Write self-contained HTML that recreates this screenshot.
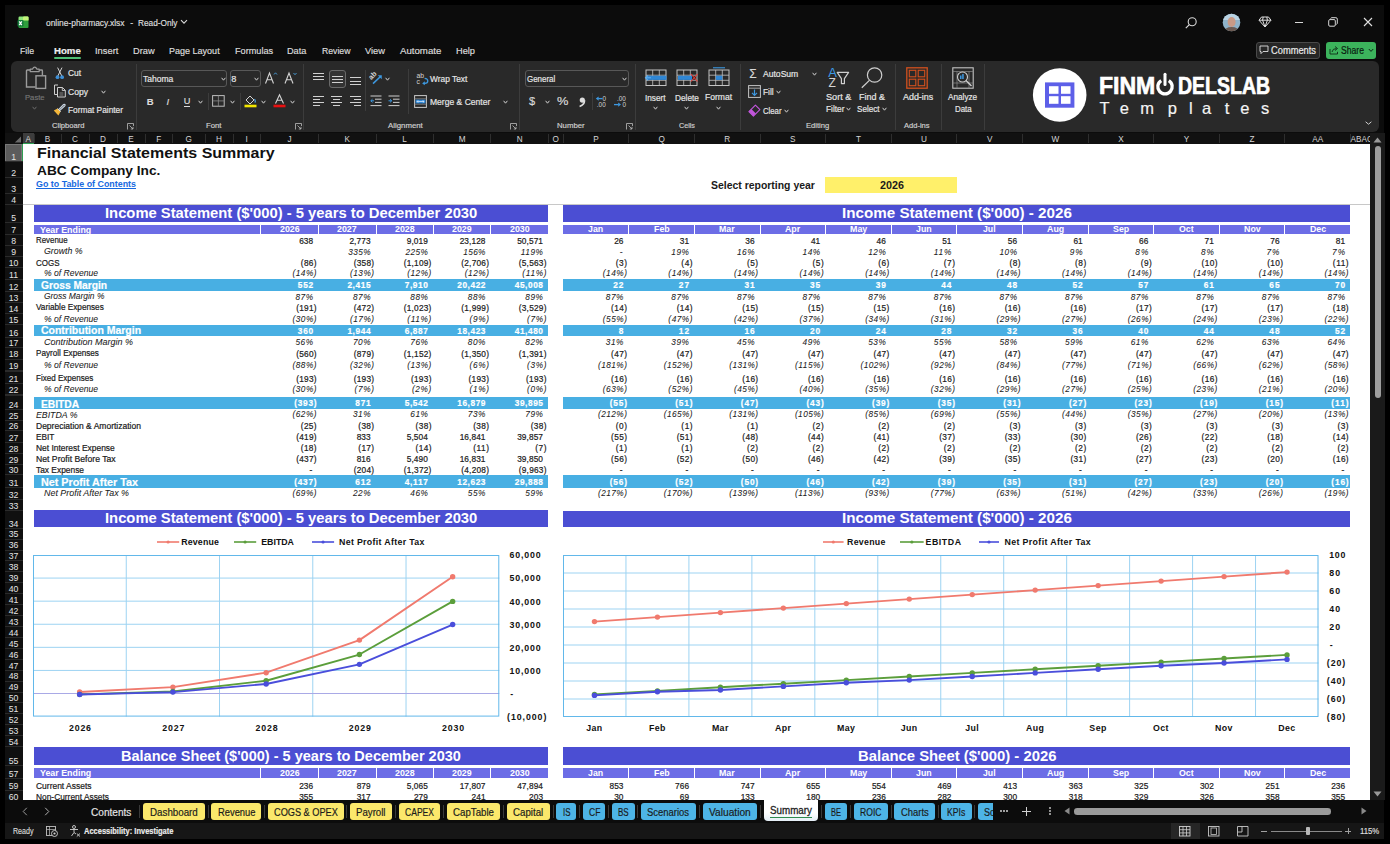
<!DOCTYPE html><html><head><meta charset="utf-8"><style>
html,body{margin:0;padding:0;}
body{width:1390px;height:844px;overflow:hidden;position:relative;background:#000;font-family:"Liberation Sans",sans-serif;}
.t{position:absolute;white-space:pre;}
div{box-sizing:border-box;}
svg{position:absolute;overflow:visible;}
.u{-webkit-text-stroke:0.18px currentColor;}
</style></head><body>
<div style="position:absolute;left:5.00px;top:5.00px;width:1379.00px;height:834.00px;background:#0c0c0c;"></div>
<svg style="left:17px;top:16px" width="12" height="13" viewBox="0 0 12 13">
<rect x="1.5" y="0.5" width="10" height="4.5" rx="1.2" fill="#8ee87a"/>
<rect x="6" y="0.5" width="5.5" height="4.5" rx="1" fill="#c4f47a"/>
<rect x="1.5" y="4.5" width="10" height="7.5" rx="1" fill="#2f9e3c"/>
<rect x="0.5" y="4" width="6" height="6.5" rx="1" fill="#137a3a"/>
<path d="M2.2 5.4 L4.8 9.1 M4.8 5.4 L2.2 9.1" stroke="#fff" stroke-width="1.3"/>
</svg>
<div class="t u" style="left:45.80px;top:18.92px;font-size:8.60px;line-height:8.60px;color:#dcdcdc;transform:scaleX(0.9806);transform-origin:0 0;">online-pharmacy.xlsx</div>
<div class="t u" style="left:130.20px;top:18.92px;font-size:8.60px;line-height:8.60px;color:#dcdcdc;">-</div>
<div class="t u" style="left:137.50px;top:18.92px;font-size:8.60px;line-height:8.60px;color:#dcdcdc;transform:scaleX(0.9609);transform-origin:0 0;">Read-Only</div>
<svg style="left:180px;top:19px" width="8" height="6" viewBox="0 0 8 6"><path d="M1 1.2 L4 4.2 L7 1.2" stroke="#d8d8d8" stroke-width="1.1" fill="none"/></svg>
<svg style="left:1184px;top:16px" width="14" height="14" viewBox="0 0 14 14"><circle cx="8.2" cy="5.8" r="4" stroke="#d8d8d8" stroke-width="1.1" fill="none"/><path d="M5.3 8.7 L1.8 12.2" stroke="#d8d8d8" stroke-width="1.2"/></svg>
<svg style="left:1222px;top:13px" width="19" height="19" viewBox="0 0 19 19">
<defs><clipPath id="av"><circle cx="9.5" cy="9.5" r="8.8"/></clipPath></defs>
<g clip-path="url(#av)"><rect width="19" height="19" fill="#8fb3c9"/><rect y="0" width="19" height="7" fill="#b9d3e3"/>
<ellipse cx="9.6" cy="9" rx="4" ry="5" fill="#c99a86"/><ellipse cx="9.6" cy="19" rx="8" ry="5" fill="#6b5a52"/></g></svg>
<svg style="left:1258px;top:16px" width="14" height="12" viewBox="0 0 14 12"><path d="M3.5 1 H10.5 L13 4.2 L7 11 L1 4.2 Z M1 4.2 H13 M5.2 1 L4.6 4.2 L7 11 L9.4 4.2 L8.8 1" stroke="#e0e0e0" stroke-width="1" fill="none" stroke-linejoin="round"/></svg>
<div style="position:absolute;left:1295.00px;top:21.50px;width:8.00px;height:1.10px;background:#d8d8d8;"></div>
<svg style="left:1328px;top:17px" width="10" height="10" viewBox="0 0 10 10"><rect x="0.7" y="2.6" width="6.6" height="6.6" rx="1.2" stroke="#d8d8d8" stroke-width="1" fill="none"/><path d="M2.6 1.6 Q2.9 0.7 3.8 0.7 H7.9 Q9.3 0.7 9.3 2.1 V6.2 Q9.3 7.1 8.4 7.4" stroke="#d8d8d8" stroke-width="1" fill="none"/></svg>
<svg style="left:1363px;top:17px" width="10" height="10" viewBox="0 0 10 10"><path d="M1 1 L9 9 M9 1 L1 9" stroke="#e0e0e0" stroke-width="1.1"/></svg>
<div class="t u" style="left:20.40px;top:47.01px;font-size:9.20px;line-height:9.20px;color:#dcdcdc;transform:scaleX(0.9519);transform-origin:0 0;">File</div>
<div class="t u" style="left:53.50px;top:46.93px;font-size:9.30px;line-height:9.30px;color:#f0f0f0;font-weight:bold;transform:scaleX(1.0366);transform-origin:0 0;">Home</div>
<div class="t u" style="left:94.60px;top:47.01px;font-size:9.20px;line-height:9.20px;color:#dcdcdc;transform:scaleX(1.0174);transform-origin:0 0;">Insert</div>
<div class="t u" style="left:132.60px;top:47.01px;font-size:9.20px;line-height:9.20px;color:#dcdcdc;transform:scaleX(1.0055);transform-origin:0 0;">Draw</div>
<div class="t u" style="left:169.00px;top:47.01px;font-size:9.20px;line-height:9.20px;color:#dcdcdc;transform:scaleX(0.9815);transform-origin:0 0;">Page Layout</div>
<div class="t u" style="left:235.20px;top:47.01px;font-size:9.20px;line-height:9.20px;color:#dcdcdc;transform:scaleX(0.9957);transform-origin:0 0;">Formulas</div>
<div class="t u" style="left:287.40px;top:47.01px;font-size:9.20px;line-height:9.20px;color:#dcdcdc;transform:scaleX(0.9970);transform-origin:0 0;">Data</div>
<div class="t u" style="left:321.50px;top:47.01px;font-size:9.20px;line-height:9.20px;color:#dcdcdc;transform:scaleX(0.9445);transform-origin:0 0;">Review</div>
<div class="t u" style="left:365.00px;top:47.01px;font-size:9.20px;line-height:9.20px;color:#dcdcdc;transform:scaleX(1.0111);transform-origin:0 0;">View</div>
<div class="t u" style="left:399.70px;top:47.01px;font-size:9.20px;line-height:9.20px;color:#dcdcdc;transform:scaleX(1.0514);transform-origin:0 0;">Automate</div>
<div class="t u" style="left:455.80px;top:47.01px;font-size:9.20px;line-height:9.20px;color:#dcdcdc;transform:scaleX(1.0050);transform-origin:0 0;">Help</div>
<div style="position:absolute;left:53.50px;top:57.00px;width:27.50px;height:2.00px;background:#4fbf75;border-radius:1px;"></div>
<div style="position:absolute;left:1255.7px;top:41.7px;width:64px;height:17px;background:#262626;border:1px solid #4a4a4a;border-radius:3px;"></div>
<svg style="left:1259px;top:45px" width="10" height="10" viewBox="0 0 10 10"><path d="M1 1 H9 V6.5 H4 L2 8.6 V6.5 H1 Z" stroke="#e0e0e0" stroke-width="0.9" fill="none" stroke-linejoin="round"/></svg>
<div class="t u" style="left:1270.60px;top:45.73px;font-size:10.00px;line-height:10.00px;color:#ececec;transform:scaleX(0.9307);transform-origin:0 0;">Comments</div>
<div style="position:absolute;left:1326px;top:41.7px;width:50px;height:17px;background:#3cb35c;border-radius:3px;"></div>
<svg style="left:1328.5px;top:45px" width="10" height="10" viewBox="0 0 10 10"><path d="M1 4 V9 H8.5 V6.8" stroke="#0d2a16" stroke-width="0.9" fill="none"/><path d="M3 7 Q3.5 3.5 7.5 3.5 M6 1.5 L8.5 3.5 L6 5.5" stroke="#0d2a16" stroke-width="0.9" fill="none"/></svg>
<div class="t u" style="left:1341.00px;top:45.73px;font-size:10.00px;line-height:10.00px;color:#0a2010;transform:scaleX(0.8614);transform-origin:0 0;-webkit-text-stroke:0.2px #0a2010;">Share</div>
<svg style="left:1368px;top:48px" width="6" height="5" viewBox="0 0 6 5"><path d="M0.8 1 L3 3.4 L5.2 1" stroke="#0d2a16" stroke-width="1" fill="none"/></svg>
<div style="position:absolute;left:11.00px;top:61.30px;width:1368.00px;height:71.20px;background:#292929;border-radius:6px;"></div>
<div style="position:absolute;left:135.50px;top:64.00px;width:1.00px;height:65.50px;background:#3c3c3c;"></div>
<div style="position:absolute;left:303.30px;top:64.00px;width:1.00px;height:65.50px;background:#3c3c3c;"></div>
<div style="position:absolute;left:518.60px;top:64.00px;width:1.00px;height:65.50px;background:#3c3c3c;"></div>
<div style="position:absolute;left:634.70px;top:64.00px;width:1.00px;height:65.50px;background:#3c3c3c;"></div>
<div style="position:absolute;left:739.70px;top:64.00px;width:1.00px;height:65.50px;background:#3c3c3c;"></div>
<div style="position:absolute;left:894.70px;top:64.00px;width:1.00px;height:65.50px;background:#3c3c3c;"></div>
<div style="position:absolute;left:940.70px;top:64.00px;width:1.00px;height:65.50px;background:#3c3c3c;"></div>
<div style="position:absolute;left:984.40px;top:64.00px;width:1.00px;height:65.50px;background:#3c3c3c;"></div>
<svg style="left:25px;top:66px" width="22" height="24" viewBox="0 0 22 24">
<path d="M5.2 4 H2.2 Q1.5 4 1.5 4.7 V21 H10.5" stroke="#9c9c9c" stroke-width="1.4" fill="none"/>
<path d="M5.2 5.6 V3.2 H7.4 Q8.4 1.2 9.7 1.2 Q11 1.2 12 3.2 H14.2 V5.6 Z" stroke="#9c9c9c" stroke-width="1.2" fill="none" stroke-linejoin="round"/>
<path d="M14.2 4 H16.7 Q17.4 4 17.4 4.7 V9.5" stroke="#9c9c9c" stroke-width="1.4" fill="none"/>
<rect x="11" y="9.8" width="9.6" height="12.6" stroke="#9c9c9c" stroke-width="1.4" fill="none"/>
</svg>
<div class="t u" style="left:24.70px;top:94.20px;font-size:7.80px;line-height:7.80px;color:#767676;transform:scaleX(0.9835);transform-origin:0 0;">Paste</div>
<svg style="left:32.0px;top:106.0px" width="5" height="4" viewBox="0 0 5 4"><path d="M0.6 0.8 L2.5 3.2 L4.4 0.8" stroke="#6a6a6a" stroke-width="1" fill="none"/></svg>
<svg style="left:55px;top:67px" width="10" height="13" viewBox="0 0 10 13">
<path d="M2.6 0.6 L6.8 9 M7 0.6 L2.8 9" stroke="#d4d4d4" stroke-width="1" fill="none"/>
<circle cx="2.5" cy="10.2" r="1.9" fill="#3d8fd6"/><circle cx="7.1" cy="10.2" r="1.9" fill="#3d8fd6"/></svg>
<div class="t u" style="left:68.00px;top:69.12px;font-size:8.60px;line-height:8.60px;color:#e6e6e6;transform:scaleX(0.9721);transform-origin:0 0;">Cut</div>
<svg style="left:53px;top:84px" width="14" height="14" viewBox="0 0 14 14">
<path d="M5 1 H1.5 V10.5 H4" stroke="#cfcfcf" stroke-width="1" fill="none"/>
<path d="M4.5 3.5 H9.5 L12.3 6.3 V13 H4.5 Z" stroke="#cfcfcf" stroke-width="1" fill="none" stroke-linejoin="round"/>
<path d="M9.3 3.5 V6.5 H12.3" stroke="#cfcfcf" stroke-width="0.9" fill="none"/>
<path d="M6.5 9 H10.3 M6.5 11 H10.3" stroke="#9a9a9a" stroke-width="0.8"/></svg>
<div class="t u" style="left:68.00px;top:87.62px;font-size:8.60px;line-height:8.60px;color:#e6e6e6;transform:scaleX(0.9960);transform-origin:0 0;">Copy</div>
<svg style="left:100.7px;top:90.3px" width="5" height="4" viewBox="0 0 5 4"><path d="M0.6 0.8 L2.5 3.2 L4.4 0.8" stroke="#d0d0d0" stroke-width="1" fill="none"/></svg>
<svg style="left:53px;top:103px" width="13" height="13" viewBox="0 0 13 13">
<path d="M0.8 7.6 L4.6 5.6 L7.6 8.6 L5.4 12.4 Z" fill="#f3b63a"/>
<path d="M4.6 5.6 L7.6 8.6" stroke="#e8e8e8" stroke-width="1"/>
<path d="M5.6 6.6 L10.6 1.6 Q11.6 1 12 1.6 Q12.4 2.2 11.6 3 L6.6 7.6" stroke="#c8d4e0" stroke-width="1.2" fill="none"/></svg>
<div class="t u" style="left:68.00px;top:106.22px;font-size:8.60px;line-height:8.60px;color:#e6e6e6;transform:scaleX(0.9668);transform-origin:0 0;">Format Painter</div>
<div class="t u" style="left:52.40px;top:121.68px;font-size:7.70px;line-height:7.70px;color:#cfcfcf;transform:scaleX(0.9892);transform-origin:0 0;">Clipboard</div>
<svg style="left:127px;top:122.5px" width="7" height="7" viewBox="0 0 7 7"><path d="M0.5 6.5 V0.5 H6.5 V3" stroke="#bdbdbd" stroke-width="0.8" fill="none"/><path d="M2.5 2.5 L6 6 M6 3.8 V6 H3.8" stroke="#bdbdbd" stroke-width="0.8" fill="none"/></svg>
<div style="position:absolute;left:141.4px;top:70px;width:86px;height:17.3px;border:1px solid #585858;border-radius:3px;"></div>
<div class="t u" style="left:143.20px;top:74.81px;font-size:9.20px;line-height:9.20px;color:#e8e8e8;transform:scaleX(0.9282);transform-origin:0 0;">Tahoma</div>
<svg style="left:221.0px;top:77.2px" width="5" height="4" viewBox="0 0 5 4"><path d="M0.6 0.8 L2.5 3.2 L4.4 0.8" stroke="#d0d0d0" stroke-width="1" fill="none"/></svg>
<div style="position:absolute;left:229.5px;top:70px;width:31px;height:17.3px;border:1px solid #585858;border-radius:3px;"></div>
<div class="t u" style="left:231.20px;top:74.81px;font-size:9.20px;line-height:9.20px;color:#e8e8e8;">8</div>
<svg style="left:253.8px;top:77.2px" width="5" height="4" viewBox="0 0 5 4"><path d="M0.6 0.8 L2.5 3.2 L4.4 0.8" stroke="#d0d0d0" stroke-width="1" fill="none"/></svg>
<svg style="left:264px;top:71px" width="34" height="14" viewBox="0 0 34 14">
<path d="M1.5 12.5 L5.5 2 L9.5 12.5 M3 8.7 H8" stroke="#d4d4d4" stroke-width="1.1" fill="none"/>
<path d="M10 3.5 L11.5 1.8 L13 3.5" stroke="#4aa3e0" stroke-width="0.9" fill="none"/>
<path d="M21 12.5 L25 2 L29 12.5 M22.5 8.7 H27.5" stroke="#d4d4d4" stroke-width="1.1" fill="none"/>
<path d="M29.5 2 L31 3.7 L32.5 2" stroke="#4aa3e0" stroke-width="0.9" fill="none"/></svg>
<div class="t u" style="left:146.80px;top:96.96px;font-size:9.50px;line-height:9.50px;color:#dcdcdc;font-weight:bold;">B</div>
<div class="t u" style="left:166.50px;top:96.96px;font-size:9.50px;line-height:9.50px;color:#dcdcdc;font-style:italic;">I</div>
<div class="t u" style="left:183.70px;top:96.61px;font-size:9.20px;line-height:9.20px;color:#dcdcdc;">U</div>
<div style="position:absolute;left:183.70px;top:106.00px;width:6.50px;height:0.90px;background:#dcdcdc;"></div>
<svg style="left:198.1px;top:99.5px" width="5" height="4" viewBox="0 0 5 4"><path d="M0.6 0.8 L2.5 3.2 L4.4 0.8" stroke="#d0d0d0" stroke-width="1" fill="none"/></svg>
<div style="position:absolute;left:208.40px;top:93.00px;width:1.00px;height:17.00px;background:#3c3c3c;"></div>
<svg style="left:211.5px;top:95px" width="13" height="12" viewBox="0 0 13 12">
<rect x="0.6" y="0.6" width="11.6" height="10.6" stroke="#bdbdbd" stroke-width="1" fill="none"/>
<path d="M6.4 0.6 V11.2 M0.6 5.9 H12.2" stroke="#8a8a8a" stroke-width="0.8"/></svg>
<svg style="left:229.8px;top:99.5px" width="5" height="4" viewBox="0 0 5 4"><path d="M0.6 0.8 L2.5 3.2 L4.4 0.8" stroke="#d0d0d0" stroke-width="1" fill="none"/></svg>
<div style="position:absolute;left:239.80px;top:93.00px;width:1.00px;height:17.00px;background:#3c3c3c;"></div>
<svg style="left:243.5px;top:94px" width="13" height="14" viewBox="0 0 13 14">
<path d="M2 6 L6 2 L10 6 L6 10 Z" stroke="#d4d4d4" stroke-width="1" fill="none"/>
<path d="M10.5 5 Q12 7.5 10.7 8.5" stroke="#4aa3e0" stroke-width="1.2" fill="none"/>
<rect x="0.5" y="10.7" width="12" height="2.6" fill="#f2e600"/></svg>
<svg style="left:260.5px;top:99.5px" width="5" height="4" viewBox="0 0 5 4"><path d="M0.6 0.8 L2.5 3.2 L4.4 0.8" stroke="#d0d0d0" stroke-width="1" fill="none"/></svg>
<svg style="left:272.5px;top:94px" width="13" height="14" viewBox="0 0 13 14">
<path d="M2.5 9.5 L6.5 0.8 L10.5 9.5 M4 6.3 H9" stroke="#d4d4d4" stroke-width="1.1" fill="none"/>
<rect x="0.5" y="10.7" width="12" height="2.6" fill="#e81010"/></svg>
<svg style="left:290.1px;top:99.5px" width="5" height="4" viewBox="0 0 5 4"><path d="M0.6 0.8 L2.5 3.2 L4.4 0.8" stroke="#d0d0d0" stroke-width="1" fill="none"/></svg>
<div class="t u" style="left:205.80px;top:121.68px;font-size:7.70px;line-height:7.70px;color:#cfcfcf;transform:scaleX(1.0065);transform-origin:0 0;">Font</div>
<svg style="left:295px;top:122.5px" width="7" height="7" viewBox="0 0 7 7"><path d="M0.5 6.5 V0.5 H6.5 V3" stroke="#bdbdbd" stroke-width="0.8" fill="none"/><path d="M2.5 2.5 L6 6 M6 3.8 V6 H3.8" stroke="#bdbdbd" stroke-width="0.8" fill="none"/></svg>
<div style="position:absolute;left:312.70px;top:72.50px;width:11.00px;height:1.00px;background:#d0d0d0;"></div>
<div style="position:absolute;left:312.70px;top:75.80px;width:11.00px;height:1.00px;background:#d0d0d0;"></div>
<div style="position:absolute;left:312.70px;top:79.10px;width:11.00px;height:1.00px;background:#d0d0d0;"></div>
<div style="position:absolute;left:328.5px;top:70.3px;width:17.4px;height:17.4px;border:1px solid #6a6a6a;border-radius:3px;background:#333;"></div>
<div style="position:absolute;left:331.50px;top:75.50px;width:11.00px;height:1.00px;background:#d0d0d0;"></div>
<div style="position:absolute;left:331.50px;top:78.50px;width:11.00px;height:1.00px;background:#d0d0d0;"></div>
<div style="position:absolute;left:331.50px;top:81.50px;width:11.00px;height:1.00px;background:#d0d0d0;"></div>
<div style="position:absolute;left:349.80px;top:77.40px;width:11.00px;height:1.00px;background:#d0d0d0;"></div>
<div style="position:absolute;left:349.80px;top:80.80px;width:11.00px;height:1.00px;background:#d0d0d0;"></div>
<div style="position:absolute;left:349.80px;top:84.20px;width:11.00px;height:1.00px;background:#d0d0d0;"></div>
<div style="position:absolute;left:365.30px;top:70.00px;width:1.00px;height:40.60px;background:#3c3c3c;"></div>
<svg style="left:369px;top:71px" width="15" height="15" viewBox="0 0 15 15">
<text x="0" y="0" font-size="7.2" font-weight="bold" fill="#d8d8d8" font-family="Liberation Sans" transform="translate(2.2 9.2) rotate(-45)">ab</text>
<path d="M4 12.6 L11.8 5.2" stroke="#3d98e0" stroke-width="1.5"/><path d="M8.8 4.3 L12.8 4.2 L12.7 8.2 Z" fill="#3d98e0"/></svg>
<svg style="left:385.3px;top:77.3px" width="5" height="4" viewBox="0 0 5 4"><path d="M0.6 0.8 L2.5 3.2 L4.4 0.8" stroke="#d0d0d0" stroke-width="1" fill="none"/></svg>
<div style="position:absolute;left:312.70px;top:96.00px;width:11.00px;height:1.00px;background:#d0d0d0;"></div>
<div style="position:absolute;left:312.70px;top:99.00px;width:7.00px;height:1.00px;background:#d0d0d0;"></div>
<div style="position:absolute;left:312.70px;top:102.00px;width:11.00px;height:1.00px;background:#d0d0d0;"></div>
<div style="position:absolute;left:312.70px;top:105.00px;width:7.00px;height:1.00px;background:#d0d0d0;"></div>
<div style="position:absolute;left:331.00px;top:96.00px;width:11.00px;height:1.00px;background:#d0d0d0;"></div>
<div style="position:absolute;left:333.00px;top:99.00px;width:7.00px;height:1.00px;background:#d0d0d0;"></div>
<div style="position:absolute;left:331.00px;top:102.00px;width:11.00px;height:1.00px;background:#d0d0d0;"></div>
<div style="position:absolute;left:333.00px;top:105.00px;width:7.00px;height:1.00px;background:#d0d0d0;"></div>
<div style="position:absolute;left:349.80px;top:96.00px;width:11.00px;height:1.00px;background:#d0d0d0;"></div>
<div style="position:absolute;left:353.80px;top:99.00px;width:7.00px;height:1.00px;background:#d0d0d0;"></div>
<div style="position:absolute;left:349.80px;top:102.00px;width:11.00px;height:1.00px;background:#d0d0d0;"></div>
<div style="position:absolute;left:353.80px;top:105.00px;width:7.00px;height:1.00px;background:#d0d0d0;"></div>
<svg style="left:370px;top:95px" width="31" height="12" viewBox="0 0 31 12">
<path d="M0.5 1 H11.5 M5 4.2 H11.5 M5 7.4 H11.5 M0.5 10.6 H11.5" stroke="#cfcfcf" stroke-width="1"/>
<path d="M4 5.8 H0.8 M2.5 4.2 L0.8 5.8 L2.5 7.4" stroke="#3d98e0" stroke-width="1" fill="none"/>
<path d="M18.5 1 H29.5 M23 4.2 H29.5 M23 7.4 H29.5 M18.5 10.6 H29.5" stroke="#cfcfcf" stroke-width="1"/>
<path d="M18.5 5.8 H21.7 M20 4.2 L21.7 5.8 L20 7.4" stroke="#3d98e0" stroke-width="1" fill="none"/></svg>
<div style="position:absolute;left:407.60px;top:69.00px;width:1.00px;height:45.00px;background:#3c3c3c;"></div>
<svg style="left:415.5px;top:72px" width="13" height="13" viewBox="0 0 13 13">
<text x="0.6" y="6.4" font-size="6.8" fill="#d4d4d4" font-family="Liberation Sans">ab</text>
<text x="0.6" y="12.2" font-size="6.8" fill="#d4d4d4" font-family="Liberation Sans">c</text>
<path d="M8.6 6.4 Q11.8 6.6 11.8 9 Q11.8 11.4 8.8 11.4 H7.5" stroke="#3d98e0" stroke-width="1.3" fill="none"/>
<path d="M8.8 9.3 L6.2 11.4 L8.8 13.2 Z" fill="#3d98e0"/></svg>
<div class="t u" style="left:429.70px;top:74.92px;font-size:8.60px;line-height:8.60px;color:#e6e6e6;transform:scaleX(0.9714);transform-origin:0 0;">Wrap Text</div>
<svg style="left:414px;top:94.5px" width="13" height="13" viewBox="0 0 13 13">
<rect x="0.6" y="0.6" width="11.8" height="11.8" stroke="#c8c8c8" stroke-width="1" fill="none"/>
<path d="M0.6 3.8 H12.4 M0.6 9.2 H12.4" stroke="#8a8a8a" stroke-width="0.8"/>
<rect x="1.5" y="4.6" width="10" height="3.8" fill="#2f86d4"/>
<path d="M3 6.5 H10 M4.2 5.3 L3 6.5 L4.2 7.7 M8.8 5.3 L10 6.5 L8.8 7.7" stroke="#e8f2ff" stroke-width="0.7" fill="none"/></svg>
<div class="t u" style="left:429.70px;top:97.52px;font-size:8.60px;line-height:8.60px;color:#e6e6e6;transform:scaleX(0.9931);transform-origin:0 0;">Merge &amp; Center</div>
<svg style="left:502.5px;top:99.5px" width="5" height="4" viewBox="0 0 5 4"><path d="M0.6 0.8 L2.5 3.2 L4.4 0.8" stroke="#d0d0d0" stroke-width="1" fill="none"/></svg>
<div class="t u" style="left:387.80px;top:121.68px;font-size:7.70px;line-height:7.70px;color:#cfcfcf;transform:scaleX(1.0168);transform-origin:0 0;">Alignment</div>
<svg style="left:510px;top:122.5px" width="7" height="7" viewBox="0 0 7 7"><path d="M0.5 6.5 V0.5 H6.5 V3" stroke="#bdbdbd" stroke-width="0.8" fill="none"/><path d="M2.5 2.5 L6 6 M6 3.8 V6 H3.8" stroke="#bdbdbd" stroke-width="0.8" fill="none"/></svg>
<div style="position:absolute;left:525.2px;top:70.4px;width:104px;height:17px;border:1px solid #585858;border-radius:3px;"></div>
<div class="t u" style="left:527.00px;top:74.98px;font-size:9.00px;line-height:9.00px;color:#e8e8e8;transform:scaleX(0.8833);transform-origin:0 0;">General</div>
<svg style="left:622.4px;top:77.2px" width="5" height="4" viewBox="0 0 5 4"><path d="M0.6 0.8 L2.5 3.2 L4.4 0.8" stroke="#d0d0d0" stroke-width="1" fill="none"/></svg>
<div class="t u" style="left:529.00px;top:96.19px;font-size:11.00px;line-height:11.00px;color:#d8d8d8;">$</div>
<svg style="left:544.5px;top:99.5px" width="5" height="4" viewBox="0 0 5 4"><path d="M0.6 0.8 L2.5 3.2 L4.4 0.8" stroke="#d0d0d0" stroke-width="1" fill="none"/></svg>
<div class="t u" style="left:556.60px;top:95.77px;font-size:11.50px;line-height:11.50px;color:#d8d8d8;transform:scaleX(1.1138);transform-origin:0 0;">%</div>
<svg style="left:577.5px;top:96.5px" width="8" height="10" viewBox="0 0 8 10"><circle cx="4.3" cy="3.1" r="2.6" fill="#dcdcdc"/><path d="M6.6 3.3 Q6.6 7.6 1.6 9.6" stroke="#dcdcdc" stroke-width="1.6" fill="none"/></svg>
<div style="position:absolute;left:591.50px;top:93.00px;width:1.00px;height:17.00px;background:#3c3c3c;"></div>
<svg style="left:595px;top:95px" width="33" height="13" viewBox="0 0 33 13">
<text x="7.6" y="5.8" font-size="6.4" fill="#d4d4d4" font-family="Liberation Sans">0</text>
<text x="1.8" y="11.8" font-size="6.4" fill="#d4d4d4" font-family="Liberation Sans">.00</text>
<path d="M7.6 3.6 H3.2" stroke="#3d98e0" stroke-width="1.3"/><path d="M3.6 1.4 L0.8 3.6 L3.6 5.8 Z" fill="#3d98e0"/>
<text x="22" y="5.8" font-size="6.4" fill="#d4d4d4" font-family="Liberation Sans">.00</text>
<text x="27.5" y="11.8" font-size="6.4" fill="#d4d4d4" font-family="Liberation Sans">0</text>
<path d="M19 9.6 H23.6" stroke="#3d98e0" stroke-width="1.3"/><path d="M23.2 7.4 L26 9.6 L23.2 11.8 Z" fill="#3d98e0"/></svg>
<div class="t u" style="left:556.60px;top:121.68px;font-size:7.70px;line-height:7.70px;color:#cfcfcf;transform:scaleX(1.0119);transform-origin:0 0;">Number</div>
<svg style="left:626px;top:122.5px" width="7" height="7" viewBox="0 0 7 7"><path d="M0.5 6.5 V0.5 H6.5 V3" stroke="#bdbdbd" stroke-width="0.8" fill="none"/><path d="M2.5 2.5 L6 6 M6 3.8 V6 H3.8" stroke="#bdbdbd" stroke-width="0.8" fill="none"/></svg>
<svg style="left:644.5px;top:66.5px" width="24" height="20" viewBox="0 0 24 20"><rect x="1" y="3" width="20" height="15.5" stroke="#c4c4c4" stroke-width="1" fill="none"/><path d="M7.7 3 V18.5 M14.3 3 V18.5 M1 8.2 H21 M1 13.3 H21" stroke="#c4c4c4" stroke-width="0.8"/><rect x="2" y="8.7" width="19.5" height="4.2" fill="#2f86d4"/><path d="M6 10.8 H0.5 M3 8.3 L0.5 10.8 L3 13.3" stroke="#5fb0f0" stroke-width="1.1" fill="none"/></svg>
<svg style="left:676px;top:66.5px" width="24" height="20" viewBox="0 0 24 20"><rect x="1" y="3" width="20" height="15.5" stroke="#c4c4c4" stroke-width="1" fill="none"/><path d="M7.7 3 V18.5 M14.3 3 V18.5 M1 8.2 H21 M1 13.3 H21" stroke="#c4c4c4" stroke-width="0.8"/><rect x="2" y="8.7" width="14" height="4.2" fill="#2f86d4"/><path d="M15 7 L21.5 14.5 M21.5 7 L15 14.5" stroke="#e53935" stroke-width="1.1"/></svg>
<svg style="left:707.5px;top:66.5px" width="24" height="20" viewBox="0 0 24 20"><rect x="1" y="3" width="20" height="15.5" stroke="#c4c4c4" stroke-width="1" fill="none"/><path d="M7.7 3 V18.5 M14.3 3 V18.5 M1 8.2 H21 M1 13.3 H21" stroke="#c4c4c4" stroke-width="0.8"/><rect x="7.8" y="8.7" width="6.5" height="4.2" fill="#2f86d4"/><path d="M5 0.8 H17" stroke="#3d98e0" stroke-width="1.1"/></svg>
<div class="t u" style="left:645.40px;top:93.52px;font-size:8.60px;line-height:8.60px;color:#e6e6e6;transform:scaleX(0.9581);transform-origin:0 0;">Insert</div>
<div class="t u" style="left:675.00px;top:93.52px;font-size:8.60px;line-height:8.60px;color:#e6e6e6;transform:scaleX(0.9656);transform-origin:0 0;">Delete</div>
<div class="t u" style="left:705.30px;top:93.02px;font-size:8.60px;line-height:8.60px;color:#e6e6e6;transform:scaleX(0.9956);transform-origin:0 0;">Format</div>
<svg style="left:653.0px;top:106.3px" width="5" height="4" viewBox="0 0 5 4"><path d="M0.6 0.8 L2.5 3.2 L4.4 0.8" stroke="#d0d0d0" stroke-width="1" fill="none"/></svg>
<svg style="left:683.5px;top:106.3px" width="5" height="4" viewBox="0 0 5 4"><path d="M0.6 0.8 L2.5 3.2 L4.4 0.8" stroke="#d0d0d0" stroke-width="1" fill="none"/></svg>
<svg style="left:715.5px;top:106.0px" width="5" height="4" viewBox="0 0 5 4"><path d="M0.6 0.8 L2.5 3.2 L4.4 0.8" stroke="#d0d0d0" stroke-width="1" fill="none"/></svg>
<div class="t u" style="left:679.00px;top:121.68px;font-size:7.70px;line-height:7.70px;color:#cfcfcf;transform:scaleX(0.9339);transform-origin:0 0;">Cells</div>
<div class="t u" style="left:749.20px;top:68.34px;font-size:12.00px;line-height:12.00px;color:#d8d8d8;">Σ</div>
<div class="t u" style="left:763.00px;top:70.22px;font-size:8.60px;line-height:8.60px;color:#e6e6e6;transform:scaleX(0.9975);transform-origin:0 0;">AutoSum</div>
<svg style="left:811.5px;top:72.0px" width="5" height="4" viewBox="0 0 5 4"><path d="M0.6 0.8 L2.5 3.2 L4.4 0.8" stroke="#d0d0d0" stroke-width="1" fill="none"/></svg>
<svg style="left:748px;top:84.5px" width="13" height="13" viewBox="0 0 13 13">
<rect x="0.6" y="0.6" width="11.8" height="11.8" stroke="#c4c4c4" stroke-width="1" fill="none"/>
<path d="M0.6 3.2 H12.4" stroke="#c4c4c4" stroke-width="0.8"/>
<path d="M6.5 4.5 V10 M4 7.8 L6.5 10.3 L9 7.8" stroke="#3d98e0" stroke-width="1.2" fill="none"/></svg>
<div class="t u" style="left:763.00px;top:88.22px;font-size:8.60px;line-height:8.60px;color:#e6e6e6;transform:scaleX(0.9758);transform-origin:0 0;">Fill</div>
<svg style="left:775.5px;top:89.5px" width="5" height="4" viewBox="0 0 5 4"><path d="M0.6 0.8 L2.5 3.2 L4.4 0.8" stroke="#d0d0d0" stroke-width="1" fill="none"/></svg>
<svg style="left:748px;top:103.5px" width="13" height="13" viewBox="0 0 13 13">
<path d="M0.9 7.6 L7.4 1.1 L11.9 5.6 L5.4 12.1 Z" stroke="#c256dc" stroke-width="1.1" fill="none" stroke-linejoin="round"/>
<path d="M0.9 7.6 L3.4 5.1 L7.9 9.6 L5.4 12.1 Z" fill="#c256dc"/></svg>
<div class="t u" style="left:763.00px;top:106.92px;font-size:8.60px;line-height:8.60px;color:#e6e6e6;transform:scaleX(0.9001);transform-origin:0 0;">Clear</div>
<svg style="left:784.2px;top:108.5px" width="5" height="4" viewBox="0 0 5 4"><path d="M0.6 0.8 L2.5 3.2 L4.4 0.8" stroke="#d0d0d0" stroke-width="1" fill="none"/></svg>
<svg style="left:826px;top:66px" width="25" height="23" viewBox="0 0 25 23">
<text x="2.2" y="11.2" font-size="13" fill="#3d9be6" font-family="Liberation Sans">A</text>
<text x="2.6" y="21" font-size="12" fill="#d4d4d4" font-family="Liberation Sans">Z</text>
<path d="M11.2 6.4 H22.6 L18.4 12.6 V17.6 H15.4 V12.6 Z" stroke="#cfcfcf" stroke-width="1.2" fill="none" stroke-linejoin="round"/></svg>
<div class="t u" style="left:826.00px;top:93.02px;font-size:8.60px;line-height:8.60px;color:#e6e6e6;transform:scaleX(1.0624);transform-origin:0 0;">Sort &amp;</div>
<div class="t u" style="left:826.00px;top:104.52px;font-size:8.60px;line-height:8.60px;color:#e6e6e6;transform:scaleX(0.9690);transform-origin:0 0;">Filter</div>
<svg style="left:845.5px;top:106.5px" width="5" height="4" viewBox="0 0 5 4"><path d="M0.6 0.8 L2.5 3.2 L4.4 0.8" stroke="#d0d0d0" stroke-width="1" fill="none"/></svg>
<svg style="left:860px;top:67px" width="25" height="22" viewBox="0 0 25 22">
<circle cx="14.6" cy="8" r="7.2" stroke="#cfcfcf" stroke-width="1.2" fill="none"/>
<path d="M9.4 13.4 L1.8 20.8" stroke="#cfcfcf" stroke-width="1.3"/></svg>
<div class="t u" style="left:859.00px;top:93.02px;font-size:8.60px;line-height:8.60px;color:#e6e6e6;transform:scaleX(1.0461);transform-origin:0 0;">Find &amp;</div>
<div class="t u" style="left:857.00px;top:104.52px;font-size:8.60px;line-height:8.60px;color:#e6e6e6;transform:scaleX(0.9411);transform-origin:0 0;">Select</div>
<svg style="left:881.5px;top:106.5px" width="5" height="4" viewBox="0 0 5 4"><path d="M0.6 0.8 L2.5 3.2 L4.4 0.8" stroke="#d0d0d0" stroke-width="1" fill="none"/></svg>
<div class="t u" style="left:805.70px;top:121.68px;font-size:7.70px;line-height:7.70px;color:#cfcfcf;transform:scaleX(0.9889);transform-origin:0 0;">Editing</div>
<svg style="left:906px;top:66.5px" width="22" height="22" viewBox="0 0 22 22">
<rect x="0.8" y="0.8" width="20.4" height="20.4" stroke="#d2501e" stroke-width="1.3" fill="none"/>
<rect x="3.3" y="3.3" width="6.5" height="6.5" stroke="#d2501e" stroke-width="1.1" fill="none"/>
<rect x="12.2" y="3.3" width="6.5" height="6.5" stroke="#d2501e" stroke-width="1.1" fill="none"/>
<rect x="3.3" y="12.2" width="6.5" height="6.5" stroke="#d2501e" stroke-width="1.1" fill="none"/>
<rect x="12.2" y="12.2" width="6.5" height="6.5" stroke="#d2501e" stroke-width="1.1" fill="none"/></svg>
<div class="t u" style="left:902.80px;top:93.02px;font-size:8.60px;line-height:8.60px;color:#e6e6e6;transform:scaleX(1.0359);transform-origin:0 0;">Add-ins</div>
<div class="t u" style="left:904.40px;top:121.68px;font-size:7.70px;line-height:7.70px;color:#cfcfcf;transform:scaleX(0.9807);transform-origin:0 0;">Add-ins</div>
<svg style="left:951.5px;top:66.5px" width="22" height="22" viewBox="0 0 22 22">
<rect x="0.8" y="0.8" width="20.4" height="20.4" stroke="#c4c4c4" stroke-width="1.1" fill="none"/>
<path d="M0.8 4.5 H21.2 M0.8 16 H21.2 M5 4.5 V21 M17 4.5 V21" stroke="#8a8a8a" stroke-width="0.7"/>
<circle cx="10.5" cy="10" r="5" stroke="#cfcfcf" stroke-width="1.1" fill="#292929"/>
<rect x="8" y="8.5" width="1.5" height="3.5" fill="#3d98e0"/><rect x="10.2" y="7" width="1.5" height="5" fill="#3d98e0"/>
<path d="M14 13.5 L19.5 19" stroke="#cfcfcf" stroke-width="1.4"/></svg>
<div class="t u" style="left:948.40px;top:93.02px;font-size:8.60px;line-height:8.60px;color:#e6e6e6;transform:scaleX(0.9537);transform-origin:0 0;">Analyze</div>
<div class="t u" style="left:955.00px;top:104.52px;font-size:8.60px;line-height:8.60px;color:#e6e6e6;transform:scaleX(0.9181);transform-origin:0 0;">Data</div>
<svg style="left:1032px;top:68px" width="56" height="55" viewBox="0 0 56 55">
<circle cx="27.7" cy="27" r="26.8" fill="#ffffff"/>
<rect x="13" y="14.4" width="29.4" height="25.3" fill="#5d5fe8"/>
<rect x="17" y="18.2" width="9.5" height="7.6" fill="#fff"/><rect x="29" y="18.2" width="9.5" height="7.6" fill="#fff"/>
<rect x="17" y="28.2" width="9.5" height="7.6" fill="#fff"/><rect x="29" y="28.2" width="9.5" height="7.6" fill="#fff"/>
</svg>
<div class="t u" style="left:1099.3px;top:74.28px;font-size:24px;line-height:24px;font-weight:bold;color:#fff;-webkit-text-stroke:0.7px #fff;transform:scaleX(0.9599);transform-origin:0 0;">FINM</div>
<div class="t u" style="left:1177.5px;top:74.28px;font-size:24px;line-height:24px;font-weight:bold;color:#fff;-webkit-text-stroke:0.7px #fff;transform:scaleX(0.8135);transform-origin:0 0;">DELSLAB</div>
<svg style="left:1155px;top:72px" width="20" height="24" viewBox="0 0 20 24"><path d="M6.2 8.6 A7.2 7.2 0 1 0 13.8 8.6" stroke="#fff" stroke-width="3.3" fill="none"/><path d="M10 2.2 V12.5" stroke="#fff" stroke-width="3" stroke-linecap="round"/></svg>
<div class="t u" style="left:1099.60px;top:99.73px;font-size:16.50px;line-height:16.50px;color:#f4f4f4;">T</div>
<div class="t u" style="left:1119.80px;top:99.73px;font-size:16.50px;line-height:16.50px;color:#f4f4f4;">e</div>
<div class="t u" style="left:1140.30px;top:99.73px;font-size:16.50px;line-height:16.50px;color:#f4f4f4;">m</div>
<div class="t u" style="left:1167.80px;top:99.73px;font-size:16.50px;line-height:16.50px;color:#f4f4f4;">p</div>
<div class="t u" style="left:1189.00px;top:99.73px;font-size:16.50px;line-height:16.50px;color:#f4f4f4;">l</div>
<div class="t u" style="left:1202.00px;top:99.73px;font-size:16.50px;line-height:16.50px;color:#f4f4f4;">a</div>
<div class="t u" style="left:1224.80px;top:99.73px;font-size:16.50px;line-height:16.50px;color:#f4f4f4;">t</div>
<div class="t u" style="left:1240.30px;top:99.73px;font-size:16.50px;line-height:16.50px;color:#f4f4f4;">e</div>
<div class="t u" style="left:1261.00px;top:99.73px;font-size:16.50px;line-height:16.50px;color:#f4f4f4;">s</div>
<svg style="left:1364.5px;top:121.0px" width="7" height="4" viewBox="0 0 7 4"><path d="M0.6 0.8 L3.5 3.2 L6.4 0.8" stroke="#d0d0d0" stroke-width="1" fill="none"/></svg>
<div style="position:absolute;left:5.00px;top:133.00px;width:1365.00px;height:10.60px;background:#111111;"></div>
<div style="position:absolute;left:22.50px;top:133.00px;width:11.50px;height:10.60px;background:#3d3d3d;"></div>
<div style="position:absolute;left:33.50px;top:134.00px;width:1.00px;height:9.00px;background:#2e2e2e;"></div>
<div style="position:absolute;left:60.50px;top:134.00px;width:1.00px;height:9.00px;background:#2e2e2e;"></div>
<div style="position:absolute;left:88.50px;top:134.00px;width:1.00px;height:9.00px;background:#2e2e2e;"></div>
<div style="position:absolute;left:116.50px;top:134.00px;width:1.00px;height:9.00px;background:#2e2e2e;"></div>
<div style="position:absolute;left:144.50px;top:134.00px;width:1.00px;height:9.00px;background:#2e2e2e;"></div>
<div style="position:absolute;left:172.00px;top:134.00px;width:1.00px;height:9.00px;background:#2e2e2e;"></div>
<div style="position:absolute;left:204.50px;top:134.00px;width:1.00px;height:9.00px;background:#2e2e2e;"></div>
<div style="position:absolute;left:232.50px;top:134.00px;width:1.00px;height:9.00px;background:#2e2e2e;"></div>
<div style="position:absolute;left:260.00px;top:134.00px;width:1.00px;height:9.00px;background:#2e2e2e;"></div>
<div style="position:absolute;left:318.00px;top:134.00px;width:1.00px;height:9.00px;background:#2e2e2e;"></div>
<div style="position:absolute;left:375.50px;top:134.00px;width:1.00px;height:9.00px;background:#2e2e2e;"></div>
<div style="position:absolute;left:432.80px;top:134.00px;width:1.00px;height:9.00px;background:#2e2e2e;"></div>
<div style="position:absolute;left:490.40px;top:134.00px;width:1.00px;height:9.00px;background:#2e2e2e;"></div>
<div style="position:absolute;left:547.90px;top:134.00px;width:1.00px;height:9.00px;background:#2e2e2e;"></div>
<div style="position:absolute;left:562.70px;top:134.00px;width:1.00px;height:9.00px;background:#2e2e2e;"></div>
<div style="position:absolute;left:628.31px;top:134.00px;width:1.00px;height:9.00px;background:#2e2e2e;"></div>
<div style="position:absolute;left:693.92px;top:134.00px;width:1.00px;height:9.00px;background:#2e2e2e;"></div>
<div style="position:absolute;left:759.53px;top:134.00px;width:1.00px;height:9.00px;background:#2e2e2e;"></div>
<div style="position:absolute;left:825.14px;top:134.00px;width:1.00px;height:9.00px;background:#2e2e2e;"></div>
<div style="position:absolute;left:890.75px;top:134.00px;width:1.00px;height:9.00px;background:#2e2e2e;"></div>
<div style="position:absolute;left:956.36px;top:134.00px;width:1.00px;height:9.00px;background:#2e2e2e;"></div>
<div style="position:absolute;left:1021.97px;top:134.00px;width:1.00px;height:9.00px;background:#2e2e2e;"></div>
<div style="position:absolute;left:1087.58px;top:134.00px;width:1.00px;height:9.00px;background:#2e2e2e;"></div>
<div style="position:absolute;left:1153.19px;top:134.00px;width:1.00px;height:9.00px;background:#2e2e2e;"></div>
<div style="position:absolute;left:1218.80px;top:134.00px;width:1.00px;height:9.00px;background:#2e2e2e;"></div>
<div style="position:absolute;left:1284.41px;top:134.00px;width:1.00px;height:9.00px;background:#2e2e2e;"></div>
<div style="position:absolute;left:1350.02px;top:134.00px;width:1.00px;height:9.00px;background:#2e2e2e;"></div>
<div style="position:absolute;left:22.5px;top:133px;width:1347.5px;height:11px;overflow:hidden;">
<div class="t" style="left:3.02px;top:3.06px;font-size:8.2px;line-height:8.2px;color:#d6d6d6;">A</div>
<div class="t" style="left:22.27px;top:3.06px;font-size:8.2px;line-height:8.2px;color:#d6d6d6;">B</div>
<div class="t" style="left:49.54px;top:3.06px;font-size:8.2px;line-height:8.2px;color:#d6d6d6;">C</div>
<div class="t" style="left:77.54px;top:3.06px;font-size:8.2px;line-height:8.2px;color:#d6d6d6;">D</div>
<div class="t" style="left:105.77px;top:3.06px;font-size:8.2px;line-height:8.2px;color:#d6d6d6;">E</div>
<div class="t" style="left:133.75px;top:3.06px;font-size:8.2px;line-height:8.2px;color:#d6d6d6;">F</div>
<div class="t" style="left:163.06px;top:3.06px;font-size:8.2px;line-height:8.2px;color:#d6d6d6;">G</div>
<div class="t" style="left:193.54px;top:3.06px;font-size:8.2px;line-height:8.2px;color:#d6d6d6;">H</div>
<div class="t" style="left:223.11px;top:3.06px;font-size:8.2px;line-height:8.2px;color:#d6d6d6;">I</div>
<div class="t" style="left:264.95px;top:3.06px;font-size:8.2px;line-height:8.2px;color:#d6d6d6;">J</div>
<div class="t" style="left:322.02px;top:3.06px;font-size:8.2px;line-height:8.2px;color:#d6d6d6;">K</div>
<div class="t" style="left:379.87px;top:3.06px;font-size:8.2px;line-height:8.2px;color:#d6d6d6;">L</div>
<div class="t" style="left:436.18px;top:3.06px;font-size:8.2px;line-height:8.2px;color:#d6d6d6;">M</div>
<div class="t" style="left:494.19px;top:3.06px;font-size:8.2px;line-height:8.2px;color:#d6d6d6;">N</div>
<div class="t" style="left:530.11px;top:3.06px;font-size:8.2px;line-height:8.2px;color:#d6d6d6;">O</div>
<div class="t" style="left:570.77px;top:3.06px;font-size:8.2px;line-height:8.2px;color:#d6d6d6;">P</div>
<div class="t" style="left:635.93px;top:3.06px;font-size:8.2px;line-height:8.2px;color:#d6d6d6;">Q</div>
<div class="t" style="left:701.76px;top:3.06px;font-size:8.2px;line-height:8.2px;color:#d6d6d6;">R</div>
<div class="t" style="left:767.60px;top:3.06px;font-size:8.2px;line-height:8.2px;color:#d6d6d6;">S</div>
<div class="t" style="left:833.44px;top:3.06px;font-size:8.2px;line-height:8.2px;color:#d6d6d6;">T</div>
<div class="t" style="left:898.59px;top:3.06px;font-size:8.2px;line-height:8.2px;color:#d6d6d6;">U</div>
<div class="t" style="left:964.43px;top:3.06px;font-size:8.2px;line-height:8.2px;color:#d6d6d6;">V</div>
<div class="t" style="left:1028.91px;top:3.06px;font-size:8.2px;line-height:8.2px;color:#d6d6d6;">W</div>
<div class="t" style="left:1095.65px;top:3.06px;font-size:8.2px;line-height:8.2px;color:#d6d6d6;">X</div>
<div class="t" style="left:1161.26px;top:3.06px;font-size:8.2px;line-height:8.2px;color:#d6d6d6;">Y</div>
<div class="t" style="left:1227.10px;top:3.06px;font-size:8.2px;line-height:8.2px;color:#d6d6d6;">Z</div>
<div class="t" style="left:1289.75px;top:3.06px;font-size:8.2px;line-height:8.2px;color:#d6d6d6;">AA</div>
<div class="t" style="left:1328.10px;top:3.06px;font-size:8.2px;line-height:8.2px;color:#d6d6d6;">ABAC</div>
</div>
<div style="position:absolute;left:22.50px;top:142.80px;width:11.50px;height:1.00px;background:#2e9e52;"></div>
<svg style="left:14px;top:135.5px" width="8" height="7" viewBox="0 0 8 7"><path d="M7 0.5 V6.5 H0.8 Z" fill="#6a6a6a"/></svg>
<div style="position:absolute;left:5.00px;top:143.60px;width:17.50px;height:656.40px;background:#101010;"></div>
<div style="position:absolute;left:5.00px;top:143.90px;width:17.20px;height:17.80px;background:#5c5c5c;border:1px solid #777;"></div>
<div style="position:absolute;left:22.20px;top:143.60px;width:0.90px;height:18.40px;background:#2e9e52;"></div>
<div style="position:absolute;left:5px;top:143.6px;width:17.5px;height:656.4px;overflow:hidden;">
<div style="position:absolute;left:0;top:17.90px;width:17.5px;height:1px;background:#2a2a2a;"></div>
<div class="t" style="left:6.18px;top:9.74px;font-size:8.7px;line-height:8.7px;color:#e4e4e4;">1</div>
<div style="position:absolute;left:0;top:33.60px;width:17.5px;height:1px;background:#2a2a2a;"></div>
<div class="t" style="left:6.18px;top:25.44px;font-size:8.7px;line-height:8.7px;color:#e4e4e4;">2</div>
<div style="position:absolute;left:0;top:49.60px;width:17.5px;height:1px;background:#2a2a2a;"></div>
<div class="t" style="left:6.18px;top:41.44px;font-size:8.7px;line-height:8.7px;color:#e4e4e4;">3</div>
<div style="position:absolute;left:0;top:60.40px;width:17.5px;height:1px;background:#2a2a2a;"></div>
<div class="t" style="left:6.18px;top:52.24px;font-size:8.7px;line-height:8.7px;color:#e4e4e4;">4</div>
<div style="position:absolute;left:0;top:78.20px;width:17.5px;height:1px;background:#2a2a2a;"></div>
<div class="t" style="left:6.18px;top:70.04px;font-size:8.7px;line-height:8.7px;color:#e4e4e4;">5</div>
<div style="position:absolute;left:0;top:90.70px;width:17.5px;height:1px;background:#2a2a2a;"></div>
<div class="t" style="left:6.18px;top:82.54px;font-size:8.7px;line-height:8.7px;color:#e4e4e4;">7</div>
<div style="position:absolute;left:0;top:101.30px;width:17.5px;height:1px;background:#2a2a2a;"></div>
<div class="t" style="left:6.18px;top:93.14px;font-size:8.7px;line-height:8.7px;color:#e4e4e4;">8</div>
<div style="position:absolute;left:0;top:112.60px;width:17.5px;height:1px;background:#2a2a2a;"></div>
<div class="t" style="left:6.18px;top:104.44px;font-size:8.7px;line-height:8.7px;color:#e4e4e4;">9</div>
<div style="position:absolute;left:0;top:123.80px;width:17.5px;height:1px;background:#2a2a2a;"></div>
<div class="t" style="left:3.76px;top:115.64px;font-size:8.7px;line-height:8.7px;color:#e4e4e4;">10</div>
<div style="position:absolute;left:0;top:135.10px;width:17.5px;height:1px;background:#2a2a2a;"></div>
<div class="t" style="left:4.08px;top:126.94px;font-size:8.7px;line-height:8.7px;color:#e4e4e4;">11</div>
<div style="position:absolute;left:0;top:147.50px;width:17.5px;height:1px;background:#2a2a2a;"></div>
<div class="t" style="left:3.76px;top:139.34px;font-size:8.7px;line-height:8.7px;color:#e4e4e4;">12</div>
<div style="position:absolute;left:0;top:158.20px;width:17.5px;height:1px;background:#2a2a2a;"></div>
<div class="t" style="left:3.76px;top:150.04px;font-size:8.7px;line-height:8.7px;color:#e4e4e4;">13</div>
<div style="position:absolute;left:0;top:169.40px;width:17.5px;height:1px;background:#2a2a2a;"></div>
<div class="t" style="left:3.76px;top:161.24px;font-size:8.7px;line-height:8.7px;color:#e4e4e4;">14</div>
<div style="position:absolute;left:0;top:180.50px;width:17.5px;height:1px;background:#2a2a2a;"></div>
<div class="t" style="left:3.76px;top:172.34px;font-size:8.7px;line-height:8.7px;color:#e4e4e4;">15</div>
<div style="position:absolute;left:0;top:193.10px;width:17.5px;height:1px;background:#2a2a2a;"></div>
<div class="t" style="left:3.76px;top:184.94px;font-size:8.7px;line-height:8.7px;color:#e4e4e4;">16</div>
<div style="position:absolute;left:0;top:203.70px;width:17.5px;height:1px;background:#2a2a2a;"></div>
<div class="t" style="left:3.76px;top:195.54px;font-size:8.7px;line-height:8.7px;color:#e4e4e4;">17</div>
<div style="position:absolute;left:0;top:215.00px;width:17.5px;height:1px;background:#2a2a2a;"></div>
<div class="t" style="left:3.76px;top:206.84px;font-size:8.7px;line-height:8.7px;color:#e4e4e4;">18</div>
<div style="position:absolute;left:0;top:226.30px;width:17.5px;height:1px;background:#2a2a2a;"></div>
<div class="t" style="left:3.76px;top:218.14px;font-size:8.7px;line-height:8.7px;color:#e4e4e4;">19</div>
<div style="position:absolute;left:0;top:239.30px;width:17.5px;height:1px;background:#2a2a2a;"></div>
<div class="t" style="left:3.76px;top:231.14px;font-size:8.7px;line-height:8.7px;color:#e4e4e4;">21</div>
<div style="position:absolute;left:0;top:250.50px;width:17.5px;height:1px;background:#2a2a2a;"></div>
<div class="t" style="left:3.76px;top:242.34px;font-size:8.7px;line-height:8.7px;color:#e4e4e4;">22</div>
<div style="position:absolute;left:0;top:265.40px;width:17.5px;height:1px;background:#2a2a2a;"></div>
<div class="t" style="left:3.76px;top:257.24px;font-size:8.7px;line-height:8.7px;color:#e4e4e4;">24</div>
<div style="position:absolute;left:0;top:276.30px;width:17.5px;height:1px;background:#2a2a2a;"></div>
<div class="t" style="left:3.76px;top:268.14px;font-size:8.7px;line-height:8.7px;color:#e4e4e4;">25</div>
<div style="position:absolute;left:0;top:286.90px;width:17.5px;height:1px;background:#2a2a2a;"></div>
<div class="t" style="left:3.76px;top:278.74px;font-size:8.7px;line-height:8.7px;color:#e4e4e4;">26</div>
<div style="position:absolute;left:0;top:298.20px;width:17.5px;height:1px;background:#2a2a2a;"></div>
<div class="t" style="left:3.76px;top:290.04px;font-size:8.7px;line-height:8.7px;color:#e4e4e4;">27</div>
<div style="position:absolute;left:0;top:309.50px;width:17.5px;height:1px;background:#2a2a2a;"></div>
<div class="t" style="left:3.76px;top:301.34px;font-size:8.7px;line-height:8.7px;color:#e4e4e4;">28</div>
<div style="position:absolute;left:0;top:320.10px;width:17.5px;height:1px;background:#2a2a2a;"></div>
<div class="t" style="left:3.76px;top:311.94px;font-size:8.7px;line-height:8.7px;color:#e4e4e4;">29</div>
<div style="position:absolute;left:0;top:330.80px;width:17.5px;height:1px;background:#2a2a2a;"></div>
<div class="t" style="left:3.76px;top:322.64px;font-size:8.7px;line-height:8.7px;color:#e4e4e4;">30</div>
<div style="position:absolute;left:0;top:343.90px;width:17.5px;height:1px;background:#2a2a2a;"></div>
<div class="t" style="left:3.76px;top:335.74px;font-size:8.7px;line-height:8.7px;color:#e4e4e4;">31</div>
<div style="position:absolute;left:0;top:355.20px;width:17.5px;height:1px;background:#2a2a2a;"></div>
<div class="t" style="left:3.76px;top:347.04px;font-size:8.7px;line-height:8.7px;color:#e4e4e4;">32</div>
<div style="position:absolute;left:0;top:366.30px;width:17.5px;height:1px;background:#2a2a2a;"></div>
<div class="t" style="left:3.76px;top:358.14px;font-size:8.7px;line-height:8.7px;color:#e4e4e4;">33</div>
<div style="position:absolute;left:0;top:384.10px;width:17.5px;height:1px;background:#2a2a2a;"></div>
<div class="t" style="left:3.76px;top:375.94px;font-size:8.7px;line-height:8.7px;color:#e4e4e4;">34</div>
<div style="position:absolute;left:0;top:395.02px;width:17.5px;height:1px;background:#2a2a2a;"></div>
<div class="t" style="left:3.76px;top:386.86px;font-size:8.7px;line-height:8.7px;color:#e4e4e4;">35</div>
<div style="position:absolute;left:0;top:405.95px;width:17.5px;height:1px;background:#2a2a2a;"></div>
<div class="t" style="left:3.76px;top:397.79px;font-size:8.7px;line-height:8.7px;color:#e4e4e4;">36</div>
<div style="position:absolute;left:0;top:416.87px;width:17.5px;height:1px;background:#2a2a2a;"></div>
<div class="t" style="left:3.76px;top:408.71px;font-size:8.7px;line-height:8.7px;color:#e4e4e4;">37</div>
<div style="position:absolute;left:0;top:427.80px;width:17.5px;height:1px;background:#2a2a2a;"></div>
<div class="t" style="left:3.76px;top:419.64px;font-size:8.7px;line-height:8.7px;color:#e4e4e4;">38</div>
<div style="position:absolute;left:0;top:438.72px;width:17.5px;height:1px;background:#2a2a2a;"></div>
<div class="t" style="left:3.76px;top:430.56px;font-size:8.7px;line-height:8.7px;color:#e4e4e4;">39</div>
<div style="position:absolute;left:0;top:449.65px;width:17.5px;height:1px;background:#2a2a2a;"></div>
<div class="t" style="left:3.76px;top:441.49px;font-size:8.7px;line-height:8.7px;color:#e4e4e4;">40</div>
<div style="position:absolute;left:0;top:460.57px;width:17.5px;height:1px;background:#2a2a2a;"></div>
<div class="t" style="left:3.76px;top:452.41px;font-size:8.7px;line-height:8.7px;color:#e4e4e4;">41</div>
<div style="position:absolute;left:0;top:471.50px;width:17.5px;height:1px;background:#2a2a2a;"></div>
<div class="t" style="left:3.76px;top:463.34px;font-size:8.7px;line-height:8.7px;color:#e4e4e4;">42</div>
<div style="position:absolute;left:0;top:482.42px;width:17.5px;height:1px;background:#2a2a2a;"></div>
<div class="t" style="left:3.76px;top:474.26px;font-size:8.7px;line-height:8.7px;color:#e4e4e4;">43</div>
<div style="position:absolute;left:0;top:493.35px;width:17.5px;height:1px;background:#2a2a2a;"></div>
<div class="t" style="left:3.76px;top:485.19px;font-size:8.7px;line-height:8.7px;color:#e4e4e4;">44</div>
<div style="position:absolute;left:0;top:504.27px;width:17.5px;height:1px;background:#2a2a2a;"></div>
<div class="t" style="left:3.76px;top:496.11px;font-size:8.7px;line-height:8.7px;color:#e4e4e4;">45</div>
<div style="position:absolute;left:0;top:515.20px;width:17.5px;height:1px;background:#2a2a2a;"></div>
<div class="t" style="left:3.76px;top:507.04px;font-size:8.7px;line-height:8.7px;color:#e4e4e4;">46</div>
<div style="position:absolute;left:0;top:526.12px;width:17.5px;height:1px;background:#2a2a2a;"></div>
<div class="t" style="left:3.76px;top:517.96px;font-size:8.7px;line-height:8.7px;color:#e4e4e4;">47</div>
<div style="position:absolute;left:0;top:537.05px;width:17.5px;height:1px;background:#2a2a2a;"></div>
<div class="t" style="left:3.76px;top:528.89px;font-size:8.7px;line-height:8.7px;color:#e4e4e4;">48</div>
<div style="position:absolute;left:0;top:547.97px;width:17.5px;height:1px;background:#2a2a2a;"></div>
<div class="t" style="left:3.76px;top:539.81px;font-size:8.7px;line-height:8.7px;color:#e4e4e4;">49</div>
<div style="position:absolute;left:0;top:558.90px;width:17.5px;height:1px;background:#2a2a2a;"></div>
<div class="t" style="left:3.76px;top:550.74px;font-size:8.7px;line-height:8.7px;color:#e4e4e4;">50</div>
<div style="position:absolute;left:0;top:569.82px;width:17.5px;height:1px;background:#2a2a2a;"></div>
<div class="t" style="left:3.76px;top:561.66px;font-size:8.7px;line-height:8.7px;color:#e4e4e4;">51</div>
<div style="position:absolute;left:0;top:580.75px;width:17.5px;height:1px;background:#2a2a2a;"></div>
<div class="t" style="left:3.76px;top:572.59px;font-size:8.7px;line-height:8.7px;color:#e4e4e4;">52</div>
<div style="position:absolute;left:0;top:591.67px;width:17.5px;height:1px;background:#2a2a2a;"></div>
<div class="t" style="left:3.76px;top:583.51px;font-size:8.7px;line-height:8.7px;color:#e4e4e4;">53</div>
<div style="position:absolute;left:0;top:602.60px;width:17.5px;height:1px;background:#2a2a2a;"></div>
<div class="t" style="left:3.76px;top:594.44px;font-size:8.7px;line-height:8.7px;color:#e4e4e4;">54</div>
<div style="position:absolute;left:0;top:621.70px;width:17.5px;height:1px;background:#2a2a2a;"></div>
<div class="t" style="left:3.76px;top:613.54px;font-size:8.7px;line-height:8.7px;color:#e4e4e4;">55</div>
<div style="position:absolute;left:0;top:634.30px;width:17.5px;height:1px;background:#2a2a2a;"></div>
<div class="t" style="left:3.76px;top:626.14px;font-size:8.7px;line-height:8.7px;color:#e4e4e4;">57</div>
<div style="position:absolute;left:0;top:646.90px;width:17.5px;height:1px;background:#2a2a2a;"></div>
<div class="t" style="left:3.76px;top:638.74px;font-size:8.7px;line-height:8.7px;color:#e4e4e4;">59</div>
<div style="position:absolute;left:0;top:657.50px;width:17.5px;height:1px;background:#2a2a2a;"></div>
<div class="t" style="left:3.76px;top:649.34px;font-size:8.7px;line-height:8.7px;color:#e4e4e4;">60</div>
</div>
<div style="position:absolute;left:5.00px;top:370.60px;width:17.50px;height:0.80px;background:#2a2a2a;"></div>
<div style="position:absolute;left:5.00px;top:394.80px;width:17.50px;height:0.80px;background:#2a2a2a;"></div>
<div style="position:absolute;left:23.00px;top:143.60px;width:1347.00px;height:656.20px;background:#ffffff;"></div>
<div style="position:absolute;left:23.00px;top:204.00px;width:1347.00px;height:1.00px;background:#c8c8c8;"></div>
<div style="position:absolute;left:1370.00px;top:133.00px;width:14.50px;height:667.00px;background:#1a1a1a;"></div>
<svg style="left:1373px;top:136.5px" width="9" height="6" viewBox="0 0 9 6"><path d="M4.5 0.5 L8.5 5.5 H0.5 Z" fill="#9a9a9a"/></svg>
<svg style="left:1373px;top:791px" width="9" height="6" viewBox="0 0 9 6"><path d="M4.5 5.5 L8.5 0.5 H0.5 Z" fill="#9a9a9a"/></svg>
<div style="position:absolute;left:1374.50px;top:145.80px;width:6.00px;height:252.50px;background:#9e9e9e;border-radius:3px;"></div>
<div class="t" style="left:37.10px;top:146.07px;font-size:14.80px;line-height:14.80px;color:#111;font-weight:bold;transform:scaleX(1.0823);transform-origin:0 0;">Financial Statements Summary</div>
<div class="t" style="left:37.10px;top:163.53px;font-size:13.20px;line-height:13.20px;color:#111;font-weight:bold;transform:scaleX(1.0396);transform-origin:0 0;">ABC Company Inc.</div>
<div class="t" style="left:35.70px;top:179.27px;font-size:9.60px;line-height:9.60px;color:#1769e0;font-weight:bold;transform:scaleX(0.9260);transform-origin:0 0;">Go to Table of Contents</div>
<div style="position:absolute;left:35.70px;top:188.30px;width:100.10px;height:0.90px;background:#1769e0;"></div>
<div class="t" style="left:710.70px;top:180.09px;font-size:11.00px;line-height:11.00px;color:#1a1a1a;font-weight:bold;transform:scaleX(0.9493);transform-origin:0 0;">Select reporting year</div>
<div style="position:absolute;left:825.40px;top:177.30px;width:131.80px;height:15.90px;background:#fff06a;"></div>
<div class="t" style="left:879.60px;top:180.09px;font-size:11.00px;line-height:11.00px;color:#1a1a1a;font-weight:bold;transform:scaleX(0.9765);transform-origin:0 0;">2026</div>
<div style="position:absolute;left:33.70px;top:204.90px;width:514.70px;height:16.70px;background:#4b4ed3;"></div>
<div style="position:absolute;left:563.20px;top:204.90px;width:787.30px;height:16.70px;background:#4b4ed3;"></div>
<div class="t" style="left:104.80px;top:206.52px;font-size:13.80px;line-height:13.80px;color:#fff;font-weight:bold;transform:scaleX(1.0711);transform-origin:0 0;">Income Statement ($&#x27;000) - 5 years to December 2030</div>
<div class="t" style="left:842.00px;top:206.52px;font-size:13.80px;line-height:13.80px;color:#fff;font-weight:bold;transform:scaleX(1.1012);transform-origin:0 0;">Income Statement ($&#x27;000) - 2026</div>
<div style="position:absolute;left:33.70px;top:224.60px;width:514.70px;height:9.70px;background:#6c6de6;"></div>
<div style="position:absolute;left:563.20px;top:224.60px;width:787.30px;height:9.70px;background:#6c6de6;"></div>
<div class="t" style="left:39.70px;top:224.87px;font-size:9.60px;line-height:9.60px;color:#fff;font-weight:bold;transform:scaleX(0.9245);transform-origin:0 0;">Year Ending</div>
<div style="position:absolute;left:260.00px;top:224.60px;width:1.00px;height:9.70px;background:#ffffff;"></div>
<div class="t" style="left:279.63px;top:225.47px;font-size:8.90px;line-height:8.90px;color:#fff;font-weight:bold;transform:scaleX(0.9972);transform-origin:0 0;">2026</div>
<div style="position:absolute;left:318.00px;top:224.60px;width:1.00px;height:9.70px;background:#ffffff;"></div>
<div class="t" style="left:337.38px;top:225.47px;font-size:8.90px;line-height:8.90px;color:#fff;font-weight:bold;transform:scaleX(0.9972);transform-origin:0 0;">2027</div>
<div style="position:absolute;left:375.50px;top:224.60px;width:1.00px;height:9.70px;background:#ffffff;"></div>
<div class="t" style="left:394.78px;top:225.47px;font-size:8.90px;line-height:8.90px;color:#fff;font-weight:bold;transform:scaleX(0.9972);transform-origin:0 0;">2028</div>
<div style="position:absolute;left:432.80px;top:224.60px;width:1.00px;height:9.70px;background:#ffffff;"></div>
<div class="t" style="left:452.23px;top:225.47px;font-size:8.90px;line-height:8.90px;color:#fff;font-weight:bold;transform:scaleX(0.9972);transform-origin:0 0;">2029</div>
<div style="position:absolute;left:490.40px;top:224.60px;width:1.00px;height:9.70px;background:#ffffff;"></div>
<div class="t" style="left:509.78px;top:225.47px;font-size:8.90px;line-height:8.90px;color:#fff;font-weight:bold;transform:scaleX(0.9972);transform-origin:0 0;">2030</div>
<div class="t" style="left:588.40px;top:225.47px;font-size:8.90px;line-height:8.90px;color:#fff;font-weight:bold;transform:scaleX(0.9904);transform-origin:0 0;">Jan</div>
<div style="position:absolute;left:628.31px;top:224.60px;width:1.00px;height:9.70px;background:#ffffff;"></div>
<div class="t" style="left:653.76px;top:225.47px;font-size:8.90px;line-height:8.90px;color:#fff;font-weight:bold;transform:scaleX(0.9919);transform-origin:0 0;">Feb</div>
<div style="position:absolute;left:693.92px;top:224.60px;width:1.00px;height:9.70px;background:#ffffff;"></div>
<div class="t" style="left:719.37px;top:225.47px;font-size:8.90px;line-height:8.90px;color:#fff;font-weight:bold;transform:scaleX(0.9921);transform-origin:0 0;">Mar</div>
<div style="position:absolute;left:759.53px;top:224.60px;width:1.00px;height:9.70px;background:#ffffff;"></div>
<div class="t" style="left:785.24px;top:225.47px;font-size:8.90px;line-height:8.90px;color:#fff;font-weight:bold;transform:scaleX(0.9927);transform-origin:0 0;">Apr</div>
<div style="position:absolute;left:825.14px;top:224.60px;width:1.00px;height:9.70px;background:#ffffff;"></div>
<div class="t" style="left:849.81px;top:225.47px;font-size:8.90px;line-height:8.90px;color:#fff;font-weight:bold;transform:scaleX(0.9976);transform-origin:0 0;">May</div>
<div style="position:absolute;left:890.75px;top:224.60px;width:1.00px;height:9.70px;background:#ffffff;"></div>
<div class="t" style="left:916.20px;top:225.47px;font-size:8.90px;line-height:8.90px;color:#fff;font-weight:bold;transform:scaleX(0.9919);transform-origin:0 0;">Jun</div>
<div style="position:absolute;left:956.36px;top:224.60px;width:1.00px;height:9.70px;background:#ffffff;"></div>
<div class="t" style="left:983.36px;top:225.47px;font-size:8.90px;line-height:8.90px;color:#fff;font-weight:bold;transform:scaleX(0.9813);transform-origin:0 0;">Jul</div>
<div style="position:absolute;left:1021.97px;top:224.60px;width:1.00px;height:9.70px;background:#ffffff;"></div>
<div class="t" style="left:1046.65px;top:225.47px;font-size:8.90px;line-height:8.90px;color:#fff;font-weight:bold;transform:scaleX(0.9968);transform-origin:0 0;">Aug</div>
<div style="position:absolute;left:1087.58px;top:224.60px;width:1.00px;height:9.70px;background:#ffffff;"></div>
<div class="t" style="left:1112.77px;top:225.47px;font-size:8.90px;line-height:8.90px;color:#fff;font-weight:bold;transform:scaleX(0.9941);transform-origin:0 0;">Sep</div>
<div style="position:absolute;left:1153.19px;top:224.60px;width:1.00px;height:9.70px;background:#ffffff;"></div>
<div class="t" style="left:1179.15px;top:225.47px;font-size:8.90px;line-height:8.90px;color:#fff;font-weight:bold;transform:scaleX(0.9909);transform-origin:0 0;">Oct</div>
<div style="position:absolute;left:1218.80px;top:224.60px;width:1.00px;height:9.70px;background:#ffffff;"></div>
<div class="t" style="left:1243.73px;top:225.47px;font-size:8.90px;line-height:8.90px;color:#fff;font-weight:bold;transform:scaleX(0.9956);transform-origin:0 0;">Nov</div>
<div style="position:absolute;left:1284.41px;top:224.60px;width:1.00px;height:9.70px;background:#ffffff;"></div>
<div class="t" style="left:1309.60px;top:225.47px;font-size:8.90px;line-height:8.90px;color:#fff;font-weight:bold;transform:scaleX(0.9943);transform-origin:0 0;">Dec</div>
<div class="t" style="left:35.60px;top:236.47px;font-size:8.30px;line-height:8.30px;color:#1a1a1a;transform:scaleX(0.9506);transform-origin:0 0;-webkit-text-stroke:0.2px currentColor;">Revenue</div>
<div class="t" style="left:299.18px;top:236.97px;font-size:8.30px;line-height:8.30px;color:#1a1a1a;letter-spacing:0.037px;-webkit-text-stroke:0.2px currentColor;">638</div>
<div class="t" style="left:349.38px;top:236.97px;font-size:8.30px;line-height:8.30px;color:#1a1a1a;letter-spacing:0.113px;-webkit-text-stroke:0.2px currentColor;">2,773</div>
<div class="t" style="left:406.68px;top:236.97px;font-size:8.30px;line-height:8.30px;color:#1a1a1a;letter-spacing:0.113px;-webkit-text-stroke:0.2px currentColor;">9,019</div>
<div class="t" style="left:459.63px;top:236.97px;font-size:8.30px;line-height:8.30px;color:#1a1a1a;letter-spacing:0.096px;-webkit-text-stroke:0.2px currentColor;">23,128</div>
<div class="t" style="left:517.13px;top:236.97px;font-size:8.30px;line-height:8.30px;color:#1a1a1a;letter-spacing:0.096px;-webkit-text-stroke:0.2px currentColor;">50,571</div>
<div class="t" style="left:614.13px;top:236.97px;font-size:8.30px;line-height:8.30px;color:#1a1a1a;letter-spacing:0.050px;-webkit-text-stroke:0.2px currentColor;">26</div>
<div class="t" style="left:679.74px;top:236.97px;font-size:8.30px;line-height:8.30px;color:#1a1a1a;letter-spacing:0.050px;-webkit-text-stroke:0.2px currentColor;">31</div>
<div class="t" style="left:745.35px;top:236.97px;font-size:8.30px;line-height:8.30px;color:#1a1a1a;letter-spacing:0.050px;-webkit-text-stroke:0.2px currentColor;">36</div>
<div class="t" style="left:810.96px;top:236.97px;font-size:8.30px;line-height:8.30px;color:#1a1a1a;letter-spacing:0.050px;-webkit-text-stroke:0.2px currentColor;">41</div>
<div class="t" style="left:876.57px;top:236.97px;font-size:8.30px;line-height:8.30px;color:#1a1a1a;letter-spacing:0.050px;-webkit-text-stroke:0.2px currentColor;">46</div>
<div class="t" style="left:942.18px;top:236.97px;font-size:8.30px;line-height:8.30px;color:#1a1a1a;letter-spacing:0.050px;-webkit-text-stroke:0.2px currentColor;">51</div>
<div class="t" style="left:1007.79px;top:236.97px;font-size:8.30px;line-height:8.30px;color:#1a1a1a;letter-spacing:0.050px;-webkit-text-stroke:0.2px currentColor;">56</div>
<div class="t" style="left:1073.40px;top:236.97px;font-size:8.30px;line-height:8.30px;color:#1a1a1a;letter-spacing:0.050px;-webkit-text-stroke:0.2px currentColor;">61</div>
<div class="t" style="left:1139.01px;top:236.97px;font-size:8.30px;line-height:8.30px;color:#1a1a1a;letter-spacing:0.050px;-webkit-text-stroke:0.2px currentColor;">66</div>
<div class="t" style="left:1204.62px;top:236.97px;font-size:8.30px;line-height:8.30px;color:#1a1a1a;letter-spacing:0.050px;-webkit-text-stroke:0.2px currentColor;">71</div>
<div class="t" style="left:1270.23px;top:236.97px;font-size:8.30px;line-height:8.30px;color:#1a1a1a;letter-spacing:0.050px;-webkit-text-stroke:0.2px currentColor;">76</div>
<div class="t" style="left:1335.84px;top:236.97px;font-size:8.30px;line-height:8.30px;color:#1a1a1a;letter-spacing:0.050px;-webkit-text-stroke:0.2px currentColor;">81</div>
<div class="t" style="left:44.30px;top:247.40px;font-size:8.50px;line-height:8.50px;color:#1a1a1a;font-style:italic;transform:scaleX(1.0371);transform-origin:0 0;-webkit-text-stroke:0.05px currentColor;">Growth %</div>
<div class="t" style="left:348.31px;top:247.77px;font-size:8.30px;line-height:8.30px;color:#1a1a1a;font-style:italic;letter-spacing:0.353px;-webkit-text-stroke:0.05px currentColor;">335%</div>
<div class="t" style="left:405.61px;top:247.77px;font-size:8.30px;line-height:8.30px;color:#1a1a1a;font-style:italic;letter-spacing:0.353px;-webkit-text-stroke:0.05px currentColor;">225%</div>
<div class="t" style="left:463.21px;top:247.77px;font-size:8.30px;line-height:8.30px;color:#1a1a1a;font-style:italic;letter-spacing:0.353px;-webkit-text-stroke:0.05px currentColor;">156%</div>
<div class="t" style="left:520.71px;top:247.77px;font-size:8.30px;line-height:8.30px;color:#1a1a1a;font-style:italic;letter-spacing:0.558px;-webkit-text-stroke:0.05px currentColor;">119%</div>
<div class="t" style="left:619.85px;top:247.77px;font-size:8.30px;line-height:8.30px;color:#1a1a1a;font-style:italic;-webkit-text-stroke:0.05px currentColor;">-</div>
<div class="t" style="left:671.37px;top:247.77px;font-size:8.30px;line-height:8.30px;color:#1a1a1a;font-style:italic;letter-spacing:0.517px;-webkit-text-stroke:0.05px currentColor;">19%</div>
<div class="t" style="left:736.98px;top:247.77px;font-size:8.30px;line-height:8.30px;color:#1a1a1a;font-style:italic;letter-spacing:0.517px;-webkit-text-stroke:0.05px currentColor;">16%</div>
<div class="t" style="left:802.59px;top:247.77px;font-size:8.30px;line-height:8.30px;color:#1a1a1a;font-style:italic;letter-spacing:0.517px;-webkit-text-stroke:0.05px currentColor;">14%</div>
<div class="t" style="left:868.20px;top:247.77px;font-size:8.30px;line-height:8.30px;color:#1a1a1a;font-style:italic;letter-spacing:0.517px;-webkit-text-stroke:0.05px currentColor;">12%</div>
<div class="t" style="left:933.81px;top:247.77px;font-size:8.30px;line-height:8.30px;color:#1a1a1a;font-style:italic;letter-spacing:0.825px;-webkit-text-stroke:0.05px currentColor;">11%</div>
<div class="t" style="left:999.42px;top:247.77px;font-size:8.30px;line-height:8.30px;color:#1a1a1a;font-style:italic;letter-spacing:0.517px;-webkit-text-stroke:0.05px currentColor;">10%</div>
<div class="t" style="left:1069.67px;top:247.77px;font-size:8.30px;line-height:8.30px;color:#1a1a1a;font-style:italic;letter-spacing:1.009px;-webkit-text-stroke:0.05px currentColor;">9%</div>
<div class="t" style="left:1135.28px;top:247.77px;font-size:8.30px;line-height:8.30px;color:#1a1a1a;font-style:italic;letter-spacing:1.009px;-webkit-text-stroke:0.05px currentColor;">8%</div>
<div class="t" style="left:1200.89px;top:247.77px;font-size:8.30px;line-height:8.30px;color:#1a1a1a;font-style:italic;letter-spacing:1.009px;-webkit-text-stroke:0.05px currentColor;">8%</div>
<div class="t" style="left:1266.50px;top:247.77px;font-size:8.30px;line-height:8.30px;color:#1a1a1a;font-style:italic;letter-spacing:1.009px;-webkit-text-stroke:0.05px currentColor;">7%</div>
<div class="t" style="left:1332.11px;top:247.77px;font-size:8.30px;line-height:8.30px;color:#1a1a1a;font-style:italic;letter-spacing:1.009px;-webkit-text-stroke:0.05px currentColor;">7%</div>
<div class="t" style="left:35.60px;top:258.57px;font-size:8.30px;line-height:8.30px;color:#1a1a1a;transform:scaleX(0.9614);transform-origin:0 0;-webkit-text-stroke:0.2px currentColor;">COGS</div>
<div class="t" style="left:300.81px;top:259.07px;font-size:8.30px;line-height:8.30px;color:#1a1a1a;letter-spacing:0.344px;-webkit-text-stroke:0.2px currentColor;">(86)</div>
<div class="t" style="left:353.67px;top:259.07px;font-size:8.30px;line-height:8.30px;color:#1a1a1a;letter-spacing:0.264px;-webkit-text-stroke:0.2px currentColor;">(358)</div>
<div class="t" style="left:403.66px;top:259.07px;font-size:8.30px;line-height:8.30px;color:#1a1a1a;letter-spacing:0.239px;-webkit-text-stroke:0.2px currentColor;">(1,109)</div>
<div class="t" style="left:461.26px;top:259.07px;font-size:8.30px;line-height:8.30px;color:#1a1a1a;letter-spacing:0.239px;-webkit-text-stroke:0.2px currentColor;">(2,706)</div>
<div class="t" style="left:518.76px;top:259.07px;font-size:8.30px;line-height:8.30px;color:#1a1a1a;letter-spacing:0.239px;-webkit-text-stroke:0.2px currentColor;">(5,563)</div>
<div class="t" style="left:615.76px;top:259.07px;font-size:8.30px;line-height:8.30px;color:#1a1a1a;letter-spacing:0.504px;-webkit-text-stroke:0.2px currentColor;">(3)</div>
<div class="t" style="left:681.37px;top:259.07px;font-size:8.30px;line-height:8.30px;color:#1a1a1a;letter-spacing:0.504px;-webkit-text-stroke:0.2px currentColor;">(4)</div>
<div class="t" style="left:746.98px;top:259.07px;font-size:8.30px;line-height:8.30px;color:#1a1a1a;letter-spacing:0.504px;-webkit-text-stroke:0.2px currentColor;">(5)</div>
<div class="t" style="left:812.59px;top:259.07px;font-size:8.30px;line-height:8.30px;color:#1a1a1a;letter-spacing:0.504px;-webkit-text-stroke:0.2px currentColor;">(5)</div>
<div class="t" style="left:878.20px;top:259.07px;font-size:8.30px;line-height:8.30px;color:#1a1a1a;letter-spacing:0.504px;-webkit-text-stroke:0.2px currentColor;">(6)</div>
<div class="t" style="left:943.81px;top:259.07px;font-size:8.30px;line-height:8.30px;color:#1a1a1a;letter-spacing:0.504px;-webkit-text-stroke:0.2px currentColor;">(7)</div>
<div class="t" style="left:1009.42px;top:259.07px;font-size:8.30px;line-height:8.30px;color:#1a1a1a;letter-spacing:0.504px;-webkit-text-stroke:0.2px currentColor;">(8)</div>
<div class="t" style="left:1075.03px;top:259.07px;font-size:8.30px;line-height:8.30px;color:#1a1a1a;letter-spacing:0.504px;-webkit-text-stroke:0.2px currentColor;">(8)</div>
<div class="t" style="left:1140.64px;top:259.07px;font-size:8.30px;line-height:8.30px;color:#1a1a1a;letter-spacing:0.504px;-webkit-text-stroke:0.2px currentColor;">(9)</div>
<div class="t" style="left:1201.61px;top:259.07px;font-size:8.30px;line-height:8.30px;color:#1a1a1a;letter-spacing:0.344px;-webkit-text-stroke:0.2px currentColor;">(10)</div>
<div class="t" style="left:1267.22px;top:259.07px;font-size:8.30px;line-height:8.30px;color:#1a1a1a;letter-spacing:0.344px;-webkit-text-stroke:0.2px currentColor;">(10)</div>
<div class="t" style="left:1332.83px;top:259.07px;font-size:8.30px;line-height:8.30px;color:#1a1a1a;letter-spacing:0.549px;-webkit-text-stroke:0.2px currentColor;">(11)</div>
<div class="t" style="left:44.30px;top:269.10px;font-size:8.50px;line-height:8.50px;color:#1a1a1a;font-style:italic;transform:scaleX(1.0116);transform-origin:0 0;-webkit-text-stroke:0.05px currentColor;">% of Revenue</div>
<div class="t" style="left:292.44px;top:269.47px;font-size:8.30px;line-height:8.30px;color:#1a1a1a;font-style:italic;letter-spacing:0.504px;-webkit-text-stroke:0.05px currentColor;">(14%)</div>
<div class="t" style="left:349.94px;top:269.47px;font-size:8.30px;line-height:8.30px;color:#1a1a1a;font-style:italic;letter-spacing:0.504px;-webkit-text-stroke:0.05px currentColor;">(13%)</div>
<div class="t" style="left:407.24px;top:269.47px;font-size:8.30px;line-height:8.30px;color:#1a1a1a;font-style:italic;letter-spacing:0.504px;-webkit-text-stroke:0.05px currentColor;">(12%)</div>
<div class="t" style="left:464.84px;top:269.47px;font-size:8.30px;line-height:8.30px;color:#1a1a1a;font-style:italic;letter-spacing:0.504px;-webkit-text-stroke:0.05px currentColor;">(12%)</div>
<div class="t" style="left:522.34px;top:269.47px;font-size:8.30px;line-height:8.30px;color:#1a1a1a;font-style:italic;letter-spacing:0.658px;-webkit-text-stroke:0.05px currentColor;">(11%)</div>
<div class="t" style="left:602.75px;top:269.47px;font-size:8.30px;line-height:8.30px;color:#1a1a1a;font-style:italic;letter-spacing:0.504px;-webkit-text-stroke:0.05px currentColor;">(14%)</div>
<div class="t" style="left:668.36px;top:269.47px;font-size:8.30px;line-height:8.30px;color:#1a1a1a;font-style:italic;letter-spacing:0.504px;-webkit-text-stroke:0.05px currentColor;">(14%)</div>
<div class="t" style="left:733.97px;top:269.47px;font-size:8.30px;line-height:8.30px;color:#1a1a1a;font-style:italic;letter-spacing:0.504px;-webkit-text-stroke:0.05px currentColor;">(14%)</div>
<div class="t" style="left:799.58px;top:269.47px;font-size:8.30px;line-height:8.30px;color:#1a1a1a;font-style:italic;letter-spacing:0.504px;-webkit-text-stroke:0.05px currentColor;">(14%)</div>
<div class="t" style="left:865.19px;top:269.47px;font-size:8.30px;line-height:8.30px;color:#1a1a1a;font-style:italic;letter-spacing:0.504px;-webkit-text-stroke:0.05px currentColor;">(14%)</div>
<div class="t" style="left:930.80px;top:269.47px;font-size:8.30px;line-height:8.30px;color:#1a1a1a;font-style:italic;letter-spacing:0.504px;-webkit-text-stroke:0.05px currentColor;">(14%)</div>
<div class="t" style="left:996.41px;top:269.47px;font-size:8.30px;line-height:8.30px;color:#1a1a1a;font-style:italic;letter-spacing:0.504px;-webkit-text-stroke:0.05px currentColor;">(14%)</div>
<div class="t" style="left:1062.02px;top:269.47px;font-size:8.30px;line-height:8.30px;color:#1a1a1a;font-style:italic;letter-spacing:0.504px;-webkit-text-stroke:0.05px currentColor;">(14%)</div>
<div class="t" style="left:1127.63px;top:269.47px;font-size:8.30px;line-height:8.30px;color:#1a1a1a;font-style:italic;letter-spacing:0.504px;-webkit-text-stroke:0.05px currentColor;">(14%)</div>
<div class="t" style="left:1193.24px;top:269.47px;font-size:8.30px;line-height:8.30px;color:#1a1a1a;font-style:italic;letter-spacing:0.504px;-webkit-text-stroke:0.05px currentColor;">(14%)</div>
<div class="t" style="left:1258.85px;top:269.47px;font-size:8.30px;line-height:8.30px;color:#1a1a1a;font-style:italic;letter-spacing:0.504px;-webkit-text-stroke:0.05px currentColor;">(14%)</div>
<div class="t" style="left:1324.46px;top:269.47px;font-size:8.30px;line-height:8.30px;color:#1a1a1a;font-style:italic;letter-spacing:0.504px;-webkit-text-stroke:0.05px currentColor;">(14%)</div>
<div style="position:absolute;left:33.70px;top:278.90px;width:514.70px;height:12.10px;background:#48afe3;"></div>
<div style="position:absolute;left:563.20px;top:278.90px;width:787.30px;height:12.10px;background:#48afe3;"></div>
<div class="t" style="left:40.80px;top:280.67px;font-size:10.20px;line-height:10.20px;color:#fff;font-weight:bold;transform:scaleX(1.0070);transform-origin:0 0;-webkit-text-stroke:0.2px currentColor;">Gross Margin</div>
<div class="t" style="left:297.87px;top:281.37px;font-size:8.30px;line-height:8.30px;color:#fff;font-weight:bold;letter-spacing:0.692px;-webkit-text-stroke:0.2px currentColor;">552</div>
<div class="t" style="left:347.38px;top:281.37px;font-size:8.30px;line-height:8.30px;color:#fff;font-weight:bold;letter-spacing:0.612px;-webkit-text-stroke:0.2px currentColor;">2,415</div>
<div class="t" style="left:404.68px;top:281.37px;font-size:8.30px;line-height:8.30px;color:#fff;font-weight:bold;letter-spacing:0.612px;-webkit-text-stroke:0.2px currentColor;">7,910</div>
<div class="t" style="left:457.20px;top:281.37px;font-size:8.30px;line-height:8.30px;color:#fff;font-weight:bold;letter-spacing:0.582px;-webkit-text-stroke:0.2px currentColor;">20,422</div>
<div class="t" style="left:514.70px;top:281.37px;font-size:8.30px;line-height:8.30px;color:#fff;font-weight:bold;letter-spacing:0.582px;-webkit-text-stroke:0.2px currentColor;">45,008</div>
<div class="t" style="left:613.26px;top:281.37px;font-size:8.30px;line-height:8.30px;color:#fff;font-weight:bold;letter-spacing:0.922px;-webkit-text-stroke:0.2px currentColor;">22</div>
<div class="t" style="left:678.87px;top:281.37px;font-size:8.30px;line-height:8.30px;color:#fff;font-weight:bold;letter-spacing:0.922px;-webkit-text-stroke:0.2px currentColor;">27</div>
<div class="t" style="left:744.48px;top:281.37px;font-size:8.30px;line-height:8.30px;color:#fff;font-weight:bold;letter-spacing:0.922px;-webkit-text-stroke:0.2px currentColor;">31</div>
<div class="t" style="left:810.09px;top:281.37px;font-size:8.30px;line-height:8.30px;color:#fff;font-weight:bold;letter-spacing:0.922px;-webkit-text-stroke:0.2px currentColor;">35</div>
<div class="t" style="left:875.70px;top:281.37px;font-size:8.30px;line-height:8.30px;color:#fff;font-weight:bold;letter-spacing:0.922px;-webkit-text-stroke:0.2px currentColor;">39</div>
<div class="t" style="left:941.31px;top:281.37px;font-size:8.30px;line-height:8.30px;color:#fff;font-weight:bold;letter-spacing:0.922px;-webkit-text-stroke:0.2px currentColor;">44</div>
<div class="t" style="left:1006.92px;top:281.37px;font-size:8.30px;line-height:8.30px;color:#fff;font-weight:bold;letter-spacing:0.922px;-webkit-text-stroke:0.2px currentColor;">48</div>
<div class="t" style="left:1072.53px;top:281.37px;font-size:8.30px;line-height:8.30px;color:#fff;font-weight:bold;letter-spacing:0.922px;-webkit-text-stroke:0.2px currentColor;">52</div>
<div class="t" style="left:1138.14px;top:281.37px;font-size:8.30px;line-height:8.30px;color:#fff;font-weight:bold;letter-spacing:0.922px;-webkit-text-stroke:0.2px currentColor;">57</div>
<div class="t" style="left:1203.75px;top:281.37px;font-size:8.30px;line-height:8.30px;color:#fff;font-weight:bold;letter-spacing:0.922px;-webkit-text-stroke:0.2px currentColor;">61</div>
<div class="t" style="left:1269.36px;top:281.37px;font-size:8.30px;line-height:8.30px;color:#fff;font-weight:bold;letter-spacing:0.922px;-webkit-text-stroke:0.2px currentColor;">65</div>
<div class="t" style="left:1334.97px;top:281.37px;font-size:8.30px;line-height:8.30px;color:#fff;font-weight:bold;letter-spacing:0.922px;-webkit-text-stroke:0.2px currentColor;">70</div>
<div class="t" style="left:44.30px;top:292.40px;font-size:8.50px;line-height:8.50px;color:#1a1a1a;font-style:italic;transform:scaleX(0.9911);transform-origin:0 0;-webkit-text-stroke:0.05px currentColor;">Gross Margin %</div>
<div class="t" style="left:295.45px;top:292.77px;font-size:8.30px;line-height:8.30px;color:#1a1a1a;font-style:italic;letter-spacing:0.517px;-webkit-text-stroke:0.05px currentColor;">87%</div>
<div class="t" style="left:352.95px;top:292.77px;font-size:8.30px;line-height:8.30px;color:#1a1a1a;font-style:italic;letter-spacing:0.517px;-webkit-text-stroke:0.05px currentColor;">87%</div>
<div class="t" style="left:410.25px;top:292.77px;font-size:8.30px;line-height:8.30px;color:#1a1a1a;font-style:italic;letter-spacing:0.517px;-webkit-text-stroke:0.05px currentColor;">88%</div>
<div class="t" style="left:467.85px;top:292.77px;font-size:8.30px;line-height:8.30px;color:#1a1a1a;font-style:italic;letter-spacing:0.517px;-webkit-text-stroke:0.05px currentColor;">88%</div>
<div class="t" style="left:525.35px;top:292.77px;font-size:8.30px;line-height:8.30px;color:#1a1a1a;font-style:italic;letter-spacing:0.517px;-webkit-text-stroke:0.05px currentColor;">89%</div>
<div class="t" style="left:605.76px;top:292.77px;font-size:8.30px;line-height:8.30px;color:#1a1a1a;font-style:italic;letter-spacing:0.517px;-webkit-text-stroke:0.05px currentColor;">87%</div>
<div class="t" style="left:671.37px;top:292.77px;font-size:8.30px;line-height:8.30px;color:#1a1a1a;font-style:italic;letter-spacing:0.517px;-webkit-text-stroke:0.05px currentColor;">87%</div>
<div class="t" style="left:736.98px;top:292.77px;font-size:8.30px;line-height:8.30px;color:#1a1a1a;font-style:italic;letter-spacing:0.517px;-webkit-text-stroke:0.05px currentColor;">87%</div>
<div class="t" style="left:802.59px;top:292.77px;font-size:8.30px;line-height:8.30px;color:#1a1a1a;font-style:italic;letter-spacing:0.517px;-webkit-text-stroke:0.05px currentColor;">87%</div>
<div class="t" style="left:868.20px;top:292.77px;font-size:8.30px;line-height:8.30px;color:#1a1a1a;font-style:italic;letter-spacing:0.517px;-webkit-text-stroke:0.05px currentColor;">87%</div>
<div class="t" style="left:933.81px;top:292.77px;font-size:8.30px;line-height:8.30px;color:#1a1a1a;font-style:italic;letter-spacing:0.517px;-webkit-text-stroke:0.05px currentColor;">87%</div>
<div class="t" style="left:999.42px;top:292.77px;font-size:8.30px;line-height:8.30px;color:#1a1a1a;font-style:italic;letter-spacing:0.517px;-webkit-text-stroke:0.05px currentColor;">87%</div>
<div class="t" style="left:1065.03px;top:292.77px;font-size:8.30px;line-height:8.30px;color:#1a1a1a;font-style:italic;letter-spacing:0.517px;-webkit-text-stroke:0.05px currentColor;">87%</div>
<div class="t" style="left:1130.64px;top:292.77px;font-size:8.30px;line-height:8.30px;color:#1a1a1a;font-style:italic;letter-spacing:0.517px;-webkit-text-stroke:0.05px currentColor;">87%</div>
<div class="t" style="left:1196.25px;top:292.77px;font-size:8.30px;line-height:8.30px;color:#1a1a1a;font-style:italic;letter-spacing:0.517px;-webkit-text-stroke:0.05px currentColor;">87%</div>
<div class="t" style="left:1261.86px;top:292.77px;font-size:8.30px;line-height:8.30px;color:#1a1a1a;font-style:italic;letter-spacing:0.517px;-webkit-text-stroke:0.05px currentColor;">87%</div>
<div class="t" style="left:1327.47px;top:292.77px;font-size:8.30px;line-height:8.30px;color:#1a1a1a;font-style:italic;letter-spacing:0.517px;-webkit-text-stroke:0.05px currentColor;">87%</div>
<div class="t" style="left:35.60px;top:303.37px;font-size:8.30px;line-height:8.30px;color:#1a1a1a;transform:scaleX(0.9883);transform-origin:0 0;-webkit-text-stroke:0.2px currentColor;">Variable Expenses</div>
<div class="t" style="left:296.17px;top:303.87px;font-size:8.30px;line-height:8.30px;color:#1a1a1a;letter-spacing:0.264px;-webkit-text-stroke:0.2px currentColor;">(191)</div>
<div class="t" style="left:353.67px;top:303.87px;font-size:8.30px;line-height:8.30px;color:#1a1a1a;letter-spacing:0.264px;-webkit-text-stroke:0.2px currentColor;">(472)</div>
<div class="t" style="left:403.66px;top:303.87px;font-size:8.30px;line-height:8.30px;color:#1a1a1a;letter-spacing:0.239px;-webkit-text-stroke:0.2px currentColor;">(1,023)</div>
<div class="t" style="left:461.26px;top:303.87px;font-size:8.30px;line-height:8.30px;color:#1a1a1a;letter-spacing:0.239px;-webkit-text-stroke:0.2px currentColor;">(1,999)</div>
<div class="t" style="left:518.76px;top:303.87px;font-size:8.30px;line-height:8.30px;color:#1a1a1a;letter-spacing:0.239px;-webkit-text-stroke:0.2px currentColor;">(3,529)</div>
<div class="t" style="left:611.12px;top:303.87px;font-size:8.30px;line-height:8.30px;color:#1a1a1a;letter-spacing:0.344px;-webkit-text-stroke:0.2px currentColor;">(14)</div>
<div class="t" style="left:676.73px;top:303.87px;font-size:8.30px;line-height:8.30px;color:#1a1a1a;letter-spacing:0.344px;-webkit-text-stroke:0.2px currentColor;">(14)</div>
<div class="t" style="left:742.34px;top:303.87px;font-size:8.30px;line-height:8.30px;color:#1a1a1a;letter-spacing:0.344px;-webkit-text-stroke:0.2px currentColor;">(15)</div>
<div class="t" style="left:807.95px;top:303.87px;font-size:8.30px;line-height:8.30px;color:#1a1a1a;letter-spacing:0.344px;-webkit-text-stroke:0.2px currentColor;">(15)</div>
<div class="t" style="left:873.56px;top:303.87px;font-size:8.30px;line-height:8.30px;color:#1a1a1a;letter-spacing:0.344px;-webkit-text-stroke:0.2px currentColor;">(15)</div>
<div class="t" style="left:939.17px;top:303.87px;font-size:8.30px;line-height:8.30px;color:#1a1a1a;letter-spacing:0.344px;-webkit-text-stroke:0.2px currentColor;">(16)</div>
<div class="t" style="left:1004.78px;top:303.87px;font-size:8.30px;line-height:8.30px;color:#1a1a1a;letter-spacing:0.344px;-webkit-text-stroke:0.2px currentColor;">(16)</div>
<div class="t" style="left:1070.39px;top:303.87px;font-size:8.30px;line-height:8.30px;color:#1a1a1a;letter-spacing:0.344px;-webkit-text-stroke:0.2px currentColor;">(16)</div>
<div class="t" style="left:1136.00px;top:303.87px;font-size:8.30px;line-height:8.30px;color:#1a1a1a;letter-spacing:0.344px;-webkit-text-stroke:0.2px currentColor;">(17)</div>
<div class="t" style="left:1201.61px;top:303.87px;font-size:8.30px;line-height:8.30px;color:#1a1a1a;letter-spacing:0.344px;-webkit-text-stroke:0.2px currentColor;">(17)</div>
<div class="t" style="left:1267.22px;top:303.87px;font-size:8.30px;line-height:8.30px;color:#1a1a1a;letter-spacing:0.344px;-webkit-text-stroke:0.2px currentColor;">(17)</div>
<div class="t" style="left:1332.83px;top:303.87px;font-size:8.30px;line-height:8.30px;color:#1a1a1a;letter-spacing:0.344px;-webkit-text-stroke:0.2px currentColor;">(18)</div>
<div class="t" style="left:44.30px;top:314.70px;font-size:8.50px;line-height:8.50px;color:#1a1a1a;font-style:italic;transform:scaleX(1.0116);transform-origin:0 0;-webkit-text-stroke:0.05px currentColor;">% of Revenue</div>
<div class="t" style="left:292.44px;top:315.07px;font-size:8.30px;line-height:8.30px;color:#1a1a1a;font-style:italic;letter-spacing:0.504px;-webkit-text-stroke:0.05px currentColor;">(30%)</div>
<div class="t" style="left:349.94px;top:315.07px;font-size:8.30px;line-height:8.30px;color:#1a1a1a;font-style:italic;letter-spacing:0.504px;-webkit-text-stroke:0.05px currentColor;">(17%)</div>
<div class="t" style="left:407.24px;top:315.07px;font-size:8.30px;line-height:8.30px;color:#1a1a1a;font-style:italic;letter-spacing:0.658px;-webkit-text-stroke:0.05px currentColor;">(11%)</div>
<div class="t" style="left:469.48px;top:315.07px;font-size:8.30px;line-height:8.30px;color:#1a1a1a;font-style:italic;letter-spacing:0.664px;-webkit-text-stroke:0.05px currentColor;">(9%)</div>
<div class="t" style="left:526.98px;top:315.07px;font-size:8.30px;line-height:8.30px;color:#1a1a1a;font-style:italic;letter-spacing:0.664px;-webkit-text-stroke:0.05px currentColor;">(7%)</div>
<div class="t" style="left:602.75px;top:315.07px;font-size:8.30px;line-height:8.30px;color:#1a1a1a;font-style:italic;letter-spacing:0.504px;-webkit-text-stroke:0.05px currentColor;">(55%)</div>
<div class="t" style="left:668.36px;top:315.07px;font-size:8.30px;line-height:8.30px;color:#1a1a1a;font-style:italic;letter-spacing:0.504px;-webkit-text-stroke:0.05px currentColor;">(47%)</div>
<div class="t" style="left:733.97px;top:315.07px;font-size:8.30px;line-height:8.30px;color:#1a1a1a;font-style:italic;letter-spacing:0.504px;-webkit-text-stroke:0.05px currentColor;">(42%)</div>
<div class="t" style="left:799.58px;top:315.07px;font-size:8.30px;line-height:8.30px;color:#1a1a1a;font-style:italic;letter-spacing:0.504px;-webkit-text-stroke:0.05px currentColor;">(37%)</div>
<div class="t" style="left:865.19px;top:315.07px;font-size:8.30px;line-height:8.30px;color:#1a1a1a;font-style:italic;letter-spacing:0.504px;-webkit-text-stroke:0.05px currentColor;">(34%)</div>
<div class="t" style="left:930.80px;top:315.07px;font-size:8.30px;line-height:8.30px;color:#1a1a1a;font-style:italic;letter-spacing:0.504px;-webkit-text-stroke:0.05px currentColor;">(31%)</div>
<div class="t" style="left:996.41px;top:315.07px;font-size:8.30px;line-height:8.30px;color:#1a1a1a;font-style:italic;letter-spacing:0.504px;-webkit-text-stroke:0.05px currentColor;">(29%)</div>
<div class="t" style="left:1062.02px;top:315.07px;font-size:8.30px;line-height:8.30px;color:#1a1a1a;font-style:italic;letter-spacing:0.504px;-webkit-text-stroke:0.05px currentColor;">(27%)</div>
<div class="t" style="left:1127.63px;top:315.07px;font-size:8.30px;line-height:8.30px;color:#1a1a1a;font-style:italic;letter-spacing:0.504px;-webkit-text-stroke:0.05px currentColor;">(26%)</div>
<div class="t" style="left:1193.24px;top:315.07px;font-size:8.30px;line-height:8.30px;color:#1a1a1a;font-style:italic;letter-spacing:0.504px;-webkit-text-stroke:0.05px currentColor;">(24%)</div>
<div class="t" style="left:1258.85px;top:315.07px;font-size:8.30px;line-height:8.30px;color:#1a1a1a;font-style:italic;letter-spacing:0.504px;-webkit-text-stroke:0.05px currentColor;">(23%)</div>
<div class="t" style="left:1324.46px;top:315.07px;font-size:8.30px;line-height:8.30px;color:#1a1a1a;font-style:italic;letter-spacing:0.504px;-webkit-text-stroke:0.05px currentColor;">(22%)</div>
<div style="position:absolute;left:33.70px;top:324.50px;width:514.70px;height:11.90px;background:#48afe3;"></div>
<div style="position:absolute;left:563.20px;top:324.50px;width:787.30px;height:11.90px;background:#48afe3;"></div>
<div class="t" style="left:40.80px;top:326.27px;font-size:10.20px;line-height:10.20px;color:#fff;font-weight:bold;transform:scaleX(1.0281);transform-origin:0 0;-webkit-text-stroke:0.2px currentColor;">Contribution Margin</div>
<div class="t" style="left:297.87px;top:326.97px;font-size:8.30px;line-height:8.30px;color:#fff;font-weight:bold;letter-spacing:0.692px;-webkit-text-stroke:0.2px currentColor;">360</div>
<div class="t" style="left:347.38px;top:326.97px;font-size:8.30px;line-height:8.30px;color:#fff;font-weight:bold;letter-spacing:0.612px;-webkit-text-stroke:0.2px currentColor;">1,944</div>
<div class="t" style="left:404.68px;top:326.97px;font-size:8.30px;line-height:8.30px;color:#fff;font-weight:bold;letter-spacing:0.612px;-webkit-text-stroke:0.2px currentColor;">6,887</div>
<div class="t" style="left:457.20px;top:326.97px;font-size:8.30px;line-height:8.30px;color:#fff;font-weight:bold;letter-spacing:0.582px;-webkit-text-stroke:0.2px currentColor;">18,423</div>
<div class="t" style="left:514.70px;top:326.97px;font-size:8.30px;line-height:8.30px;color:#fff;font-weight:bold;letter-spacing:0.582px;-webkit-text-stroke:0.2px currentColor;">41,480</div>
<div class="t" style="left:618.79px;top:326.97px;font-size:8.30px;line-height:8.30px;color:#fff;font-weight:bold;-webkit-text-stroke:0.2px currentColor;">8</div>
<div class="t" style="left:678.87px;top:326.97px;font-size:8.30px;line-height:8.30px;color:#fff;font-weight:bold;letter-spacing:0.922px;-webkit-text-stroke:0.2px currentColor;">12</div>
<div class="t" style="left:744.48px;top:326.97px;font-size:8.30px;line-height:8.30px;color:#fff;font-weight:bold;letter-spacing:0.922px;-webkit-text-stroke:0.2px currentColor;">16</div>
<div class="t" style="left:810.09px;top:326.97px;font-size:8.30px;line-height:8.30px;color:#fff;font-weight:bold;letter-spacing:0.922px;-webkit-text-stroke:0.2px currentColor;">20</div>
<div class="t" style="left:875.70px;top:326.97px;font-size:8.30px;line-height:8.30px;color:#fff;font-weight:bold;letter-spacing:0.922px;-webkit-text-stroke:0.2px currentColor;">24</div>
<div class="t" style="left:941.31px;top:326.97px;font-size:8.30px;line-height:8.30px;color:#fff;font-weight:bold;letter-spacing:0.922px;-webkit-text-stroke:0.2px currentColor;">28</div>
<div class="t" style="left:1006.92px;top:326.97px;font-size:8.30px;line-height:8.30px;color:#fff;font-weight:bold;letter-spacing:0.922px;-webkit-text-stroke:0.2px currentColor;">32</div>
<div class="t" style="left:1072.53px;top:326.97px;font-size:8.30px;line-height:8.30px;color:#fff;font-weight:bold;letter-spacing:0.922px;-webkit-text-stroke:0.2px currentColor;">36</div>
<div class="t" style="left:1138.14px;top:326.97px;font-size:8.30px;line-height:8.30px;color:#fff;font-weight:bold;letter-spacing:0.922px;-webkit-text-stroke:0.2px currentColor;">40</div>
<div class="t" style="left:1203.75px;top:326.97px;font-size:8.30px;line-height:8.30px;color:#fff;font-weight:bold;letter-spacing:0.922px;-webkit-text-stroke:0.2px currentColor;">44</div>
<div class="t" style="left:1269.36px;top:326.97px;font-size:8.30px;line-height:8.30px;color:#fff;font-weight:bold;letter-spacing:0.922px;-webkit-text-stroke:0.2px currentColor;">48</div>
<div class="t" style="left:1334.97px;top:326.97px;font-size:8.30px;line-height:8.30px;color:#fff;font-weight:bold;letter-spacing:0.922px;-webkit-text-stroke:0.2px currentColor;">52</div>
<div class="t" style="left:44.30px;top:338.10px;font-size:8.50px;line-height:8.50px;color:#1a1a1a;font-style:italic;transform:scaleX(1.0582);transform-origin:0 0;-webkit-text-stroke:0.05px currentColor;">Contribution Margin %</div>
<div class="t" style="left:295.45px;top:338.47px;font-size:8.30px;line-height:8.30px;color:#1a1a1a;font-style:italic;letter-spacing:0.517px;-webkit-text-stroke:0.05px currentColor;">56%</div>
<div class="t" style="left:352.95px;top:338.47px;font-size:8.30px;line-height:8.30px;color:#1a1a1a;font-style:italic;letter-spacing:0.517px;-webkit-text-stroke:0.05px currentColor;">70%</div>
<div class="t" style="left:410.25px;top:338.47px;font-size:8.30px;line-height:8.30px;color:#1a1a1a;font-style:italic;letter-spacing:0.517px;-webkit-text-stroke:0.05px currentColor;">76%</div>
<div class="t" style="left:467.85px;top:338.47px;font-size:8.30px;line-height:8.30px;color:#1a1a1a;font-style:italic;letter-spacing:0.517px;-webkit-text-stroke:0.05px currentColor;">80%</div>
<div class="t" style="left:525.35px;top:338.47px;font-size:8.30px;line-height:8.30px;color:#1a1a1a;font-style:italic;letter-spacing:0.517px;-webkit-text-stroke:0.05px currentColor;">82%</div>
<div class="t" style="left:605.76px;top:338.47px;font-size:8.30px;line-height:8.30px;color:#1a1a1a;font-style:italic;letter-spacing:0.517px;-webkit-text-stroke:0.05px currentColor;">31%</div>
<div class="t" style="left:671.37px;top:338.47px;font-size:8.30px;line-height:8.30px;color:#1a1a1a;font-style:italic;letter-spacing:0.517px;-webkit-text-stroke:0.05px currentColor;">39%</div>
<div class="t" style="left:736.98px;top:338.47px;font-size:8.30px;line-height:8.30px;color:#1a1a1a;font-style:italic;letter-spacing:0.517px;-webkit-text-stroke:0.05px currentColor;">45%</div>
<div class="t" style="left:802.59px;top:338.47px;font-size:8.30px;line-height:8.30px;color:#1a1a1a;font-style:italic;letter-spacing:0.517px;-webkit-text-stroke:0.05px currentColor;">49%</div>
<div class="t" style="left:868.20px;top:338.47px;font-size:8.30px;line-height:8.30px;color:#1a1a1a;font-style:italic;letter-spacing:0.517px;-webkit-text-stroke:0.05px currentColor;">53%</div>
<div class="t" style="left:933.81px;top:338.47px;font-size:8.30px;line-height:8.30px;color:#1a1a1a;font-style:italic;letter-spacing:0.517px;-webkit-text-stroke:0.05px currentColor;">55%</div>
<div class="t" style="left:999.42px;top:338.47px;font-size:8.30px;line-height:8.30px;color:#1a1a1a;font-style:italic;letter-spacing:0.517px;-webkit-text-stroke:0.05px currentColor;">58%</div>
<div class="t" style="left:1065.03px;top:338.47px;font-size:8.30px;line-height:8.30px;color:#1a1a1a;font-style:italic;letter-spacing:0.517px;-webkit-text-stroke:0.05px currentColor;">59%</div>
<div class="t" style="left:1130.64px;top:338.47px;font-size:8.30px;line-height:8.30px;color:#1a1a1a;font-style:italic;letter-spacing:0.517px;-webkit-text-stroke:0.05px currentColor;">61%</div>
<div class="t" style="left:1196.25px;top:338.47px;font-size:8.30px;line-height:8.30px;color:#1a1a1a;font-style:italic;letter-spacing:0.517px;-webkit-text-stroke:0.05px currentColor;">62%</div>
<div class="t" style="left:1261.86px;top:338.47px;font-size:8.30px;line-height:8.30px;color:#1a1a1a;font-style:italic;letter-spacing:0.517px;-webkit-text-stroke:0.05px currentColor;">63%</div>
<div class="t" style="left:1327.47px;top:338.47px;font-size:8.30px;line-height:8.30px;color:#1a1a1a;font-style:italic;letter-spacing:0.517px;-webkit-text-stroke:0.05px currentColor;">64%</div>
<div class="t" style="left:35.60px;top:349.27px;font-size:8.30px;line-height:8.30px;color:#1a1a1a;transform:scaleX(0.9810);transform-origin:0 0;-webkit-text-stroke:0.2px currentColor;">Payroll Expenses</div>
<div class="t" style="left:296.17px;top:349.77px;font-size:8.30px;line-height:8.30px;color:#1a1a1a;letter-spacing:0.264px;-webkit-text-stroke:0.2px currentColor;">(560)</div>
<div class="t" style="left:353.67px;top:349.77px;font-size:8.30px;line-height:8.30px;color:#1a1a1a;letter-spacing:0.264px;-webkit-text-stroke:0.2px currentColor;">(879)</div>
<div class="t" style="left:403.66px;top:349.77px;font-size:8.30px;line-height:8.30px;color:#1a1a1a;letter-spacing:0.239px;-webkit-text-stroke:0.2px currentColor;">(1,152)</div>
<div class="t" style="left:461.26px;top:349.77px;font-size:8.30px;line-height:8.30px;color:#1a1a1a;letter-spacing:0.239px;-webkit-text-stroke:0.2px currentColor;">(1,350)</div>
<div class="t" style="left:518.76px;top:349.77px;font-size:8.30px;line-height:8.30px;color:#1a1a1a;letter-spacing:0.239px;-webkit-text-stroke:0.2px currentColor;">(1,391)</div>
<div class="t" style="left:611.12px;top:349.77px;font-size:8.30px;line-height:8.30px;color:#1a1a1a;letter-spacing:0.344px;-webkit-text-stroke:0.2px currentColor;">(47)</div>
<div class="t" style="left:676.73px;top:349.77px;font-size:8.30px;line-height:8.30px;color:#1a1a1a;letter-spacing:0.344px;-webkit-text-stroke:0.2px currentColor;">(47)</div>
<div class="t" style="left:742.34px;top:349.77px;font-size:8.30px;line-height:8.30px;color:#1a1a1a;letter-spacing:0.344px;-webkit-text-stroke:0.2px currentColor;">(47)</div>
<div class="t" style="left:807.95px;top:349.77px;font-size:8.30px;line-height:8.30px;color:#1a1a1a;letter-spacing:0.344px;-webkit-text-stroke:0.2px currentColor;">(47)</div>
<div class="t" style="left:873.56px;top:349.77px;font-size:8.30px;line-height:8.30px;color:#1a1a1a;letter-spacing:0.344px;-webkit-text-stroke:0.2px currentColor;">(47)</div>
<div class="t" style="left:939.17px;top:349.77px;font-size:8.30px;line-height:8.30px;color:#1a1a1a;letter-spacing:0.344px;-webkit-text-stroke:0.2px currentColor;">(47)</div>
<div class="t" style="left:1004.78px;top:349.77px;font-size:8.30px;line-height:8.30px;color:#1a1a1a;letter-spacing:0.344px;-webkit-text-stroke:0.2px currentColor;">(47)</div>
<div class="t" style="left:1070.39px;top:349.77px;font-size:8.30px;line-height:8.30px;color:#1a1a1a;letter-spacing:0.344px;-webkit-text-stroke:0.2px currentColor;">(47)</div>
<div class="t" style="left:1136.00px;top:349.77px;font-size:8.30px;line-height:8.30px;color:#1a1a1a;letter-spacing:0.344px;-webkit-text-stroke:0.2px currentColor;">(47)</div>
<div class="t" style="left:1201.61px;top:349.77px;font-size:8.30px;line-height:8.30px;color:#1a1a1a;letter-spacing:0.344px;-webkit-text-stroke:0.2px currentColor;">(47)</div>
<div class="t" style="left:1267.22px;top:349.77px;font-size:8.30px;line-height:8.30px;color:#1a1a1a;letter-spacing:0.344px;-webkit-text-stroke:0.2px currentColor;">(47)</div>
<div class="t" style="left:1332.83px;top:349.77px;font-size:8.30px;line-height:8.30px;color:#1a1a1a;letter-spacing:0.344px;-webkit-text-stroke:0.2px currentColor;">(47)</div>
<div class="t" style="left:44.30px;top:360.60px;font-size:8.50px;line-height:8.50px;color:#1a1a1a;font-style:italic;transform:scaleX(1.0116);transform-origin:0 0;-webkit-text-stroke:0.05px currentColor;">% of Revenue</div>
<div class="t" style="left:292.44px;top:360.97px;font-size:8.30px;line-height:8.30px;color:#1a1a1a;font-style:italic;letter-spacing:0.504px;-webkit-text-stroke:0.05px currentColor;">(88%)</div>
<div class="t" style="left:349.94px;top:360.97px;font-size:8.30px;line-height:8.30px;color:#1a1a1a;font-style:italic;letter-spacing:0.504px;-webkit-text-stroke:0.05px currentColor;">(32%)</div>
<div class="t" style="left:407.24px;top:360.97px;font-size:8.30px;line-height:8.30px;color:#1a1a1a;font-style:italic;letter-spacing:0.504px;-webkit-text-stroke:0.05px currentColor;">(13%)</div>
<div class="t" style="left:469.48px;top:360.97px;font-size:8.30px;line-height:8.30px;color:#1a1a1a;font-style:italic;letter-spacing:0.664px;-webkit-text-stroke:0.05px currentColor;">(6%)</div>
<div class="t" style="left:526.98px;top:360.97px;font-size:8.30px;line-height:8.30px;color:#1a1a1a;font-style:italic;letter-spacing:0.664px;-webkit-text-stroke:0.05px currentColor;">(3%)</div>
<div class="t" style="left:598.11px;top:360.97px;font-size:8.30px;line-height:8.30px;color:#1a1a1a;font-style:italic;letter-spacing:0.408px;-webkit-text-stroke:0.05px currentColor;">(181%)</div>
<div class="t" style="left:663.72px;top:360.97px;font-size:8.30px;line-height:8.30px;color:#1a1a1a;font-style:italic;letter-spacing:0.408px;-webkit-text-stroke:0.05px currentColor;">(152%)</div>
<div class="t" style="left:729.33px;top:360.97px;font-size:8.30px;line-height:8.30px;color:#1a1a1a;font-style:italic;letter-spacing:0.408px;-webkit-text-stroke:0.05px currentColor;">(131%)</div>
<div class="t" style="left:794.94px;top:360.97px;font-size:8.30px;line-height:8.30px;color:#1a1a1a;font-style:italic;letter-spacing:0.531px;-webkit-text-stroke:0.05px currentColor;">(115%)</div>
<div class="t" style="left:860.55px;top:360.97px;font-size:8.30px;line-height:8.30px;color:#1a1a1a;font-style:italic;letter-spacing:0.408px;-webkit-text-stroke:0.05px currentColor;">(102%)</div>
<div class="t" style="left:930.80px;top:360.97px;font-size:8.30px;line-height:8.30px;color:#1a1a1a;font-style:italic;letter-spacing:0.504px;-webkit-text-stroke:0.05px currentColor;">(92%)</div>
<div class="t" style="left:996.41px;top:360.97px;font-size:8.30px;line-height:8.30px;color:#1a1a1a;font-style:italic;letter-spacing:0.504px;-webkit-text-stroke:0.05px currentColor;">(84%)</div>
<div class="t" style="left:1062.02px;top:360.97px;font-size:8.30px;line-height:8.30px;color:#1a1a1a;font-style:italic;letter-spacing:0.504px;-webkit-text-stroke:0.05px currentColor;">(77%)</div>
<div class="t" style="left:1127.63px;top:360.97px;font-size:8.30px;line-height:8.30px;color:#1a1a1a;font-style:italic;letter-spacing:0.504px;-webkit-text-stroke:0.05px currentColor;">(71%)</div>
<div class="t" style="left:1193.24px;top:360.97px;font-size:8.30px;line-height:8.30px;color:#1a1a1a;font-style:italic;letter-spacing:0.504px;-webkit-text-stroke:0.05px currentColor;">(66%)</div>
<div class="t" style="left:1258.85px;top:360.97px;font-size:8.30px;line-height:8.30px;color:#1a1a1a;font-style:italic;letter-spacing:0.504px;-webkit-text-stroke:0.05px currentColor;">(62%)</div>
<div class="t" style="left:1324.46px;top:360.97px;font-size:8.30px;line-height:8.30px;color:#1a1a1a;font-style:italic;letter-spacing:0.504px;-webkit-text-stroke:0.05px currentColor;">(58%)</div>
<div class="t" style="left:35.60px;top:374.07px;font-size:8.30px;line-height:8.30px;color:#1a1a1a;transform:scaleX(0.9703);transform-origin:0 0;-webkit-text-stroke:0.2px currentColor;">Fixed Expenses</div>
<div class="t" style="left:296.17px;top:374.57px;font-size:8.30px;line-height:8.30px;color:#1a1a1a;letter-spacing:0.264px;-webkit-text-stroke:0.2px currentColor;">(193)</div>
<div class="t" style="left:353.67px;top:374.57px;font-size:8.30px;line-height:8.30px;color:#1a1a1a;letter-spacing:0.264px;-webkit-text-stroke:0.2px currentColor;">(193)</div>
<div class="t" style="left:410.97px;top:374.57px;font-size:8.30px;line-height:8.30px;color:#1a1a1a;letter-spacing:0.264px;-webkit-text-stroke:0.2px currentColor;">(193)</div>
<div class="t" style="left:468.57px;top:374.57px;font-size:8.30px;line-height:8.30px;color:#1a1a1a;letter-spacing:0.264px;-webkit-text-stroke:0.2px currentColor;">(193)</div>
<div class="t" style="left:526.07px;top:374.57px;font-size:8.30px;line-height:8.30px;color:#1a1a1a;letter-spacing:0.264px;-webkit-text-stroke:0.2px currentColor;">(193)</div>
<div class="t" style="left:611.12px;top:374.57px;font-size:8.30px;line-height:8.30px;color:#1a1a1a;letter-spacing:0.344px;-webkit-text-stroke:0.2px currentColor;">(16)</div>
<div class="t" style="left:676.73px;top:374.57px;font-size:8.30px;line-height:8.30px;color:#1a1a1a;letter-spacing:0.344px;-webkit-text-stroke:0.2px currentColor;">(16)</div>
<div class="t" style="left:742.34px;top:374.57px;font-size:8.30px;line-height:8.30px;color:#1a1a1a;letter-spacing:0.344px;-webkit-text-stroke:0.2px currentColor;">(16)</div>
<div class="t" style="left:807.95px;top:374.57px;font-size:8.30px;line-height:8.30px;color:#1a1a1a;letter-spacing:0.344px;-webkit-text-stroke:0.2px currentColor;">(16)</div>
<div class="t" style="left:873.56px;top:374.57px;font-size:8.30px;line-height:8.30px;color:#1a1a1a;letter-spacing:0.344px;-webkit-text-stroke:0.2px currentColor;">(16)</div>
<div class="t" style="left:939.17px;top:374.57px;font-size:8.30px;line-height:8.30px;color:#1a1a1a;letter-spacing:0.344px;-webkit-text-stroke:0.2px currentColor;">(16)</div>
<div class="t" style="left:1004.78px;top:374.57px;font-size:8.30px;line-height:8.30px;color:#1a1a1a;letter-spacing:0.344px;-webkit-text-stroke:0.2px currentColor;">(16)</div>
<div class="t" style="left:1070.39px;top:374.57px;font-size:8.30px;line-height:8.30px;color:#1a1a1a;letter-spacing:0.344px;-webkit-text-stroke:0.2px currentColor;">(16)</div>
<div class="t" style="left:1136.00px;top:374.57px;font-size:8.30px;line-height:8.30px;color:#1a1a1a;letter-spacing:0.344px;-webkit-text-stroke:0.2px currentColor;">(16)</div>
<div class="t" style="left:1201.61px;top:374.57px;font-size:8.30px;line-height:8.30px;color:#1a1a1a;letter-spacing:0.344px;-webkit-text-stroke:0.2px currentColor;">(16)</div>
<div class="t" style="left:1267.22px;top:374.57px;font-size:8.30px;line-height:8.30px;color:#1a1a1a;letter-spacing:0.344px;-webkit-text-stroke:0.2px currentColor;">(16)</div>
<div class="t" style="left:1332.83px;top:374.57px;font-size:8.30px;line-height:8.30px;color:#1a1a1a;letter-spacing:0.344px;-webkit-text-stroke:0.2px currentColor;">(16)</div>
<div class="t" style="left:44.30px;top:384.50px;font-size:8.50px;line-height:8.50px;color:#1a1a1a;font-style:italic;transform:scaleX(1.0116);transform-origin:0 0;-webkit-text-stroke:0.05px currentColor;">% of Revenue</div>
<div class="t" style="left:292.44px;top:384.87px;font-size:8.30px;line-height:8.30px;color:#1a1a1a;font-style:italic;letter-spacing:0.504px;-webkit-text-stroke:0.05px currentColor;">(30%)</div>
<div class="t" style="left:354.58px;top:384.87px;font-size:8.30px;line-height:8.30px;color:#1a1a1a;font-style:italic;letter-spacing:0.664px;-webkit-text-stroke:0.05px currentColor;">(7%)</div>
<div class="t" style="left:411.88px;top:384.87px;font-size:8.30px;line-height:8.30px;color:#1a1a1a;font-style:italic;letter-spacing:0.664px;-webkit-text-stroke:0.05px currentColor;">(2%)</div>
<div class="t" style="left:469.48px;top:384.87px;font-size:8.30px;line-height:8.30px;color:#1a1a1a;font-style:italic;letter-spacing:0.664px;-webkit-text-stroke:0.05px currentColor;">(1%)</div>
<div class="t" style="left:526.98px;top:384.87px;font-size:8.30px;line-height:8.30px;color:#1a1a1a;font-style:italic;letter-spacing:0.664px;-webkit-text-stroke:0.05px currentColor;">(0%)</div>
<div class="t" style="left:602.75px;top:384.87px;font-size:8.30px;line-height:8.30px;color:#1a1a1a;font-style:italic;letter-spacing:0.504px;-webkit-text-stroke:0.05px currentColor;">(63%)</div>
<div class="t" style="left:668.36px;top:384.87px;font-size:8.30px;line-height:8.30px;color:#1a1a1a;font-style:italic;letter-spacing:0.504px;-webkit-text-stroke:0.05px currentColor;">(52%)</div>
<div class="t" style="left:733.97px;top:384.87px;font-size:8.30px;line-height:8.30px;color:#1a1a1a;font-style:italic;letter-spacing:0.504px;-webkit-text-stroke:0.05px currentColor;">(45%)</div>
<div class="t" style="left:799.58px;top:384.87px;font-size:8.30px;line-height:8.30px;color:#1a1a1a;font-style:italic;letter-spacing:0.504px;-webkit-text-stroke:0.05px currentColor;">(40%)</div>
<div class="t" style="left:865.19px;top:384.87px;font-size:8.30px;line-height:8.30px;color:#1a1a1a;font-style:italic;letter-spacing:0.504px;-webkit-text-stroke:0.05px currentColor;">(35%)</div>
<div class="t" style="left:930.80px;top:384.87px;font-size:8.30px;line-height:8.30px;color:#1a1a1a;font-style:italic;letter-spacing:0.504px;-webkit-text-stroke:0.05px currentColor;">(32%)</div>
<div class="t" style="left:996.41px;top:384.87px;font-size:8.30px;line-height:8.30px;color:#1a1a1a;font-style:italic;letter-spacing:0.504px;-webkit-text-stroke:0.05px currentColor;">(29%)</div>
<div class="t" style="left:1062.02px;top:384.87px;font-size:8.30px;line-height:8.30px;color:#1a1a1a;font-style:italic;letter-spacing:0.504px;-webkit-text-stroke:0.05px currentColor;">(27%)</div>
<div class="t" style="left:1127.63px;top:384.87px;font-size:8.30px;line-height:8.30px;color:#1a1a1a;font-style:italic;letter-spacing:0.504px;-webkit-text-stroke:0.05px currentColor;">(25%)</div>
<div class="t" style="left:1193.24px;top:384.87px;font-size:8.30px;line-height:8.30px;color:#1a1a1a;font-style:italic;letter-spacing:0.504px;-webkit-text-stroke:0.05px currentColor;">(23%)</div>
<div class="t" style="left:1258.85px;top:384.87px;font-size:8.30px;line-height:8.30px;color:#1a1a1a;font-style:italic;letter-spacing:0.504px;-webkit-text-stroke:0.05px currentColor;">(21%)</div>
<div class="t" style="left:1324.46px;top:384.87px;font-size:8.30px;line-height:8.30px;color:#1a1a1a;font-style:italic;letter-spacing:0.504px;-webkit-text-stroke:0.05px currentColor;">(20%)</div>
<div style="position:absolute;left:33.70px;top:396.80px;width:514.70px;height:12.50px;background:#48afe3;"></div>
<div style="position:absolute;left:563.20px;top:396.80px;width:787.30px;height:12.50px;background:#48afe3;"></div>
<div class="t" style="left:40.80px;top:399.57px;font-size:10.20px;line-height:10.20px;color:#fff;font-weight:bold;transform:scaleX(1.0067);transform-origin:0 0;-webkit-text-stroke:0.2px currentColor;">EBITDA</div>
<div class="t" style="left:294.25px;top:399.37px;font-size:8.30px;line-height:8.30px;color:#fff;font-weight:bold;letter-spacing:0.744px;-webkit-text-stroke:0.2px currentColor;">(393)</div>
<div class="t" style="left:355.37px;top:399.37px;font-size:8.30px;line-height:8.30px;color:#fff;font-weight:bold;letter-spacing:0.692px;-webkit-text-stroke:0.2px currentColor;">871</div>
<div class="t" style="left:404.68px;top:399.37px;font-size:8.30px;line-height:8.30px;color:#fff;font-weight:bold;letter-spacing:0.612px;-webkit-text-stroke:0.2px currentColor;">5,542</div>
<div class="t" style="left:457.20px;top:399.37px;font-size:8.30px;line-height:8.30px;color:#fff;font-weight:bold;letter-spacing:0.582px;-webkit-text-stroke:0.2px currentColor;">16,879</div>
<div class="t" style="left:514.70px;top:399.37px;font-size:8.30px;line-height:8.30px;color:#fff;font-weight:bold;letter-spacing:0.582px;-webkit-text-stroke:0.2px currentColor;">39,895</div>
<div class="t" style="left:609.63px;top:399.37px;font-size:8.30px;line-height:8.30px;color:#fff;font-weight:bold;letter-spacing:0.839px;-webkit-text-stroke:0.2px currentColor;">(55)</div>
<div class="t" style="left:675.24px;top:399.37px;font-size:8.30px;line-height:8.30px;color:#fff;font-weight:bold;letter-spacing:0.839px;-webkit-text-stroke:0.2px currentColor;">(51)</div>
<div class="t" style="left:740.85px;top:399.37px;font-size:8.30px;line-height:8.30px;color:#fff;font-weight:bold;letter-spacing:0.839px;-webkit-text-stroke:0.2px currentColor;">(47)</div>
<div class="t" style="left:806.46px;top:399.37px;font-size:8.30px;line-height:8.30px;color:#fff;font-weight:bold;letter-spacing:0.839px;-webkit-text-stroke:0.2px currentColor;">(43)</div>
<div class="t" style="left:872.07px;top:399.37px;font-size:8.30px;line-height:8.30px;color:#fff;font-weight:bold;letter-spacing:0.839px;-webkit-text-stroke:0.2px currentColor;">(39)</div>
<div class="t" style="left:937.68px;top:399.37px;font-size:8.30px;line-height:8.30px;color:#fff;font-weight:bold;letter-spacing:0.839px;-webkit-text-stroke:0.2px currentColor;">(35)</div>
<div class="t" style="left:1003.29px;top:399.37px;font-size:8.30px;line-height:8.30px;color:#fff;font-weight:bold;letter-spacing:0.839px;-webkit-text-stroke:0.2px currentColor;">(31)</div>
<div class="t" style="left:1068.90px;top:399.37px;font-size:8.30px;line-height:8.30px;color:#fff;font-weight:bold;letter-spacing:0.839px;-webkit-text-stroke:0.2px currentColor;">(27)</div>
<div class="t" style="left:1134.51px;top:399.37px;font-size:8.30px;line-height:8.30px;color:#fff;font-weight:bold;letter-spacing:0.839px;-webkit-text-stroke:0.2px currentColor;">(23)</div>
<div class="t" style="left:1200.12px;top:399.37px;font-size:8.30px;line-height:8.30px;color:#fff;font-weight:bold;letter-spacing:0.839px;-webkit-text-stroke:0.2px currentColor;">(19)</div>
<div class="t" style="left:1265.73px;top:399.37px;font-size:8.30px;line-height:8.30px;color:#fff;font-weight:bold;letter-spacing:0.839px;-webkit-text-stroke:0.2px currentColor;">(15)</div>
<div class="t" style="left:1331.34px;top:399.37px;font-size:8.30px;line-height:8.30px;color:#fff;font-weight:bold;letter-spacing:0.991px;-webkit-text-stroke:0.2px currentColor;">(11)</div>
<div class="t" style="left:35.60px;top:410.60px;font-size:8.50px;line-height:8.50px;color:#1a1a1a;font-style:italic;transform:scaleX(1.0300);transform-origin:0 0;-webkit-text-stroke:0.05px currentColor;">EBITDA %</div>
<div class="t" style="left:292.44px;top:410.17px;font-size:8.30px;line-height:8.30px;color:#1a1a1a;font-style:italic;letter-spacing:0.504px;-webkit-text-stroke:0.05px currentColor;">(62%)</div>
<div class="t" style="left:352.95px;top:410.17px;font-size:8.30px;line-height:8.30px;color:#1a1a1a;font-style:italic;letter-spacing:0.517px;-webkit-text-stroke:0.05px currentColor;">31%</div>
<div class="t" style="left:410.25px;top:410.17px;font-size:8.30px;line-height:8.30px;color:#1a1a1a;font-style:italic;letter-spacing:0.517px;-webkit-text-stroke:0.05px currentColor;">61%</div>
<div class="t" style="left:467.85px;top:410.17px;font-size:8.30px;line-height:8.30px;color:#1a1a1a;font-style:italic;letter-spacing:0.517px;-webkit-text-stroke:0.05px currentColor;">73%</div>
<div class="t" style="left:525.35px;top:410.17px;font-size:8.30px;line-height:8.30px;color:#1a1a1a;font-style:italic;letter-spacing:0.517px;-webkit-text-stroke:0.05px currentColor;">79%</div>
<div class="t" style="left:598.11px;top:410.17px;font-size:8.30px;line-height:8.30px;color:#1a1a1a;font-style:italic;letter-spacing:0.408px;-webkit-text-stroke:0.05px currentColor;">(212%)</div>
<div class="t" style="left:663.72px;top:410.17px;font-size:8.30px;line-height:8.30px;color:#1a1a1a;font-style:italic;letter-spacing:0.408px;-webkit-text-stroke:0.05px currentColor;">(165%)</div>
<div class="t" style="left:729.33px;top:410.17px;font-size:8.30px;line-height:8.30px;color:#1a1a1a;font-style:italic;letter-spacing:0.408px;-webkit-text-stroke:0.05px currentColor;">(131%)</div>
<div class="t" style="left:794.94px;top:410.17px;font-size:8.30px;line-height:8.30px;color:#1a1a1a;font-style:italic;letter-spacing:0.408px;-webkit-text-stroke:0.05px currentColor;">(105%)</div>
<div class="t" style="left:865.19px;top:410.17px;font-size:8.30px;line-height:8.30px;color:#1a1a1a;font-style:italic;letter-spacing:0.504px;-webkit-text-stroke:0.05px currentColor;">(85%)</div>
<div class="t" style="left:930.80px;top:410.17px;font-size:8.30px;line-height:8.30px;color:#1a1a1a;font-style:italic;letter-spacing:0.504px;-webkit-text-stroke:0.05px currentColor;">(69%)</div>
<div class="t" style="left:996.41px;top:410.17px;font-size:8.30px;line-height:8.30px;color:#1a1a1a;font-style:italic;letter-spacing:0.504px;-webkit-text-stroke:0.05px currentColor;">(55%)</div>
<div class="t" style="left:1062.02px;top:410.17px;font-size:8.30px;line-height:8.30px;color:#1a1a1a;font-style:italic;letter-spacing:0.504px;-webkit-text-stroke:0.05px currentColor;">(44%)</div>
<div class="t" style="left:1127.63px;top:410.17px;font-size:8.30px;line-height:8.30px;color:#1a1a1a;font-style:italic;letter-spacing:0.504px;-webkit-text-stroke:0.05px currentColor;">(35%)</div>
<div class="t" style="left:1193.24px;top:410.17px;font-size:8.30px;line-height:8.30px;color:#1a1a1a;font-style:italic;letter-spacing:0.504px;-webkit-text-stroke:0.05px currentColor;">(27%)</div>
<div class="t" style="left:1258.85px;top:410.17px;font-size:8.30px;line-height:8.30px;color:#1a1a1a;font-style:italic;letter-spacing:0.504px;-webkit-text-stroke:0.05px currentColor;">(20%)</div>
<div class="t" style="left:1324.46px;top:410.17px;font-size:8.30px;line-height:8.30px;color:#1a1a1a;font-style:italic;letter-spacing:0.504px;-webkit-text-stroke:0.05px currentColor;">(13%)</div>
<div class="t" style="left:35.60px;top:422.37px;font-size:8.30px;line-height:8.30px;color:#1a1a1a;transform:scaleX(1.0252);transform-origin:0 0;-webkit-text-stroke:0.2px currentColor;">Depreciation &amp; Amortization</div>
<div class="t" style="left:300.81px;top:422.07px;font-size:8.30px;line-height:8.30px;color:#1a1a1a;letter-spacing:0.344px;-webkit-text-stroke:0.2px currentColor;">(25)</div>
<div class="t" style="left:358.31px;top:422.07px;font-size:8.30px;line-height:8.30px;color:#1a1a1a;letter-spacing:0.344px;-webkit-text-stroke:0.2px currentColor;">(38)</div>
<div class="t" style="left:415.61px;top:422.07px;font-size:8.30px;line-height:8.30px;color:#1a1a1a;letter-spacing:0.344px;-webkit-text-stroke:0.2px currentColor;">(38)</div>
<div class="t" style="left:473.21px;top:422.07px;font-size:8.30px;line-height:8.30px;color:#1a1a1a;letter-spacing:0.344px;-webkit-text-stroke:0.2px currentColor;">(38)</div>
<div class="t" style="left:530.71px;top:422.07px;font-size:8.30px;line-height:8.30px;color:#1a1a1a;letter-spacing:0.344px;-webkit-text-stroke:0.2px currentColor;">(38)</div>
<div class="t" style="left:615.76px;top:422.07px;font-size:8.30px;line-height:8.30px;color:#1a1a1a;letter-spacing:0.504px;-webkit-text-stroke:0.2px currentColor;">(0)</div>
<div class="t" style="left:681.37px;top:422.07px;font-size:8.30px;line-height:8.30px;color:#1a1a1a;letter-spacing:0.504px;-webkit-text-stroke:0.2px currentColor;">(1)</div>
<div class="t" style="left:746.98px;top:422.07px;font-size:8.30px;line-height:8.30px;color:#1a1a1a;letter-spacing:0.504px;-webkit-text-stroke:0.2px currentColor;">(1)</div>
<div class="t" style="left:812.59px;top:422.07px;font-size:8.30px;line-height:8.30px;color:#1a1a1a;letter-spacing:0.504px;-webkit-text-stroke:0.2px currentColor;">(2)</div>
<div class="t" style="left:878.20px;top:422.07px;font-size:8.30px;line-height:8.30px;color:#1a1a1a;letter-spacing:0.504px;-webkit-text-stroke:0.2px currentColor;">(2)</div>
<div class="t" style="left:943.81px;top:422.07px;font-size:8.30px;line-height:8.30px;color:#1a1a1a;letter-spacing:0.504px;-webkit-text-stroke:0.2px currentColor;">(2)</div>
<div class="t" style="left:1009.42px;top:422.07px;font-size:8.30px;line-height:8.30px;color:#1a1a1a;letter-spacing:0.504px;-webkit-text-stroke:0.2px currentColor;">(3)</div>
<div class="t" style="left:1075.03px;top:422.07px;font-size:8.30px;line-height:8.30px;color:#1a1a1a;letter-spacing:0.504px;-webkit-text-stroke:0.2px currentColor;">(3)</div>
<div class="t" style="left:1140.64px;top:422.07px;font-size:8.30px;line-height:8.30px;color:#1a1a1a;letter-spacing:0.504px;-webkit-text-stroke:0.2px currentColor;">(3)</div>
<div class="t" style="left:1206.25px;top:422.07px;font-size:8.30px;line-height:8.30px;color:#1a1a1a;letter-spacing:0.504px;-webkit-text-stroke:0.2px currentColor;">(3)</div>
<div class="t" style="left:1271.86px;top:422.07px;font-size:8.30px;line-height:8.30px;color:#1a1a1a;letter-spacing:0.504px;-webkit-text-stroke:0.2px currentColor;">(3)</div>
<div class="t" style="left:1337.47px;top:422.07px;font-size:8.30px;line-height:8.30px;color:#1a1a1a;letter-spacing:0.504px;-webkit-text-stroke:0.2px currentColor;">(3)</div>
<div class="t" style="left:35.60px;top:433.27px;font-size:8.30px;line-height:8.30px;color:#1a1a1a;transform:scaleX(0.9963);transform-origin:0 0;-webkit-text-stroke:0.2px currentColor;">EBIT</div>
<div class="t" style="left:296.17px;top:432.97px;font-size:8.30px;line-height:8.30px;color:#1a1a1a;letter-spacing:0.264px;-webkit-text-stroke:0.2px currentColor;">(419)</div>
<div class="t" style="left:356.68px;top:432.97px;font-size:8.30px;line-height:8.30px;color:#1a1a1a;letter-spacing:0.037px;-webkit-text-stroke:0.2px currentColor;">833</div>
<div class="t" style="left:406.68px;top:432.97px;font-size:8.30px;line-height:8.30px;color:#1a1a1a;letter-spacing:0.113px;-webkit-text-stroke:0.2px currentColor;">5,504</div>
<div class="t" style="left:459.63px;top:432.97px;font-size:8.30px;line-height:8.30px;color:#1a1a1a;letter-spacing:0.096px;-webkit-text-stroke:0.2px currentColor;">16,841</div>
<div class="t" style="left:517.13px;top:432.97px;font-size:8.30px;line-height:8.30px;color:#1a1a1a;letter-spacing:0.096px;-webkit-text-stroke:0.2px currentColor;">39,857</div>
<div class="t" style="left:611.12px;top:432.97px;font-size:8.30px;line-height:8.30px;color:#1a1a1a;letter-spacing:0.344px;-webkit-text-stroke:0.2px currentColor;">(55)</div>
<div class="t" style="left:676.73px;top:432.97px;font-size:8.30px;line-height:8.30px;color:#1a1a1a;letter-spacing:0.344px;-webkit-text-stroke:0.2px currentColor;">(51)</div>
<div class="t" style="left:742.34px;top:432.97px;font-size:8.30px;line-height:8.30px;color:#1a1a1a;letter-spacing:0.344px;-webkit-text-stroke:0.2px currentColor;">(48)</div>
<div class="t" style="left:807.95px;top:432.97px;font-size:8.30px;line-height:8.30px;color:#1a1a1a;letter-spacing:0.344px;-webkit-text-stroke:0.2px currentColor;">(44)</div>
<div class="t" style="left:873.56px;top:432.97px;font-size:8.30px;line-height:8.30px;color:#1a1a1a;letter-spacing:0.344px;-webkit-text-stroke:0.2px currentColor;">(41)</div>
<div class="t" style="left:939.17px;top:432.97px;font-size:8.30px;line-height:8.30px;color:#1a1a1a;letter-spacing:0.344px;-webkit-text-stroke:0.2px currentColor;">(37)</div>
<div class="t" style="left:1004.78px;top:432.97px;font-size:8.30px;line-height:8.30px;color:#1a1a1a;letter-spacing:0.344px;-webkit-text-stroke:0.2px currentColor;">(33)</div>
<div class="t" style="left:1070.39px;top:432.97px;font-size:8.30px;line-height:8.30px;color:#1a1a1a;letter-spacing:0.344px;-webkit-text-stroke:0.2px currentColor;">(30)</div>
<div class="t" style="left:1136.00px;top:432.97px;font-size:8.30px;line-height:8.30px;color:#1a1a1a;letter-spacing:0.344px;-webkit-text-stroke:0.2px currentColor;">(26)</div>
<div class="t" style="left:1201.61px;top:432.97px;font-size:8.30px;line-height:8.30px;color:#1a1a1a;letter-spacing:0.344px;-webkit-text-stroke:0.2px currentColor;">(22)</div>
<div class="t" style="left:1267.22px;top:432.97px;font-size:8.30px;line-height:8.30px;color:#1a1a1a;letter-spacing:0.344px;-webkit-text-stroke:0.2px currentColor;">(18)</div>
<div class="t" style="left:1332.83px;top:432.97px;font-size:8.30px;line-height:8.30px;color:#1a1a1a;letter-spacing:0.344px;-webkit-text-stroke:0.2px currentColor;">(14)</div>
<div class="t" style="left:35.60px;top:444.27px;font-size:8.30px;line-height:8.30px;color:#1a1a1a;transform:scaleX(1.0165);transform-origin:0 0;-webkit-text-stroke:0.2px currentColor;">Net Interest Expense</div>
<div class="t" style="left:300.81px;top:443.97px;font-size:8.30px;line-height:8.30px;color:#1a1a1a;letter-spacing:0.344px;-webkit-text-stroke:0.2px currentColor;">(18)</div>
<div class="t" style="left:358.31px;top:443.97px;font-size:8.30px;line-height:8.30px;color:#1a1a1a;letter-spacing:0.344px;-webkit-text-stroke:0.2px currentColor;">(17)</div>
<div class="t" style="left:415.61px;top:443.97px;font-size:8.30px;line-height:8.30px;color:#1a1a1a;letter-spacing:0.344px;-webkit-text-stroke:0.2px currentColor;">(14)</div>
<div class="t" style="left:473.21px;top:443.97px;font-size:8.30px;line-height:8.30px;color:#1a1a1a;letter-spacing:0.549px;-webkit-text-stroke:0.2px currentColor;">(11)</div>
<div class="t" style="left:535.35px;top:443.97px;font-size:8.30px;line-height:8.30px;color:#1a1a1a;letter-spacing:0.504px;-webkit-text-stroke:0.2px currentColor;">(7)</div>
<div class="t" style="left:615.76px;top:443.97px;font-size:8.30px;line-height:8.30px;color:#1a1a1a;letter-spacing:0.504px;-webkit-text-stroke:0.2px currentColor;">(1)</div>
<div class="t" style="left:681.37px;top:443.97px;font-size:8.30px;line-height:8.30px;color:#1a1a1a;letter-spacing:0.504px;-webkit-text-stroke:0.2px currentColor;">(1)</div>
<div class="t" style="left:746.98px;top:443.97px;font-size:8.30px;line-height:8.30px;color:#1a1a1a;letter-spacing:0.504px;-webkit-text-stroke:0.2px currentColor;">(2)</div>
<div class="t" style="left:812.59px;top:443.97px;font-size:8.30px;line-height:8.30px;color:#1a1a1a;letter-spacing:0.504px;-webkit-text-stroke:0.2px currentColor;">(2)</div>
<div class="t" style="left:878.20px;top:443.97px;font-size:8.30px;line-height:8.30px;color:#1a1a1a;letter-spacing:0.504px;-webkit-text-stroke:0.2px currentColor;">(2)</div>
<div class="t" style="left:943.81px;top:443.97px;font-size:8.30px;line-height:8.30px;color:#1a1a1a;letter-spacing:0.504px;-webkit-text-stroke:0.2px currentColor;">(2)</div>
<div class="t" style="left:1009.42px;top:443.97px;font-size:8.30px;line-height:8.30px;color:#1a1a1a;letter-spacing:0.504px;-webkit-text-stroke:0.2px currentColor;">(2)</div>
<div class="t" style="left:1075.03px;top:443.97px;font-size:8.30px;line-height:8.30px;color:#1a1a1a;letter-spacing:0.504px;-webkit-text-stroke:0.2px currentColor;">(2)</div>
<div class="t" style="left:1140.64px;top:443.97px;font-size:8.30px;line-height:8.30px;color:#1a1a1a;letter-spacing:0.504px;-webkit-text-stroke:0.2px currentColor;">(2)</div>
<div class="t" style="left:1206.25px;top:443.97px;font-size:8.30px;line-height:8.30px;color:#1a1a1a;letter-spacing:0.504px;-webkit-text-stroke:0.2px currentColor;">(2)</div>
<div class="t" style="left:1271.86px;top:443.97px;font-size:8.30px;line-height:8.30px;color:#1a1a1a;letter-spacing:0.504px;-webkit-text-stroke:0.2px currentColor;">(2)</div>
<div class="t" style="left:1337.47px;top:443.97px;font-size:8.30px;line-height:8.30px;color:#1a1a1a;letter-spacing:0.504px;-webkit-text-stroke:0.2px currentColor;">(2)</div>
<div class="t" style="left:35.60px;top:455.27px;font-size:8.30px;line-height:8.30px;color:#1a1a1a;transform:scaleX(1.0426);transform-origin:0 0;-webkit-text-stroke:0.2px currentColor;">Net Profit Before Tax</div>
<div class="t" style="left:296.17px;top:454.97px;font-size:8.30px;line-height:8.30px;color:#1a1a1a;letter-spacing:0.264px;-webkit-text-stroke:0.2px currentColor;">(437)</div>
<div class="t" style="left:356.68px;top:454.97px;font-size:8.30px;line-height:8.30px;color:#1a1a1a;letter-spacing:0.037px;-webkit-text-stroke:0.2px currentColor;">816</div>
<div class="t" style="left:406.68px;top:454.97px;font-size:8.30px;line-height:8.30px;color:#1a1a1a;letter-spacing:0.113px;-webkit-text-stroke:0.2px currentColor;">5,490</div>
<div class="t" style="left:459.63px;top:454.97px;font-size:8.30px;line-height:8.30px;color:#1a1a1a;letter-spacing:0.096px;-webkit-text-stroke:0.2px currentColor;">16,831</div>
<div class="t" style="left:517.13px;top:454.97px;font-size:8.30px;line-height:8.30px;color:#1a1a1a;letter-spacing:0.096px;-webkit-text-stroke:0.2px currentColor;">39,850</div>
<div class="t" style="left:611.12px;top:454.97px;font-size:8.30px;line-height:8.30px;color:#1a1a1a;letter-spacing:0.344px;-webkit-text-stroke:0.2px currentColor;">(56)</div>
<div class="t" style="left:676.73px;top:454.97px;font-size:8.30px;line-height:8.30px;color:#1a1a1a;letter-spacing:0.344px;-webkit-text-stroke:0.2px currentColor;">(52)</div>
<div class="t" style="left:742.34px;top:454.97px;font-size:8.30px;line-height:8.30px;color:#1a1a1a;letter-spacing:0.344px;-webkit-text-stroke:0.2px currentColor;">(50)</div>
<div class="t" style="left:807.95px;top:454.97px;font-size:8.30px;line-height:8.30px;color:#1a1a1a;letter-spacing:0.344px;-webkit-text-stroke:0.2px currentColor;">(46)</div>
<div class="t" style="left:873.56px;top:454.97px;font-size:8.30px;line-height:8.30px;color:#1a1a1a;letter-spacing:0.344px;-webkit-text-stroke:0.2px currentColor;">(42)</div>
<div class="t" style="left:939.17px;top:454.97px;font-size:8.30px;line-height:8.30px;color:#1a1a1a;letter-spacing:0.344px;-webkit-text-stroke:0.2px currentColor;">(39)</div>
<div class="t" style="left:1004.78px;top:454.97px;font-size:8.30px;line-height:8.30px;color:#1a1a1a;letter-spacing:0.344px;-webkit-text-stroke:0.2px currentColor;">(35)</div>
<div class="t" style="left:1070.39px;top:454.97px;font-size:8.30px;line-height:8.30px;color:#1a1a1a;letter-spacing:0.344px;-webkit-text-stroke:0.2px currentColor;">(31)</div>
<div class="t" style="left:1136.00px;top:454.97px;font-size:8.30px;line-height:8.30px;color:#1a1a1a;letter-spacing:0.344px;-webkit-text-stroke:0.2px currentColor;">(27)</div>
<div class="t" style="left:1201.61px;top:454.97px;font-size:8.30px;line-height:8.30px;color:#1a1a1a;letter-spacing:0.344px;-webkit-text-stroke:0.2px currentColor;">(23)</div>
<div class="t" style="left:1267.22px;top:454.97px;font-size:8.30px;line-height:8.30px;color:#1a1a1a;letter-spacing:0.344px;-webkit-text-stroke:0.2px currentColor;">(20)</div>
<div class="t" style="left:1332.83px;top:454.97px;font-size:8.30px;line-height:8.30px;color:#1a1a1a;letter-spacing:0.344px;-webkit-text-stroke:0.2px currentColor;">(16)</div>
<div class="t" style="left:35.60px;top:466.27px;font-size:8.30px;line-height:8.30px;color:#1a1a1a;transform:scaleX(1.0102);transform-origin:0 0;-webkit-text-stroke:0.2px currentColor;">Tax Expense</div>
<div class="t" style="left:309.54px;top:465.97px;font-size:8.30px;line-height:8.30px;color:#1a1a1a;-webkit-text-stroke:0.2px currentColor;">-</div>
<div class="t" style="left:353.67px;top:465.97px;font-size:8.30px;line-height:8.30px;color:#1a1a1a;letter-spacing:0.264px;-webkit-text-stroke:0.2px currentColor;">(204)</div>
<div class="t" style="left:403.66px;top:465.97px;font-size:8.30px;line-height:8.30px;color:#1a1a1a;letter-spacing:0.239px;-webkit-text-stroke:0.2px currentColor;">(1,372)</div>
<div class="t" style="left:461.26px;top:465.97px;font-size:8.30px;line-height:8.30px;color:#1a1a1a;letter-spacing:0.239px;-webkit-text-stroke:0.2px currentColor;">(4,208)</div>
<div class="t" style="left:518.76px;top:465.97px;font-size:8.30px;line-height:8.30px;color:#1a1a1a;letter-spacing:0.239px;-webkit-text-stroke:0.2px currentColor;">(9,963)</div>
<div class="t" style="left:619.85px;top:465.97px;font-size:8.30px;line-height:8.30px;color:#1a1a1a;-webkit-text-stroke:0.2px currentColor;">-</div>
<div class="t" style="left:685.46px;top:465.97px;font-size:8.30px;line-height:8.30px;color:#1a1a1a;-webkit-text-stroke:0.2px currentColor;">-</div>
<div class="t" style="left:751.07px;top:465.97px;font-size:8.30px;line-height:8.30px;color:#1a1a1a;-webkit-text-stroke:0.2px currentColor;">-</div>
<div class="t" style="left:816.68px;top:465.97px;font-size:8.30px;line-height:8.30px;color:#1a1a1a;-webkit-text-stroke:0.2px currentColor;">-</div>
<div class="t" style="left:882.29px;top:465.97px;font-size:8.30px;line-height:8.30px;color:#1a1a1a;-webkit-text-stroke:0.2px currentColor;">-</div>
<div class="t" style="left:947.90px;top:465.97px;font-size:8.30px;line-height:8.30px;color:#1a1a1a;-webkit-text-stroke:0.2px currentColor;">-</div>
<div class="t" style="left:1013.51px;top:465.97px;font-size:8.30px;line-height:8.30px;color:#1a1a1a;-webkit-text-stroke:0.2px currentColor;">-</div>
<div class="t" style="left:1079.12px;top:465.97px;font-size:8.30px;line-height:8.30px;color:#1a1a1a;-webkit-text-stroke:0.2px currentColor;">-</div>
<div class="t" style="left:1144.73px;top:465.97px;font-size:8.30px;line-height:8.30px;color:#1a1a1a;-webkit-text-stroke:0.2px currentColor;">-</div>
<div class="t" style="left:1210.34px;top:465.97px;font-size:8.30px;line-height:8.30px;color:#1a1a1a;-webkit-text-stroke:0.2px currentColor;">-</div>
<div class="t" style="left:1275.95px;top:465.97px;font-size:8.30px;line-height:8.30px;color:#1a1a1a;-webkit-text-stroke:0.2px currentColor;">-</div>
<div class="t" style="left:1341.56px;top:465.97px;font-size:8.30px;line-height:8.30px;color:#1a1a1a;-webkit-text-stroke:0.2px currentColor;">-</div>
<div style="position:absolute;left:33.70px;top:475.30px;width:514.70px;height:12.40px;background:#48afe3;"></div>
<div style="position:absolute;left:563.20px;top:475.30px;width:787.30px;height:12.40px;background:#48afe3;"></div>
<div class="t" style="left:40.80px;top:477.97px;font-size:10.20px;line-height:10.20px;color:#fff;font-weight:bold;transform:scaleX(1.0566);transform-origin:0 0;-webkit-text-stroke:0.2px currentColor;">Net Profit After Tax</div>
<div class="t" style="left:294.25px;top:477.77px;font-size:8.30px;line-height:8.30px;color:#fff;font-weight:bold;letter-spacing:0.744px;-webkit-text-stroke:0.2px currentColor;">(437)</div>
<div class="t" style="left:355.37px;top:477.77px;font-size:8.30px;line-height:8.30px;color:#fff;font-weight:bold;letter-spacing:0.692px;-webkit-text-stroke:0.2px currentColor;">612</div>
<div class="t" style="left:404.68px;top:477.77px;font-size:8.30px;line-height:8.30px;color:#fff;font-weight:bold;letter-spacing:0.727px;-webkit-text-stroke:0.2px currentColor;">4,117</div>
<div class="t" style="left:457.20px;top:477.77px;font-size:8.30px;line-height:8.30px;color:#fff;font-weight:bold;letter-spacing:0.582px;-webkit-text-stroke:0.2px currentColor;">12,623</div>
<div class="t" style="left:514.70px;top:477.77px;font-size:8.30px;line-height:8.30px;color:#fff;font-weight:bold;letter-spacing:0.582px;-webkit-text-stroke:0.2px currentColor;">29,888</div>
<div class="t" style="left:609.63px;top:477.77px;font-size:8.30px;line-height:8.30px;color:#fff;font-weight:bold;letter-spacing:0.839px;-webkit-text-stroke:0.2px currentColor;">(56)</div>
<div class="t" style="left:675.24px;top:477.77px;font-size:8.30px;line-height:8.30px;color:#fff;font-weight:bold;letter-spacing:0.839px;-webkit-text-stroke:0.2px currentColor;">(52)</div>
<div class="t" style="left:740.85px;top:477.77px;font-size:8.30px;line-height:8.30px;color:#fff;font-weight:bold;letter-spacing:0.839px;-webkit-text-stroke:0.2px currentColor;">(50)</div>
<div class="t" style="left:806.46px;top:477.77px;font-size:8.30px;line-height:8.30px;color:#fff;font-weight:bold;letter-spacing:0.839px;-webkit-text-stroke:0.2px currentColor;">(46)</div>
<div class="t" style="left:872.07px;top:477.77px;font-size:8.30px;line-height:8.30px;color:#fff;font-weight:bold;letter-spacing:0.839px;-webkit-text-stroke:0.2px currentColor;">(42)</div>
<div class="t" style="left:937.68px;top:477.77px;font-size:8.30px;line-height:8.30px;color:#fff;font-weight:bold;letter-spacing:0.839px;-webkit-text-stroke:0.2px currentColor;">(39)</div>
<div class="t" style="left:1003.29px;top:477.77px;font-size:8.30px;line-height:8.30px;color:#fff;font-weight:bold;letter-spacing:0.839px;-webkit-text-stroke:0.2px currentColor;">(35)</div>
<div class="t" style="left:1068.90px;top:477.77px;font-size:8.30px;line-height:8.30px;color:#fff;font-weight:bold;letter-spacing:0.839px;-webkit-text-stroke:0.2px currentColor;">(31)</div>
<div class="t" style="left:1134.51px;top:477.77px;font-size:8.30px;line-height:8.30px;color:#fff;font-weight:bold;letter-spacing:0.839px;-webkit-text-stroke:0.2px currentColor;">(27)</div>
<div class="t" style="left:1200.12px;top:477.77px;font-size:8.30px;line-height:8.30px;color:#fff;font-weight:bold;letter-spacing:0.839px;-webkit-text-stroke:0.2px currentColor;">(23)</div>
<div class="t" style="left:1265.73px;top:477.77px;font-size:8.30px;line-height:8.30px;color:#fff;font-weight:bold;letter-spacing:0.839px;-webkit-text-stroke:0.2px currentColor;">(20)</div>
<div class="t" style="left:1331.34px;top:477.77px;font-size:8.30px;line-height:8.30px;color:#fff;font-weight:bold;letter-spacing:0.839px;-webkit-text-stroke:0.2px currentColor;">(16)</div>
<div class="t" style="left:44.30px;top:489.20px;font-size:8.50px;line-height:8.50px;color:#1a1a1a;font-style:italic;transform:scaleX(1.0482);transform-origin:0 0;-webkit-text-stroke:0.05px currentColor;">Net Profit After Tax %</div>
<div class="t" style="left:292.44px;top:488.77px;font-size:8.30px;line-height:8.30px;color:#1a1a1a;font-style:italic;letter-spacing:0.504px;-webkit-text-stroke:0.05px currentColor;">(69%)</div>
<div class="t" style="left:352.95px;top:488.77px;font-size:8.30px;line-height:8.30px;color:#1a1a1a;font-style:italic;letter-spacing:0.517px;-webkit-text-stroke:0.05px currentColor;">22%</div>
<div class="t" style="left:410.25px;top:488.77px;font-size:8.30px;line-height:8.30px;color:#1a1a1a;font-style:italic;letter-spacing:0.517px;-webkit-text-stroke:0.05px currentColor;">46%</div>
<div class="t" style="left:467.85px;top:488.77px;font-size:8.30px;line-height:8.30px;color:#1a1a1a;font-style:italic;letter-spacing:0.517px;-webkit-text-stroke:0.05px currentColor;">55%</div>
<div class="t" style="left:525.35px;top:488.77px;font-size:8.30px;line-height:8.30px;color:#1a1a1a;font-style:italic;letter-spacing:0.517px;-webkit-text-stroke:0.05px currentColor;">59%</div>
<div class="t" style="left:598.11px;top:488.77px;font-size:8.30px;line-height:8.30px;color:#1a1a1a;font-style:italic;letter-spacing:0.408px;-webkit-text-stroke:0.05px currentColor;">(217%)</div>
<div class="t" style="left:663.72px;top:488.77px;font-size:8.30px;line-height:8.30px;color:#1a1a1a;font-style:italic;letter-spacing:0.408px;-webkit-text-stroke:0.05px currentColor;">(170%)</div>
<div class="t" style="left:729.33px;top:488.77px;font-size:8.30px;line-height:8.30px;color:#1a1a1a;font-style:italic;letter-spacing:0.408px;-webkit-text-stroke:0.05px currentColor;">(139%)</div>
<div class="t" style="left:794.94px;top:488.77px;font-size:8.30px;line-height:8.30px;color:#1a1a1a;font-style:italic;letter-spacing:0.531px;-webkit-text-stroke:0.05px currentColor;">(113%)</div>
<div class="t" style="left:865.19px;top:488.77px;font-size:8.30px;line-height:8.30px;color:#1a1a1a;font-style:italic;letter-spacing:0.504px;-webkit-text-stroke:0.05px currentColor;">(93%)</div>
<div class="t" style="left:930.80px;top:488.77px;font-size:8.30px;line-height:8.30px;color:#1a1a1a;font-style:italic;letter-spacing:0.504px;-webkit-text-stroke:0.05px currentColor;">(77%)</div>
<div class="t" style="left:996.41px;top:488.77px;font-size:8.30px;line-height:8.30px;color:#1a1a1a;font-style:italic;letter-spacing:0.504px;-webkit-text-stroke:0.05px currentColor;">(63%)</div>
<div class="t" style="left:1062.02px;top:488.77px;font-size:8.30px;line-height:8.30px;color:#1a1a1a;font-style:italic;letter-spacing:0.504px;-webkit-text-stroke:0.05px currentColor;">(51%)</div>
<div class="t" style="left:1127.63px;top:488.77px;font-size:8.30px;line-height:8.30px;color:#1a1a1a;font-style:italic;letter-spacing:0.504px;-webkit-text-stroke:0.05px currentColor;">(42%)</div>
<div class="t" style="left:1193.24px;top:488.77px;font-size:8.30px;line-height:8.30px;color:#1a1a1a;font-style:italic;letter-spacing:0.504px;-webkit-text-stroke:0.05px currentColor;">(33%)</div>
<div class="t" style="left:1258.85px;top:488.77px;font-size:8.30px;line-height:8.30px;color:#1a1a1a;font-style:italic;letter-spacing:0.504px;-webkit-text-stroke:0.05px currentColor;">(26%)</div>
<div class="t" style="left:1324.46px;top:488.77px;font-size:8.30px;line-height:8.30px;color:#1a1a1a;font-style:italic;letter-spacing:0.504px;-webkit-text-stroke:0.05px currentColor;">(19%)</div>
<div style="position:absolute;left:33.70px;top:509.80px;width:514.70px;height:17.40px;background:#4b4ed3;"></div>
<div style="position:absolute;left:563.20px;top:510.80px;width:787.30px;height:16.60px;background:#4b4ed3;"></div>
<div class="t" style="left:104.80px;top:511.72px;font-size:13.80px;line-height:13.80px;color:#fff;font-weight:bold;transform:scaleX(1.0711);transform-origin:0 0;">Income Statement ($&#x27;000) - 5 years to December 2030</div>
<div class="t" style="left:842.00px;top:511.72px;font-size:13.80px;line-height:13.80px;color:#fff;font-weight:bold;transform:scaleX(1.1012);transform-origin:0 0;">Income Statement ($&#x27;000) - 2026</div>
<div style="position:absolute;left:33.70px;top:747.10px;width:514.70px;height:18.00px;background:#4b4ed3;"></div>
<div style="position:absolute;left:563.20px;top:747.10px;width:787.30px;height:18.00px;background:#4b4ed3;"></div>
<div class="t" style="left:121.00px;top:750.02px;font-size:13.80px;line-height:13.80px;color:#fff;font-weight:bold;transform:scaleX(1.0520);transform-origin:0 0;">Balance Sheet ($&#x27;000) - 5 years to December 2030</div>
<div class="t" style="left:857.75px;top:750.02px;font-size:13.80px;line-height:13.80px;color:#fff;font-weight:bold;transform:scaleX(1.0771);transform-origin:0 0;">Balance Sheet ($&#x27;000) - 2026</div>
<div style="position:absolute;left:33.70px;top:768.10px;width:514.70px;height:9.80px;background:#6c6de6;"></div>
<div style="position:absolute;left:563.20px;top:768.10px;width:787.30px;height:9.80px;background:#6c6de6;"></div>
<div class="t" style="left:39.70px;top:768.47px;font-size:9.60px;line-height:9.60px;color:#fff;font-weight:bold;transform:scaleX(0.9245);transform-origin:0 0;">Year Ending</div>
<div style="position:absolute;left:260.00px;top:768.10px;width:1.00px;height:9.80px;background:#ffffff;"></div>
<div class="t" style="left:279.63px;top:769.07px;font-size:8.90px;line-height:8.90px;color:#fff;font-weight:bold;transform:scaleX(0.9972);transform-origin:0 0;">2026</div>
<div style="position:absolute;left:318.00px;top:768.10px;width:1.00px;height:9.80px;background:#ffffff;"></div>
<div class="t" style="left:337.38px;top:769.07px;font-size:8.90px;line-height:8.90px;color:#fff;font-weight:bold;transform:scaleX(0.9972);transform-origin:0 0;">2027</div>
<div style="position:absolute;left:375.50px;top:768.10px;width:1.00px;height:9.80px;background:#ffffff;"></div>
<div class="t" style="left:394.78px;top:769.07px;font-size:8.90px;line-height:8.90px;color:#fff;font-weight:bold;transform:scaleX(0.9972);transform-origin:0 0;">2028</div>
<div style="position:absolute;left:432.80px;top:768.10px;width:1.00px;height:9.80px;background:#ffffff;"></div>
<div class="t" style="left:452.23px;top:769.07px;font-size:8.90px;line-height:8.90px;color:#fff;font-weight:bold;transform:scaleX(0.9972);transform-origin:0 0;">2029</div>
<div style="position:absolute;left:490.40px;top:768.10px;width:1.00px;height:9.80px;background:#ffffff;"></div>
<div class="t" style="left:509.78px;top:769.07px;font-size:8.90px;line-height:8.90px;color:#fff;font-weight:bold;transform:scaleX(0.9972);transform-origin:0 0;">2030</div>
<div class="t" style="left:588.40px;top:769.07px;font-size:8.90px;line-height:8.90px;color:#fff;font-weight:bold;transform:scaleX(0.9904);transform-origin:0 0;">Jan</div>
<div style="position:absolute;left:628.31px;top:768.10px;width:1.00px;height:9.80px;background:#ffffff;"></div>
<div class="t" style="left:653.76px;top:769.07px;font-size:8.90px;line-height:8.90px;color:#fff;font-weight:bold;transform:scaleX(0.9919);transform-origin:0 0;">Feb</div>
<div style="position:absolute;left:693.92px;top:768.10px;width:1.00px;height:9.80px;background:#ffffff;"></div>
<div class="t" style="left:719.37px;top:769.07px;font-size:8.90px;line-height:8.90px;color:#fff;font-weight:bold;transform:scaleX(0.9921);transform-origin:0 0;">Mar</div>
<div style="position:absolute;left:759.53px;top:768.10px;width:1.00px;height:9.80px;background:#ffffff;"></div>
<div class="t" style="left:785.24px;top:769.07px;font-size:8.90px;line-height:8.90px;color:#fff;font-weight:bold;transform:scaleX(0.9927);transform-origin:0 0;">Apr</div>
<div style="position:absolute;left:825.14px;top:768.10px;width:1.00px;height:9.80px;background:#ffffff;"></div>
<div class="t" style="left:849.81px;top:769.07px;font-size:8.90px;line-height:8.90px;color:#fff;font-weight:bold;transform:scaleX(0.9976);transform-origin:0 0;">May</div>
<div style="position:absolute;left:890.75px;top:768.10px;width:1.00px;height:9.80px;background:#ffffff;"></div>
<div class="t" style="left:916.20px;top:769.07px;font-size:8.90px;line-height:8.90px;color:#fff;font-weight:bold;transform:scaleX(0.9919);transform-origin:0 0;">Jun</div>
<div style="position:absolute;left:956.36px;top:768.10px;width:1.00px;height:9.80px;background:#ffffff;"></div>
<div class="t" style="left:983.36px;top:769.07px;font-size:8.90px;line-height:8.90px;color:#fff;font-weight:bold;transform:scaleX(0.9813);transform-origin:0 0;">Jul</div>
<div style="position:absolute;left:1021.97px;top:768.10px;width:1.00px;height:9.80px;background:#ffffff;"></div>
<div class="t" style="left:1046.65px;top:769.07px;font-size:8.90px;line-height:8.90px;color:#fff;font-weight:bold;transform:scaleX(0.9968);transform-origin:0 0;">Aug</div>
<div style="position:absolute;left:1087.58px;top:768.10px;width:1.00px;height:9.80px;background:#ffffff;"></div>
<div class="t" style="left:1112.77px;top:769.07px;font-size:8.90px;line-height:8.90px;color:#fff;font-weight:bold;transform:scaleX(0.9941);transform-origin:0 0;">Sep</div>
<div style="position:absolute;left:1153.19px;top:768.10px;width:1.00px;height:9.80px;background:#ffffff;"></div>
<div class="t" style="left:1179.15px;top:769.07px;font-size:8.90px;line-height:8.90px;color:#fff;font-weight:bold;transform:scaleX(0.9909);transform-origin:0 0;">Oct</div>
<div style="position:absolute;left:1218.80px;top:768.10px;width:1.00px;height:9.80px;background:#ffffff;"></div>
<div class="t" style="left:1243.73px;top:769.07px;font-size:8.90px;line-height:8.90px;color:#fff;font-weight:bold;transform:scaleX(0.9956);transform-origin:0 0;">Nov</div>
<div style="position:absolute;left:1284.41px;top:768.10px;width:1.00px;height:9.80px;background:#ffffff;"></div>
<div class="t" style="left:1309.60px;top:769.07px;font-size:8.90px;line-height:8.90px;color:#fff;font-weight:bold;transform:scaleX(0.9943);transform-origin:0 0;">Dec</div>
<div class="t" style="left:35.60px;top:782.27px;font-size:8.30px;line-height:8.30px;color:#1a1a1a;transform:scaleX(1.0193);transform-origin:0 0;-webkit-text-stroke:0.2px currentColor;">Current Assets</div>
<div class="t" style="left:299.18px;top:781.97px;font-size:8.30px;line-height:8.30px;color:#1a1a1a;letter-spacing:0.037px;-webkit-text-stroke:0.2px currentColor;">236</div>
<div class="t" style="left:356.68px;top:781.97px;font-size:8.30px;line-height:8.30px;color:#1a1a1a;letter-spacing:0.037px;-webkit-text-stroke:0.2px currentColor;">879</div>
<div class="t" style="left:406.68px;top:781.97px;font-size:8.30px;line-height:8.30px;color:#1a1a1a;letter-spacing:0.113px;-webkit-text-stroke:0.2px currentColor;">5,065</div>
<div class="t" style="left:459.63px;top:781.97px;font-size:8.30px;line-height:8.30px;color:#1a1a1a;letter-spacing:0.096px;-webkit-text-stroke:0.2px currentColor;">17,807</div>
<div class="t" style="left:517.13px;top:781.97px;font-size:8.30px;line-height:8.30px;color:#1a1a1a;letter-spacing:0.096px;-webkit-text-stroke:0.2px currentColor;">47,894</div>
<div class="t" style="left:609.49px;top:781.97px;font-size:8.30px;line-height:8.30px;color:#1a1a1a;letter-spacing:0.037px;-webkit-text-stroke:0.2px currentColor;">853</div>
<div class="t" style="left:675.10px;top:781.97px;font-size:8.30px;line-height:8.30px;color:#1a1a1a;letter-spacing:0.037px;-webkit-text-stroke:0.2px currentColor;">766</div>
<div class="t" style="left:740.71px;top:781.97px;font-size:8.30px;line-height:8.30px;color:#1a1a1a;letter-spacing:0.037px;-webkit-text-stroke:0.2px currentColor;">747</div>
<div class="t" style="left:806.32px;top:781.97px;font-size:8.30px;line-height:8.30px;color:#1a1a1a;letter-spacing:0.037px;-webkit-text-stroke:0.2px currentColor;">655</div>
<div class="t" style="left:871.93px;top:781.97px;font-size:8.30px;line-height:8.30px;color:#1a1a1a;letter-spacing:0.037px;-webkit-text-stroke:0.2px currentColor;">554</div>
<div class="t" style="left:937.54px;top:781.97px;font-size:8.30px;line-height:8.30px;color:#1a1a1a;letter-spacing:0.037px;-webkit-text-stroke:0.2px currentColor;">469</div>
<div class="t" style="left:1003.15px;top:781.97px;font-size:8.30px;line-height:8.30px;color:#1a1a1a;letter-spacing:0.037px;-webkit-text-stroke:0.2px currentColor;">413</div>
<div class="t" style="left:1068.76px;top:781.97px;font-size:8.30px;line-height:8.30px;color:#1a1a1a;letter-spacing:0.037px;-webkit-text-stroke:0.2px currentColor;">363</div>
<div class="t" style="left:1134.37px;top:781.97px;font-size:8.30px;line-height:8.30px;color:#1a1a1a;letter-spacing:0.037px;-webkit-text-stroke:0.2px currentColor;">325</div>
<div class="t" style="left:1199.98px;top:781.97px;font-size:8.30px;line-height:8.30px;color:#1a1a1a;letter-spacing:0.037px;-webkit-text-stroke:0.2px currentColor;">302</div>
<div class="t" style="left:1265.59px;top:781.97px;font-size:8.30px;line-height:8.30px;color:#1a1a1a;letter-spacing:0.037px;-webkit-text-stroke:0.2px currentColor;">251</div>
<div class="t" style="left:1331.20px;top:781.97px;font-size:8.30px;line-height:8.30px;color:#1a1a1a;letter-spacing:0.037px;-webkit-text-stroke:0.2px currentColor;">236</div>
<div class="t" style="left:35.60px;top:793.47px;font-size:8.30px;line-height:8.30px;color:#1a1a1a;transform:scaleX(1.0080);transform-origin:0 0;-webkit-text-stroke:0.2px currentColor;">Non-Current Assets</div>
<div class="t" style="left:299.18px;top:793.17px;font-size:8.30px;line-height:8.30px;color:#1a1a1a;letter-spacing:0.037px;-webkit-text-stroke:0.2px currentColor;">355</div>
<div class="t" style="left:356.68px;top:793.17px;font-size:8.30px;line-height:8.30px;color:#1a1a1a;letter-spacing:0.037px;-webkit-text-stroke:0.2px currentColor;">317</div>
<div class="t" style="left:413.98px;top:793.17px;font-size:8.30px;line-height:8.30px;color:#1a1a1a;letter-spacing:0.037px;-webkit-text-stroke:0.2px currentColor;">279</div>
<div class="t" style="left:471.58px;top:793.17px;font-size:8.30px;line-height:8.30px;color:#1a1a1a;letter-spacing:0.037px;-webkit-text-stroke:0.2px currentColor;">241</div>
<div class="t" style="left:529.08px;top:793.17px;font-size:8.30px;line-height:8.30px;color:#1a1a1a;letter-spacing:0.037px;-webkit-text-stroke:0.2px currentColor;">203</div>
<div class="t" style="left:614.13px;top:793.17px;font-size:8.30px;line-height:8.30px;color:#1a1a1a;letter-spacing:0.050px;-webkit-text-stroke:0.2px currentColor;">30</div>
<div class="t" style="left:679.74px;top:793.17px;font-size:8.30px;line-height:8.30px;color:#1a1a1a;letter-spacing:0.050px;-webkit-text-stroke:0.2px currentColor;">69</div>
<div class="t" style="left:740.71px;top:793.17px;font-size:8.30px;line-height:8.30px;color:#1a1a1a;letter-spacing:0.037px;-webkit-text-stroke:0.2px currentColor;">133</div>
<div class="t" style="left:806.32px;top:793.17px;font-size:8.30px;line-height:8.30px;color:#1a1a1a;letter-spacing:0.037px;-webkit-text-stroke:0.2px currentColor;">180</div>
<div class="t" style="left:871.93px;top:793.17px;font-size:8.30px;line-height:8.30px;color:#1a1a1a;letter-spacing:0.037px;-webkit-text-stroke:0.2px currentColor;">236</div>
<div class="t" style="left:937.54px;top:793.17px;font-size:8.30px;line-height:8.30px;color:#1a1a1a;letter-spacing:0.037px;-webkit-text-stroke:0.2px currentColor;">282</div>
<div class="t" style="left:1003.15px;top:793.17px;font-size:8.30px;line-height:8.30px;color:#1a1a1a;letter-spacing:0.037px;-webkit-text-stroke:0.2px currentColor;">300</div>
<div class="t" style="left:1068.76px;top:793.17px;font-size:8.30px;line-height:8.30px;color:#1a1a1a;letter-spacing:0.037px;-webkit-text-stroke:0.2px currentColor;">318</div>
<div class="t" style="left:1134.37px;top:793.17px;font-size:8.30px;line-height:8.30px;color:#1a1a1a;letter-spacing:0.037px;-webkit-text-stroke:0.2px currentColor;">329</div>
<div class="t" style="left:1199.98px;top:793.17px;font-size:8.30px;line-height:8.30px;color:#1a1a1a;letter-spacing:0.037px;-webkit-text-stroke:0.2px currentColor;">326</div>
<div class="t" style="left:1265.59px;top:793.17px;font-size:8.30px;line-height:8.30px;color:#1a1a1a;letter-spacing:0.037px;-webkit-text-stroke:0.2px currentColor;">358</div>
<div class="t" style="left:1331.20px;top:793.17px;font-size:8.30px;line-height:8.30px;color:#1a1a1a;letter-spacing:0.037px;-webkit-text-stroke:0.2px currentColor;">355</div>
<svg style="left:157px;top:539px" width="22.19999999999999" height="6" viewBox="0 0 22.19999999999999 6"><path d="M0 3 H22.19999999999999" stroke="#f07a6e" stroke-width="1.6"/><circle cx="11.099999999999994" cy="3" r="1.6" fill="#f07a6e"/></svg>
<div class="t" style="left:181.20px;top:537.65px;font-size:8.80px;line-height:8.80px;color:#111;font-weight:bold;letter-spacing:0.169px;">Revenue</div>
<svg style="left:234.2px;top:539px" width="22.19999999999999" height="6" viewBox="0 0 22.19999999999999 6"><path d="M0 3 H22.19999999999999" stroke="#5b9e3b" stroke-width="1.6"/><circle cx="11.099999999999994" cy="3" r="1.6" fill="#5b9e3b"/></svg>
<div class="t" style="left:261.20px;top:537.65px;font-size:8.80px;line-height:8.80px;color:#111;font-weight:bold;letter-spacing:0.009px;">EBITDA</div>
<svg style="left:312.2px;top:539px" width="22.100000000000023" height="6" viewBox="0 0 22.100000000000023 6"><path d="M0 3 H22.100000000000023" stroke="#4a4edb" stroke-width="1.6"/><circle cx="11.050000000000011" cy="3" r="1.6" fill="#4a4edb"/></svg>
<div class="t" style="left:339.00px;top:537.65px;font-size:8.80px;line-height:8.80px;color:#111;font-weight:bold;letter-spacing:0.326px;">Net Profit After Tax</div>
<svg style="left:823.4px;top:539px" width="20.600000000000023" height="6" viewBox="0 0 20.600000000000023 6"><path d="M0 3 H20.600000000000023" stroke="#f07a6e" stroke-width="1.6"/><circle cx="10.300000000000011" cy="3" r="1.6" fill="#f07a6e"/></svg>
<div class="t" style="left:847.00px;top:537.65px;font-size:8.80px;line-height:8.80px;color:#111;font-weight:bold;letter-spacing:0.286px;">Revenue</div>
<svg style="left:900px;top:539px" width="23.700000000000045" height="6" viewBox="0 0 23.700000000000045 6"><path d="M0 3 H23.700000000000045" stroke="#5b9e3b" stroke-width="1.6"/><circle cx="11.850000000000023" cy="3" r="1.6" fill="#5b9e3b"/></svg>
<div class="t" style="left:925.50px;top:537.65px;font-size:8.80px;line-height:8.80px;color:#111;font-weight:bold;letter-spacing:0.549px;">EBITDA</div>
<svg style="left:978.6px;top:539px" width="20.0" height="6" viewBox="0 0 20.0 6"><path d="M0 3 H20.0" stroke="#4a4edb" stroke-width="1.6"/><circle cx="10.0" cy="3" r="1.6" fill="#4a4edb"/></svg>
<div class="t" style="left:1004.50px;top:537.65px;font-size:8.80px;line-height:8.80px;color:#111;font-weight:bold;letter-spacing:0.368px;">Net Profit After Tax</div>
<svg style="left:33.4px;top:555.3px" width="466.3" height="161.60000000000002" viewBox="0 0 466.3 161.60000000000002"><path d="M93.26 0 V161.60000000000002" stroke="#9dd3f2" stroke-width="1"/><path d="M186.52 0 V161.60000000000002" stroke="#9dd3f2" stroke-width="1"/><path d="M279.78 0 V161.60000000000002" stroke="#9dd3f2" stroke-width="1"/><path d="M373.04 0 V161.60000000000002" stroke="#9dd3f2" stroke-width="1"/><path d="M0 23.09 H466.3" stroke="#9dd3f2" stroke-width="1"/><path d="M0 46.17 H466.3" stroke="#9dd3f2" stroke-width="1"/><path d="M0 69.26 H466.3" stroke="#9dd3f2" stroke-width="1"/><path d="M0 92.34 H466.3" stroke="#9dd3f2" stroke-width="1"/><path d="M0 115.43 H466.3" stroke="#9dd3f2" stroke-width="1"/><path d="M0 138.51 H466.3" stroke="#a9a9e6" stroke-width="1"/><rect x="0.5" y="0.5" width="465.3" height="160.60000000000002" stroke="#62b8ea" stroke-width="1" fill="none"/><polyline points="46.63,137.04 139.89,132.11 233.15,117.69 326.41,85.12 419.67,21.77" stroke="#f07a6e" stroke-width="1.9" fill="none" stroke-linejoin="round"/><circle cx="46.63" cy="137.04" r="2.7" fill="#f07a6e"/><circle cx="139.89" cy="132.11" r="2.7" fill="#f07a6e"/><circle cx="233.15" cy="117.69" r="2.7" fill="#f07a6e"/><circle cx="326.41" cy="85.12" r="2.7" fill="#f07a6e"/><circle cx="419.67" cy="21.77" r="2.7" fill="#f07a6e"/><polyline points="46.63,139.42 139.89,136.50 233.15,125.72 326.41,99.55 419.67,46.41" stroke="#5b9e3b" stroke-width="1.9" fill="none" stroke-linejoin="round"/><circle cx="46.63" cy="139.42" r="2.7" fill="#5b9e3b"/><circle cx="139.89" cy="136.50" r="2.7" fill="#5b9e3b"/><circle cx="233.15" cy="125.72" r="2.7" fill="#5b9e3b"/><circle cx="326.41" cy="99.55" r="2.7" fill="#5b9e3b"/><circle cx="419.67" cy="46.41" r="2.7" fill="#5b9e3b"/><polyline points="46.63,139.52 139.89,137.10 233.15,129.01 326.41,109.37 419.67,69.52" stroke="#4a4edb" stroke-width="1.9" fill="none" stroke-linejoin="round"/><circle cx="46.63" cy="139.52" r="2.7" fill="#4a4edb"/><circle cx="139.89" cy="137.10" r="2.7" fill="#4a4edb"/><circle cx="233.15" cy="129.01" r="2.7" fill="#4a4edb"/><circle cx="326.41" cy="109.37" r="2.7" fill="#4a4edb"/><circle cx="419.67" cy="69.52" r="2.7" fill="#4a4edb"/></svg>
<svg style="left:562.7px;top:555.3px" width="755.5" height="162.0" viewBox="0 0 755.5 162.0"><path d="M62.96 0 V162.0" stroke="#9dd3f2" stroke-width="1"/><path d="M125.92 0 V162.0" stroke="#9dd3f2" stroke-width="1"/><path d="M188.88 0 V162.0" stroke="#9dd3f2" stroke-width="1"/><path d="M251.83 0 V162.0" stroke="#9dd3f2" stroke-width="1"/><path d="M314.79 0 V162.0" stroke="#9dd3f2" stroke-width="1"/><path d="M377.75 0 V162.0" stroke="#9dd3f2" stroke-width="1"/><path d="M440.71 0 V162.0" stroke="#9dd3f2" stroke-width="1"/><path d="M503.67 0 V162.0" stroke="#9dd3f2" stroke-width="1"/><path d="M566.62 0 V162.0" stroke="#9dd3f2" stroke-width="1"/><path d="M629.58 0 V162.0" stroke="#9dd3f2" stroke-width="1"/><path d="M692.54 0 V162.0" stroke="#9dd3f2" stroke-width="1"/><path d="M0 18.00 H755.5" stroke="#9dd3f2" stroke-width="1"/><path d="M0 36.00 H755.5" stroke="#9dd3f2" stroke-width="1"/><path d="M0 54.00 H755.5" stroke="#9dd3f2" stroke-width="1"/><path d="M0 72.00 H755.5" stroke="#9dd3f2" stroke-width="1"/><path d="M0 90.00 H755.5" stroke="#9dd3f2" stroke-width="1"/><path d="M0 108.00 H755.5" stroke="#9dd3f2" stroke-width="1"/><path d="M0 126.00 H755.5" stroke="#9dd3f2" stroke-width="1"/><path d="M0 144.00 H755.5" stroke="#9dd3f2" stroke-width="1"/><rect x="0.5" y="0.5" width="754.5" height="161.0" stroke="#62b8ea" stroke-width="1" fill="none"/><polyline points="31.48,66.60 94.44,62.10 157.40,57.60 220.35,53.10 283.31,48.60 346.27,44.10 409.23,39.60 472.19,35.10 535.15,30.60 598.10,26.10 661.06,21.60 724.02,17.10" stroke="#f07a6e" stroke-width="1.9" fill="none" stroke-linejoin="round"/><circle cx="31.48" cy="66.60" r="2.7" fill="#f07a6e"/><circle cx="94.44" cy="62.10" r="2.7" fill="#f07a6e"/><circle cx="157.40" cy="57.60" r="2.7" fill="#f07a6e"/><circle cx="220.35" cy="53.10" r="2.7" fill="#f07a6e"/><circle cx="283.31" cy="48.60" r="2.7" fill="#f07a6e"/><circle cx="346.27" cy="44.10" r="2.7" fill="#f07a6e"/><circle cx="409.23" cy="39.60" r="2.7" fill="#f07a6e"/><circle cx="472.19" cy="35.10" r="2.7" fill="#f07a6e"/><circle cx="535.15" cy="30.60" r="2.7" fill="#f07a6e"/><circle cx="598.10" cy="26.10" r="2.7" fill="#f07a6e"/><circle cx="661.06" cy="21.60" r="2.7" fill="#f07a6e"/><circle cx="724.02" cy="17.10" r="2.7" fill="#f07a6e"/><polyline points="31.48,139.50 94.44,135.90 157.40,132.30 220.35,128.70 283.31,125.10 346.27,121.50 409.23,117.90 472.19,114.30 535.15,110.70 598.10,107.10 661.06,103.50 724.02,99.90" stroke="#5b9e3b" stroke-width="1.9" fill="none" stroke-linejoin="round"/><circle cx="31.48" cy="139.50" r="2.7" fill="#5b9e3b"/><circle cx="94.44" cy="135.90" r="2.7" fill="#5b9e3b"/><circle cx="157.40" cy="132.30" r="2.7" fill="#5b9e3b"/><circle cx="220.35" cy="128.70" r="2.7" fill="#5b9e3b"/><circle cx="283.31" cy="125.10" r="2.7" fill="#5b9e3b"/><circle cx="346.27" cy="121.50" r="2.7" fill="#5b9e3b"/><circle cx="409.23" cy="117.90" r="2.7" fill="#5b9e3b"/><circle cx="472.19" cy="114.30" r="2.7" fill="#5b9e3b"/><circle cx="535.15" cy="110.70" r="2.7" fill="#5b9e3b"/><circle cx="598.10" cy="107.10" r="2.7" fill="#5b9e3b"/><circle cx="661.06" cy="103.50" r="2.7" fill="#5b9e3b"/><circle cx="724.02" cy="99.90" r="2.7" fill="#5b9e3b"/><polyline points="31.48,140.40 94.44,136.80 157.40,135.00 220.35,131.40 283.31,127.80 346.27,125.10 409.23,121.50 472.19,117.90 535.15,114.30 598.10,110.70 661.06,108.00 724.02,104.40" stroke="#4a4edb" stroke-width="1.9" fill="none" stroke-linejoin="round"/><circle cx="31.48" cy="140.40" r="2.7" fill="#4a4edb"/><circle cx="94.44" cy="136.80" r="2.7" fill="#4a4edb"/><circle cx="157.40" cy="135.00" r="2.7" fill="#4a4edb"/><circle cx="220.35" cy="131.40" r="2.7" fill="#4a4edb"/><circle cx="283.31" cy="127.80" r="2.7" fill="#4a4edb"/><circle cx="346.27" cy="125.10" r="2.7" fill="#4a4edb"/><circle cx="409.23" cy="121.50" r="2.7" fill="#4a4edb"/><circle cx="472.19" cy="117.90" r="2.7" fill="#4a4edb"/><circle cx="535.15" cy="114.30" r="2.7" fill="#4a4edb"/><circle cx="598.10" cy="110.70" r="2.7" fill="#4a4edb"/><circle cx="661.06" cy="108.00" r="2.7" fill="#4a4edb"/><circle cx="724.02" cy="104.40" r="2.7" fill="#4a4edb"/></svg>
<div class="t" style="left:509.40px;top:551.35px;font-size:8.80px;line-height:8.80px;color:#111;font-weight:bold;letter-spacing:0.857px;">60,000</div>
<div class="t" style="left:509.40px;top:574.44px;font-size:8.80px;line-height:8.80px;color:#111;font-weight:bold;letter-spacing:0.857px;">50,000</div>
<div class="t" style="left:509.40px;top:597.52px;font-size:8.80px;line-height:8.80px;color:#111;font-weight:bold;letter-spacing:0.857px;">40,000</div>
<div class="t" style="left:509.40px;top:620.61px;font-size:8.80px;line-height:8.80px;color:#111;font-weight:bold;letter-spacing:0.857px;">30,000</div>
<div class="t" style="left:509.40px;top:643.69px;font-size:8.80px;line-height:8.80px;color:#111;font-weight:bold;letter-spacing:0.857px;">20,000</div>
<div class="t" style="left:509.40px;top:666.78px;font-size:8.80px;line-height:8.80px;color:#111;font-weight:bold;letter-spacing:0.857px;">10,000</div>
<div class="t" style="left:510.20px;top:689.87px;font-size:8.80px;line-height:8.80px;color:#111;font-weight:bold;">-</div>
<div class="t" style="left:507.00px;top:712.95px;font-size:8.80px;line-height:8.80px;color:#111;font-weight:bold;letter-spacing:0.946px;">(10,000)</div>
<div class="t" style="left:69.03px;top:724.35px;font-size:8.80px;line-height:8.80px;color:#111;font-weight:bold;letter-spacing:0.808px;">2026</div>
<div class="t" style="left:162.29px;top:724.35px;font-size:8.80px;line-height:8.80px;color:#111;font-weight:bold;letter-spacing:0.808px;">2027</div>
<div class="t" style="left:255.55px;top:724.35px;font-size:8.80px;line-height:8.80px;color:#111;font-weight:bold;letter-spacing:0.808px;">2028</div>
<div class="t" style="left:348.81px;top:724.35px;font-size:8.80px;line-height:8.80px;color:#111;font-weight:bold;letter-spacing:0.808px;">2029</div>
<div class="t" style="left:442.07px;top:724.35px;font-size:8.80px;line-height:8.80px;color:#111;font-weight:bold;letter-spacing:0.808px;">2030</div>
<div class="t" style="left:1329.30px;top:551.35px;font-size:8.80px;line-height:8.80px;color:#111;font-weight:bold;letter-spacing:0.659px;">100</div>
<div class="t" style="left:1329.30px;top:569.35px;font-size:8.80px;line-height:8.80px;color:#111;font-weight:bold;letter-spacing:1.011px;">80</div>
<div class="t" style="left:1329.30px;top:587.35px;font-size:8.80px;line-height:8.80px;color:#111;font-weight:bold;letter-spacing:1.011px;">60</div>
<div class="t" style="left:1329.30px;top:605.35px;font-size:8.80px;line-height:8.80px;color:#111;font-weight:bold;letter-spacing:1.011px;">40</div>
<div class="t" style="left:1329.30px;top:623.35px;font-size:8.80px;line-height:8.80px;color:#111;font-weight:bold;letter-spacing:1.011px;">20</div>
<div class="t" style="left:1329.80px;top:641.35px;font-size:8.80px;line-height:8.80px;color:#111;font-weight:bold;">-</div>
<div class="t" style="left:1326.80px;top:659.35px;font-size:8.80px;line-height:8.80px;color:#111;font-weight:bold;letter-spacing:0.950px;">(20)</div>
<div class="t" style="left:1326.80px;top:677.35px;font-size:8.80px;line-height:8.80px;color:#111;font-weight:bold;letter-spacing:0.950px;">(40)</div>
<div class="t" style="left:1326.80px;top:695.35px;font-size:8.80px;line-height:8.80px;color:#111;font-weight:bold;letter-spacing:0.950px;">(60)</div>
<div class="t" style="left:1326.80px;top:713.35px;font-size:8.80px;line-height:8.80px;color:#111;font-weight:bold;letter-spacing:0.950px;">(80)</div>
<div class="t" style="left:586.22px;top:724.35px;font-size:8.80px;line-height:8.80px;color:#111;font-weight:bold;letter-spacing:0.379px;">Jan</div>
<div class="t" style="left:648.92px;top:724.35px;font-size:8.80px;line-height:8.80px;color:#111;font-weight:bold;letter-spacing:0.391px;">Feb</div>
<div class="t" style="left:711.88px;top:724.35px;font-size:8.80px;line-height:8.80px;color:#111;font-weight:bold;letter-spacing:0.391px;">Mar</div>
<div class="t" style="left:775.10px;top:724.35px;font-size:8.80px;line-height:8.80px;color:#111;font-weight:bold;letter-spacing:0.379px;">Apr</div>
<div class="t" style="left:837.02px;top:724.35px;font-size:8.80px;line-height:8.80px;color:#111;font-weight:bold;letter-spacing:0.428px;">May</div>
<div class="t" style="left:900.76px;top:724.35px;font-size:8.80px;line-height:8.80px;color:#111;font-weight:bold;letter-spacing:0.391px;">Jun</div>
<div class="t" style="left:965.25px;top:724.35px;font-size:8.80px;line-height:8.80px;color:#111;font-weight:bold;letter-spacing:0.318px;">Jul</div>
<div class="t" style="left:1025.91px;top:724.35px;font-size:8.80px;line-height:8.80px;color:#111;font-weight:bold;letter-spacing:0.428px;">Aug</div>
<div class="t" style="left:1089.37px;top:724.35px;font-size:8.80px;line-height:8.80px;color:#111;font-weight:bold;letter-spacing:0.403px;">Sep</div>
<div class="t" style="left:1153.10px;top:724.35px;font-size:8.80px;line-height:8.80px;color:#111;font-weight:bold;letter-spacing:0.367px;">Oct</div>
<div class="t" style="left:1215.03px;top:724.35px;font-size:8.80px;line-height:8.80px;color:#111;font-weight:bold;letter-spacing:0.416px;">Nov</div>
<div class="t" style="left:1278.25px;top:724.35px;font-size:8.80px;line-height:8.80px;color:#111;font-weight:bold;letter-spacing:0.404px;">Dec</div>
<div style="position:absolute;left:5.00px;top:800.00px;width:1379.00px;height:22.80px;background:#0c0c0c;"></div>
<svg style="left:22px;top:807px" width="6" height="9" viewBox="0 0 6 9"><path d="M4.8 0.8 L1.2 4.5 L4.8 8.2" stroke="#9a9a9a" stroke-width="1" fill="none"/></svg>
<svg style="left:44px;top:807px" width="6" height="9" viewBox="0 0 6 9"><path d="M1.2 0.8 L4.8 4.5 L1.2 8.2" stroke="#b0b0b0" stroke-width="1" fill="none"/></svg>
<div class="t u" style="left:90.60px;top:806.96px;font-size:10.80px;line-height:10.80px;color:#e6e6e6;transform:scaleX(0.9340);transform-origin:0 0;">Contents</div>
<div style="position:absolute;left:5px;top:800px;width:988px;height:23px;overflow:hidden;">
<div style="position:absolute;left:138.10px;top:3.2px;width:61.70px;height:17px;background:#fbe86b;border-radius:3px;"></div>
<div style="position:absolute;left:205.60px;top:3.2px;width:50.90px;height:17px;background:#fbe86b;border-radius:3px;"></div>
<div style="position:absolute;left:263.00px;top:3.2px;width:75.60px;height:17px;background:#fbe86b;border-radius:3px;"></div>
<div style="position:absolute;left:345.00px;top:3.2px;width:42.00px;height:17px;background:#fbe86b;border-radius:3px;"></div>
<div style="position:absolute;left:393.80px;top:3.2px;width:41.50px;height:17px;background:#fbe86b;border-radius:3px;"></div>
<div style="position:absolute;left:441.60px;top:3.2px;width:53.90px;height:17px;background:#fbe86b;border-radius:3px;"></div>
<div style="position:absolute;left:501.70px;top:3.2px;width:43.30px;height:17px;background:#fbe86b;border-radius:3px;"></div>
<div style="position:absolute;left:551.40px;top:3.2px;width:19.60px;height:17px;background:#4db4e6;border-radius:3px;"></div>
<div style="position:absolute;left:577.60px;top:3.2px;width:22.40px;height:17px;background:#4db4e6;border-radius:3px;"></div>
<div style="position:absolute;left:606.80px;top:3.2px;width:22.90px;height:17px;background:#4db4e6;border-radius:3px;"></div>
<div style="position:absolute;left:636.00px;top:3.2px;width:54.70px;height:17px;background:#4db4e6;border-radius:3px;"></div>
<div style="position:absolute;left:697.50px;top:3.2px;width:54.40px;height:17px;background:#4db4e6;border-radius:3px;"></div>
<div style="position:absolute;left:819.80px;top:3.2px;width:22.20px;height:17px;background:#4db4e6;border-radius:3px;"></div>
<div style="position:absolute;left:848.80px;top:3.2px;width:34.20px;height:17px;background:#4db4e6;border-radius:3px;"></div>
<div style="position:absolute;left:889.30px;top:3.2px;width:40.70px;height:17px;background:#4db4e6;border-radius:3px;"></div>
<div style="position:absolute;left:936.00px;top:3.2px;width:30.70px;height:17px;background:#4db4e6;border-radius:3px;"></div>
<div style="position:absolute;left:973.00px;top:3.2px;width:52.00px;height:17px;background:#4db4e6;border-radius:3px;"></div>
<div style="position:absolute;left:134.10px;top:5px;width:1px;height:13px;background:#3a3a3a;"></div>
<div style="position:absolute;left:202.50px;top:5px;width:1px;height:13px;background:#3a3a3a;"></div>
<div style="position:absolute;left:259.20px;top:5px;width:1px;height:13px;background:#3a3a3a;"></div>
<div style="position:absolute;left:341.10px;top:5px;width:1px;height:13px;background:#3a3a3a;"></div>
<div style="position:absolute;left:389.50px;top:5px;width:1px;height:13px;background:#3a3a3a;"></div>
<div style="position:absolute;left:438.10px;top:5px;width:1px;height:13px;background:#3a3a3a;"></div>
<div style="position:absolute;left:498.20px;top:5px;width:1px;height:13px;background:#3a3a3a;"></div>
<div style="position:absolute;left:547.90px;top:5px;width:1px;height:13px;background:#3a3a3a;"></div>
<div style="position:absolute;left:573.80px;top:5px;width:1px;height:13px;background:#3a3a3a;"></div>
<div style="position:absolute;left:602.80px;top:5px;width:1px;height:13px;background:#3a3a3a;"></div>
<div style="position:absolute;left:632.20px;top:5px;width:1px;height:13px;background:#3a3a3a;"></div>
<div style="position:absolute;left:693.50px;top:5px;width:1px;height:13px;background:#3a3a3a;"></div>
<div style="position:absolute;left:754.50px;top:5px;width:1px;height:13px;background:#3a3a3a;"></div>
<div style="position:absolute;left:816.00px;top:5px;width:1px;height:13px;background:#3a3a3a;"></div>
<div style="position:absolute;left:845.00px;top:5px;width:1px;height:13px;background:#3a3a3a;"></div>
<div style="position:absolute;left:885.50px;top:5px;width:1px;height:13px;background:#3a3a3a;"></div>
<div style="position:absolute;left:932.50px;top:5px;width:1px;height:13px;background:#3a3a3a;"></div>
<div style="position:absolute;left:969.00px;top:5px;width:1px;height:13px;background:#3a3a3a;"></div>
</div>
<div class="t u" style="left:150.20px;top:806.96px;font-size:10.80px;line-height:10.80px;color:#1a1a1a;transform:scaleX(0.9051);transform-origin:0 0;">Dashboard</div>
<div class="t u" style="left:217.70px;top:806.96px;font-size:10.80px;line-height:10.80px;color:#1a1a1a;transform:scaleX(0.8670);transform-origin:0 0;">Revenue</div>
<div class="t u" style="left:274.00px;top:806.96px;font-size:10.80px;line-height:10.80px;color:#1a1a1a;transform:scaleX(0.8506);transform-origin:0 0;">COGS &amp; OPEX</div>
<div class="t u" style="left:356.20px;top:806.96px;font-size:10.80px;line-height:10.80px;color:#1a1a1a;transform:scaleX(0.8941);transform-origin:0 0;">Payroll</div>
<div class="t u" style="left:405.00px;top:806.96px;font-size:10.80px;line-height:10.80px;color:#1a1a1a;transform:scaleX(0.7921);transform-origin:0 0;">CAPEX</div>
<div class="t u" style="left:452.60px;top:806.96px;font-size:10.80px;line-height:10.80px;color:#1a1a1a;transform:scaleX(0.8985);transform-origin:0 0;">CapTable</div>
<div class="t u" style="left:513.00px;top:806.96px;font-size:10.80px;line-height:10.80px;color:#1a1a1a;transform:scaleX(0.9007);transform-origin:0 0;">Capital</div>
<div class="t u" style="left:562.70px;top:806.96px;font-size:10.80px;line-height:10.80px;color:#1a1a1a;transform:scaleX(0.7349);transform-origin:0 0;">IS</div>
<div class="t u" style="left:588.60px;top:806.96px;font-size:10.80px;line-height:10.80px;color:#1a1a1a;transform:scaleX(0.7907);transform-origin:0 0;">CF</div>
<div class="t u" style="left:618.30px;top:806.96px;font-size:10.80px;line-height:10.80px;color:#1a1a1a;transform:scaleX(0.7421);transform-origin:0 0;">BS</div>
<div class="t u" style="left:647.30px;top:806.96px;font-size:10.80px;line-height:10.80px;color:#1a1a1a;transform:scaleX(0.8749);transform-origin:0 0;">Scenarios</div>
<div class="t u" style="left:708.80px;top:806.96px;font-size:10.80px;line-height:10.80px;color:#1a1a1a;transform:scaleX(0.9451);transform-origin:0 0;">Valuation</div>
<div class="t u" style="left:830.60px;top:806.96px;font-size:10.80px;line-height:10.80px;color:#1a1a1a;transform:scaleX(0.6936);transform-origin:0 0;">BE</div>
<div class="t u" style="left:860.00px;top:806.96px;font-size:10.80px;line-height:10.80px;color:#1a1a1a;transform:scaleX(0.7963);transform-origin:0 0;">ROIC</div>
<div class="t u" style="left:900.60px;top:806.96px;font-size:10.80px;line-height:10.80px;color:#1a1a1a;transform:scaleX(0.8709);transform-origin:0 0;">Charts</div>
<div class="t u" style="left:947.20px;top:806.96px;font-size:10.80px;line-height:10.80px;color:#1a1a1a;transform:scaleX(0.7987);transform-origin:0 0;">KPIs</div>
<div class="t u" style="left:983.80px;top:806.96px;font-size:10.80px;line-height:10.80px;color:#1a1a1a;transform:scaleX(0.8345);transform-origin:0 0;">Sc</div>
<div style="position:absolute;left:763.9px;top:799.5px;width:54.1px;height:21px;background:linear-gradient(#ffffff,#ffffff 60%,#e4eef6);border-radius:0 0 4px 4px;"></div>
<div class="t u" style="left:769.60px;top:805.16px;font-size:10.80px;line-height:10.80px;color:#1e1e1e;transform:scaleX(0.9086);transform-origin:0 0;-webkit-text-stroke:0.3px #1e1e1e;">Summary</div>
<div style="position:absolute;left:770.00px;top:816.60px;width:42.00px;height:1.20px;background:#2e8b4e;"></div>
<div style="position:absolute;left:993.00px;top:800.00px;width:80.00px;height:22.00px;background:#0c0c0c;"></div>
<div style="position:absolute;left:1000.00px;top:810.20px;width:1.80px;height:1.80px;background:#d0d0d0;border-radius:1px;"></div>
<div style="position:absolute;left:1003.00px;top:810.20px;width:1.80px;height:1.80px;background:#d0d0d0;border-radius:1px;"></div>
<div style="position:absolute;left:1006.00px;top:810.20px;width:1.80px;height:1.80px;background:#d0d0d0;border-radius:1px;"></div>
<div style="position:absolute;left:1021.50px;top:810.60px;width:9.00px;height:1.00px;background:#d0d0d0;"></div>
<div style="position:absolute;left:1025.50px;top:806.60px;width:1.00px;height:9.00px;background:#d0d0d0;"></div>
<div style="position:absolute;left:1049.20px;top:807.20px;width:1.70px;height:1.70px;background:#bdbdbd;border-radius:1px;"></div>
<div style="position:absolute;left:1049.20px;top:810.20px;width:1.70px;height:1.70px;background:#bdbdbd;border-radius:1px;"></div>
<div style="position:absolute;left:1049.20px;top:813.20px;width:1.70px;height:1.70px;background:#bdbdbd;border-radius:1px;"></div>
<svg style="left:1064px;top:807px" width="6" height="8" viewBox="0 0 6 8"><path d="M5.5 0.5 V7.5 L0.5 4 Z" fill="#8a8a8a"/></svg>
<div style="position:absolute;left:1074.00px;top:808.00px;width:257.40px;height:6.60px;background:#9a9a9a;border-radius:3.3px;"></div>
<svg style="left:1361px;top:807px" width="6" height="8" viewBox="0 0 6 8"><path d="M0.5 0.5 V7.5 L5.5 4 Z" fill="#8a8a8a"/></svg>
<div style="position:absolute;left:5.00px;top:822.80px;width:1379.00px;height:16.00px;background:#161616;"></div>
<div class="t u" style="left:12.50px;top:827.22px;font-size:8.60px;line-height:8.60px;color:#d4d4d4;transform:scaleX(0.8248);transform-origin:0 0;">Ready</div>
<svg style="left:46px;top:825.5px" width="12" height="11" viewBox="0 0 12 11">
<rect x="0.5" y="0.5" width="9" height="9" stroke="#c0c0c0" stroke-width="0.9" fill="none"/>
<path d="M0.5 3.5 H9.5 M3.5 0.5 V9.5" stroke="#c0c0c0" stroke-width="0.7"/>
<circle cx="8.5" cy="7.5" r="3" fill="#161616" stroke="#d0d0d0" stroke-width="0.9"/><circle cx="8.5" cy="7.5" r="1.1" fill="#d0d0d0"/></svg>
<svg style="left:69px;top:825px" width="12" height="12" viewBox="0 0 12 12">
<circle cx="5" cy="2" r="1.5" stroke="#d0d0d0" stroke-width="0.9" fill="none"/>
<path d="M1 4.5 H9 M5 4 V7.5 L2.5 11 M5 7.5 L7 9" stroke="#d0d0d0" stroke-width="0.9" fill="none"/>
<path d="M7.8 8.5 L11 11.5 M11 8.5 L7.8 11.5" stroke="#d0d0d0" stroke-width="0.9"/></svg>
<div class="t u" style="left:83.50px;top:827.22px;font-size:8.60px;line-height:8.60px;color:#ececec;font-weight:bold;transform:scaleX(0.8709);transform-origin:0 0;">Accessibility: Investigate</div>
<div style="position:absolute;left:1171.00px;top:822.80px;width:29.00px;height:16.00px;background:#262626;"></div>
<svg style="left:1179px;top:825.5px" width="12" height="11" viewBox="0 0 12 11">
<rect x="0.5" y="0.5" width="10.5" height="9.5" stroke="#d0d0d0" stroke-width="0.9" fill="none"/>
<path d="M0.5 3.7 H11 M0.5 6.9 H11 M4 0.5 V10 M7.5 0.5 V10" stroke="#d0d0d0" stroke-width="0.8"/></svg>
<svg style="left:1208px;top:825.5px" width="12" height="11" viewBox="0 0 12 11">
<rect x="0.5" y="0.5" width="10.5" height="9.5" stroke="#c8c8c8" stroke-width="0.9" fill="none"/>
<rect x="3" y="2" width="5.5" height="6.5" stroke="#c8c8c8" stroke-width="0.8" fill="none"/></svg>
<svg style="left:1237px;top:825.5px" width="12" height="11" viewBox="0 0 12 11">
<path d="M0.5 10 V0.5 H11 V10 H0.5 M0.5 6 H5 V0.5" stroke="#c8c8c8" stroke-width="0.9" fill="none"/></svg>
<div style="position:absolute;left:1260.50px;top:830.50px;width:6.00px;height:0.90px;background:#a0a0a0;"></div>
<div style="position:absolute;left:1270.50px;top:830.50px;width:71.00px;height:1.00px;background:#8a8a8a;"></div>
<div style="position:absolute;left:1306.00px;top:826.50px;width:3.60px;height:8.50px;background:#b8b8b8;border-radius:1px;"></div>
<div style="position:absolute;left:1345.00px;top:830.50px;width:6.00px;height:0.90px;background:#a0a0a0;"></div>
<div style="position:absolute;left:1347.50px;top:828.00px;width:1.00px;height:6.00px;background:#a0a0a0;"></div>
<div class="t u" style="left:1360.00px;top:827.02px;font-size:8.60px;line-height:8.60px;color:#dedede;transform:scaleX(0.9031);transform-origin:0 0;">115%</div>
</body></html>
